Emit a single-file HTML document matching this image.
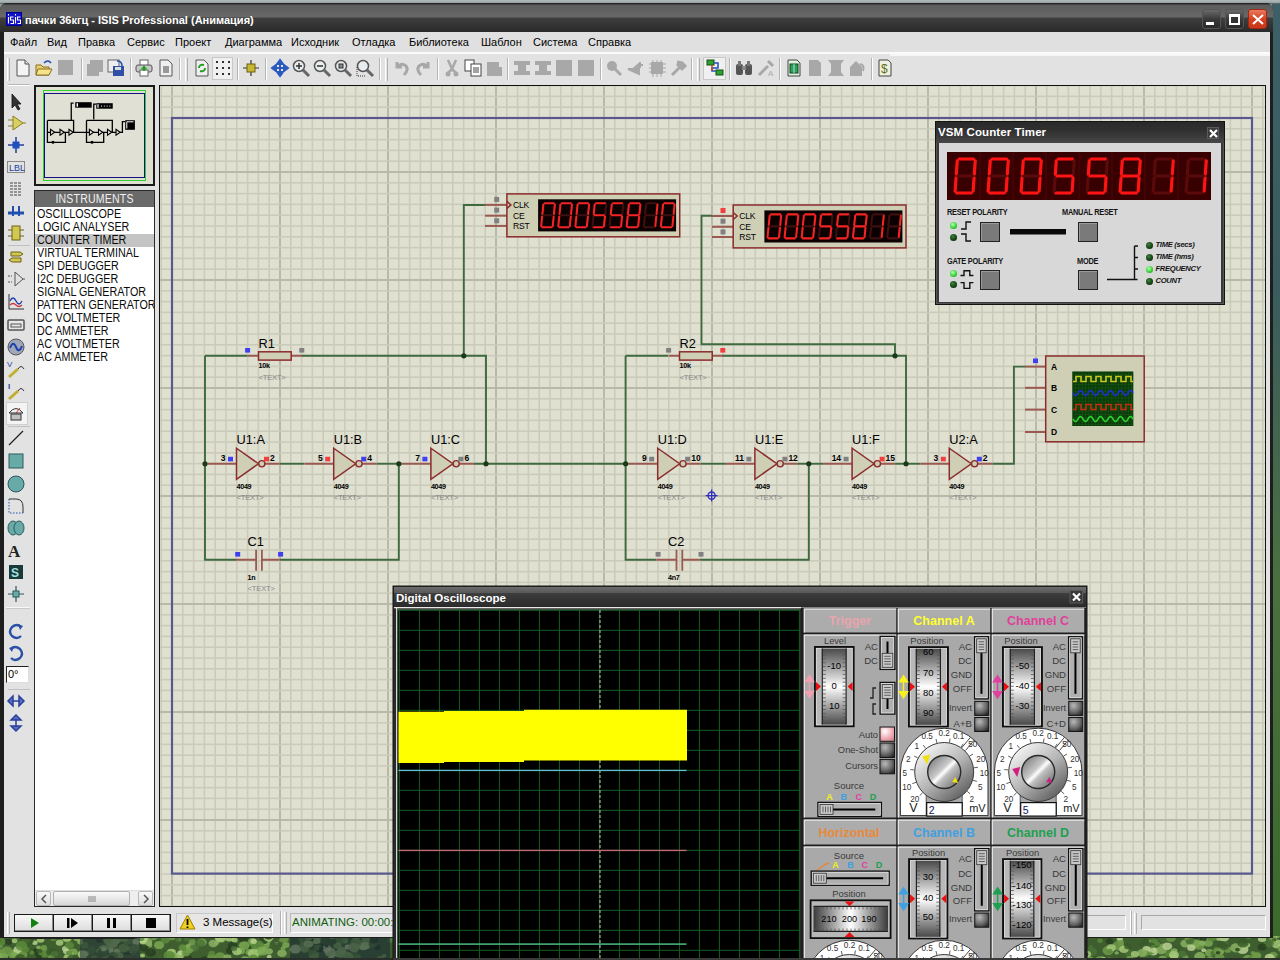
<!DOCTYPE html>
<html><head><meta charset="utf-8">
<style>
*{margin:0;padding:0;box-sizing:border-box}
html,body{width:1280px;height:960px;overflow:hidden;background:#8a9898;font-family:"Liberation Sans",sans-serif}
.a{position:absolute}
svg{position:absolute;overflow:visible}
#desk-top{left:0;top:0;width:1280px;height:4px;background:linear-gradient(180deg,#b0b8b8,#a0aaaa 60%,#3a4a48)}
#desk-right{left:1272px;top:4px;width:8px;height:956px;background:linear-gradient(180deg,#3d6068 0%,#3a5c5e 30%,#4a7040 60%,#3a6a2a 100%)}
#desk-bot{left:0;top:936px;width:1280px;height:24px;background:linear-gradient(90deg,#4a6a30,#2a4020 15%,#5a7a3a 30%,#3a5a28 50%,#4a6a30 70%,#2a3a28 85%,#4a6a30)}
#win{left:0;top:3px;width:1273px;height:935px;background:#1e1e1e;border-radius:7px 7px 0 0}
#title{left:0;top:3px;width:1273px;height:29px;border-radius:7px 7px 0 0;background:linear-gradient(180deg,#222 0px,#2a2a2a 1px,#5c5c5c 2px,#686868 14px,#3e3e3e 15px,#2a2a2a 29px)}
#title .t{left:25px;top:11px;font-size:11px;font-weight:bold;color:#fff;white-space:nowrap}
#menu{left:4px;top:32px;width:1265px;height:20px;background:#e0e0e0}
#menu span{position:absolute;top:4px;font-size:11px;color:#000;white-space:nowrap}
#tb{left:4px;top:52px;width:1265px;height:33px;background:#e2e2e2;border-top:2px solid #fafafa}
#lstrip{left:4px;top:85px;width:28px;height:822px;background:#e2e2e2}
#ovw{left:34px;top:85px;width:121px;height:101px;background:#e0e0d0;border:2px solid #1a1a1a}
#lhead{left:34px;top:190px;width:121px;height:17px;background:#6a6a6a;color:#f4f4f4;font-size:12px;text-align:center;line-height:17px;border:1px solid #222;border-bottom:none}
#list{left:34px;top:207px;width:121px;height:700px;background:#fff;border:1px solid #222;border-top:none}
#list div{position:absolute;left:3px;font-size:11.5px;color:#000;white-space:nowrap;letter-spacing:-0.1px;line-height:13px}
#canvas{left:159px;top:85px;width:1107px;height:822px;background:#e0e0d0;border:1px solid #111;overflow:hidden}
#status{left:4px;top:907px;width:1265px;height:30px;background:#e2e2e2}
</style></head><body>

<div class="a" id="desk-top"></div>
<div class="a" id="desk-right"></div>
<div class="a" id="desk-bot"></div>
<div class="a" style="left:0;top:936px;width:1280px;height:24px;overflow:hidden;background:#3e5e30"><svg style="left:0;top:0" width="1280" height="24"><ellipse cx="412.7" cy="1.9" rx="4.6" ry="3.7" fill="#6e9a48" opacity="0.85"/><ellipse cx="1054.4" cy="0.4" rx="4.3" ry="3.5" fill="#b8d090" opacity="0.85"/><ellipse cx="272.0" cy="0.2" rx="3.7" ry="2.9" fill="#a4c878" opacity="0.85"/><ellipse cx="112.0" cy="9.0" rx="5.3" ry="4.2" fill="#6e9a48" opacity="0.85"/><ellipse cx="1217.2" cy="14.4" rx="4.3" ry="3.5" fill="#5a8a3a" opacity="0.85"/><ellipse cx="739.5" cy="8.3" rx="5.9" ry="4.7" fill="#5a8a3a" opacity="0.85"/><ellipse cx="713.1" cy="1.5" rx="3.7" ry="2.9" fill="#b8d090" opacity="0.85"/><ellipse cx="147.0" cy="6.0" rx="5.3" ry="4.2" fill="#88b060" opacity="0.85"/><ellipse cx="127.9" cy="12.9" rx="2.8" ry="2.2" fill="#6e9a48" opacity="0.85"/><ellipse cx="701.6" cy="-0.4" rx="2.2" ry="1.8" fill="#a4c878" opacity="0.85"/><ellipse cx="635.4" cy="11.8" rx="5.1" ry="4.1" fill="#7aa852" opacity="0.85"/><ellipse cx="750.4" cy="9.8" rx="3.2" ry="2.6" fill="#88b060" opacity="0.85"/><ellipse cx="896.7" cy="4.3" rx="4.3" ry="3.4" fill="#b8d090" opacity="0.85"/><ellipse cx="633.7" cy="6.9" rx="3.8" ry="3.0" fill="#6e9a48" opacity="0.85"/><ellipse cx="147.3" cy="8.9" rx="5.0" ry="4.0" fill="#88b060" opacity="0.85"/><ellipse cx="1198.9" cy="9.0" rx="5.8" ry="4.7" fill="#6e9a48" opacity="0.85"/><ellipse cx="981.3" cy="12.9" rx="5.5" ry="4.4" fill="#283e20" opacity="0.85"/><ellipse cx="433.8" cy="7.1" rx="4.0" ry="3.2" fill="#7aa852" opacity="0.85"/><ellipse cx="83.7" cy="0.4" rx="3.1" ry="2.5" fill="#6e9a48" opacity="0.85"/><ellipse cx="73.3" cy="16.2" rx="4.6" ry="3.7" fill="#7aa852" opacity="0.85"/><ellipse cx="362.1" cy="8.0" rx="4.7" ry="3.7" fill="#5a8a3a" opacity="0.85"/><ellipse cx="1208.4" cy="7.2" rx="4.4" ry="3.6" fill="#7aa852" opacity="0.85"/><ellipse cx="71.1" cy="18.0" rx="2.5" ry="2.0" fill="#a4c878" opacity="0.85"/><ellipse cx="508.3" cy="21.8" rx="4.0" ry="3.2" fill="#88b060" opacity="0.85"/><ellipse cx="574.5" cy="12.3" rx="5.5" ry="4.4" fill="#4a7236" opacity="0.85"/><ellipse cx="1109.5" cy="5.2" rx="3.7" ry="2.9" fill="#283e20" opacity="0.85"/><ellipse cx="875.7" cy="7.9" rx="2.9" ry="2.3" fill="#6e9a48" opacity="0.85"/><ellipse cx="222.3" cy="4.0" rx="2.9" ry="2.3" fill="#7aa852" opacity="0.85"/><ellipse cx="1067.1" cy="2.7" rx="3.1" ry="2.5" fill="#88b060" opacity="0.85"/><ellipse cx="535.4" cy="7.6" rx="4.3" ry="3.4" fill="#88b060" opacity="0.85"/><ellipse cx="885.7" cy="11.4" rx="4.5" ry="3.6" fill="#5a8a3a" opacity="0.85"/><ellipse cx="584.1" cy="20.6" rx="5.8" ry="4.6" fill="#b8d090" opacity="0.85"/><ellipse cx="501.2" cy="8.4" rx="2.4" ry="1.9" fill="#4a7236" opacity="0.85"/><ellipse cx="75.3" cy="-0.2" rx="2.8" ry="2.3" fill="#88b060" opacity="0.85"/><ellipse cx="136.8" cy="13.6" rx="2.4" ry="1.9" fill="#88b060" opacity="0.85"/><ellipse cx="687.2" cy="22.7" rx="4.5" ry="3.6" fill="#6e9a48" opacity="0.85"/><ellipse cx="1122.9" cy="14.0" rx="2.6" ry="2.1" fill="#3a5a28" opacity="0.85"/><ellipse cx="1227.6" cy="13.7" rx="3.9" ry="3.1" fill="#6e9a48" opacity="0.85"/><ellipse cx="1090.1" cy="23.8" rx="3.9" ry="3.1" fill="#7aa852" opacity="0.85"/><ellipse cx="397.3" cy="1.7" rx="5.0" ry="4.0" fill="#3a5a28" opacity="0.85"/><ellipse cx="612.4" cy="16.0" rx="4.1" ry="3.3" fill="#a4c878" opacity="0.85"/><ellipse cx="1221.8" cy="11.7" rx="2.6" ry="2.1" fill="#b8d090" opacity="0.85"/><ellipse cx="1174.2" cy="17.7" rx="3.2" ry="2.6" fill="#6e9a48" opacity="0.85"/><ellipse cx="893.1" cy="4.8" rx="3.5" ry="2.8" fill="#88b060" opacity="0.85"/><ellipse cx="453.8" cy="3.8" rx="4.2" ry="3.3" fill="#b8d090" opacity="0.85"/><ellipse cx="420.3" cy="3.8" rx="5.2" ry="4.2" fill="#a4c878" opacity="0.85"/><ellipse cx="1034.8" cy="19.3" rx="5.0" ry="4.0" fill="#a4c878" opacity="0.85"/><ellipse cx="252.9" cy="10.8" rx="4.9" ry="3.9" fill="#5a8a3a" opacity="0.85"/><ellipse cx="1014.2" cy="10.3" rx="2.8" ry="2.2" fill="#283e20" opacity="0.85"/><ellipse cx="571.9" cy="22.4" rx="6.0" ry="4.8" fill="#283e20" opacity="0.85"/><ellipse cx="98.9" cy="0.7" rx="3.9" ry="3.1" fill="#283e20" opacity="0.85"/><ellipse cx="258.6" cy="14.2" rx="5.6" ry="4.5" fill="#5a8a3a" opacity="0.85"/><ellipse cx="613.5" cy="15.0" rx="5.2" ry="4.2" fill="#6e9a48" opacity="0.85"/><ellipse cx="1071.7" cy="1.1" rx="3.6" ry="2.8" fill="#a4c878" opacity="0.85"/><ellipse cx="611.7" cy="2.6" rx="5.2" ry="4.1" fill="#283e20" opacity="0.85"/><ellipse cx="106.9" cy="22.6" rx="4.9" ry="3.9" fill="#7aa852" opacity="0.85"/><ellipse cx="512.8" cy="22.6" rx="4.9" ry="3.9" fill="#88b060" opacity="0.85"/><ellipse cx="1276.1" cy="-1.3" rx="4.4" ry="3.5" fill="#7aa852" opacity="0.85"/><ellipse cx="1035.4" cy="1.8" rx="5.3" ry="4.2" fill="#7aa852" opacity="0.85"/><ellipse cx="842.9" cy="7.1" rx="4.2" ry="3.4" fill="#88b060" opacity="0.85"/><ellipse cx="22.6" cy="18.8" rx="4.9" ry="3.9" fill="#6e9a48" opacity="0.85"/><ellipse cx="674.3" cy="22.3" rx="3.7" ry="3.0" fill="#a4c878" opacity="0.85"/><ellipse cx="1060.7" cy="3.5" rx="3.0" ry="2.4" fill="#3a5a28" opacity="0.85"/><ellipse cx="641.5" cy="17.9" rx="3.3" ry="2.6" fill="#b8d090" opacity="0.85"/><ellipse cx="535.5" cy="1.4" rx="5.6" ry="4.5" fill="#283e20" opacity="0.85"/><ellipse cx="1153.0" cy="15.2" rx="5.3" ry="4.2" fill="#b8d090" opacity="0.85"/><ellipse cx="537.6" cy="21.9" rx="4.0" ry="3.2" fill="#b8d090" opacity="0.85"/><ellipse cx="190.9" cy="11.3" rx="5.5" ry="4.4" fill="#88b060" opacity="0.85"/><ellipse cx="780.0" cy="18.2" rx="2.6" ry="2.1" fill="#88b060" opacity="0.85"/><ellipse cx="605.8" cy="16.9" rx="4.2" ry="3.4" fill="#283e20" opacity="0.85"/><ellipse cx="875.2" cy="11.8" rx="3.9" ry="3.1" fill="#6e9a48" opacity="0.85"/><ellipse cx="1134.4" cy="-0.5" rx="2.8" ry="2.2" fill="#5a8a3a" opacity="0.85"/><ellipse cx="991.2" cy="11.2" rx="4.2" ry="3.4" fill="#6e9a48" opacity="0.85"/><ellipse cx="566.8" cy="13.9" rx="4.0" ry="3.2" fill="#b8d090" opacity="0.85"/><ellipse cx="252.2" cy="5.2" rx="4.0" ry="3.2" fill="#7aa852" opacity="0.85"/><ellipse cx="650.0" cy="4.4" rx="4.1" ry="3.3" fill="#3a5a28" opacity="0.85"/><ellipse cx="1185.4" cy="21.2" rx="2.8" ry="2.2" fill="#7aa852" opacity="0.85"/><ellipse cx="171.9" cy="1.2" rx="3.8" ry="3.0" fill="#6e9a48" opacity="0.85"/><ellipse cx="860.8" cy="9.1" rx="2.9" ry="2.3" fill="#3a5a28" opacity="0.85"/><ellipse cx="1006.3" cy="21.3" rx="2.6" ry="2.1" fill="#283e20" opacity="0.85"/><ellipse cx="179.4" cy="21.0" rx="5.9" ry="4.7" fill="#a4c878" opacity="0.85"/><ellipse cx="958.2" cy="0.4" rx="5.5" ry="4.4" fill="#88b060" opacity="0.85"/><ellipse cx="1271.9" cy="19.6" rx="2.6" ry="2.1" fill="#4a7236" opacity="0.85"/><ellipse cx="1277.4" cy="8.5" rx="3.7" ry="2.9" fill="#283e20" opacity="0.85"/><ellipse cx="405.9" cy="16.8" rx="2.1" ry="1.7" fill="#b8d090" opacity="0.85"/><ellipse cx="586.7" cy="16.3" rx="3.5" ry="2.8" fill="#b8d090" opacity="0.85"/><ellipse cx="799.9" cy="11.3" rx="2.3" ry="1.8" fill="#a4c878" opacity="0.85"/><ellipse cx="1248.5" cy="0.7" rx="3.1" ry="2.4" fill="#5a8a3a" opacity="0.85"/><ellipse cx="1163.6" cy="2.7" rx="5.0" ry="4.0" fill="#4a7236" opacity="0.85"/><ellipse cx="1091.0" cy="15.6" rx="5.8" ry="4.6" fill="#4a7236" opacity="0.85"/><ellipse cx="187.7" cy="21.9" rx="4.3" ry="3.4" fill="#283e20" opacity="0.85"/><ellipse cx="110.4" cy="-0.5" rx="4.8" ry="3.8" fill="#4a7236" opacity="0.85"/><ellipse cx="1149.9" cy="5.0" rx="2.1" ry="1.7" fill="#6e9a48" opacity="0.85"/><ellipse cx="1029.1" cy="0.2" rx="5.4" ry="4.3" fill="#6e9a48" opacity="0.85"/><ellipse cx="336.1" cy="1.2" rx="2.0" ry="1.6" fill="#b8d090" opacity="0.85"/><ellipse cx="533.9" cy="21.8" rx="4.5" ry="3.6" fill="#5a8a3a" opacity="0.85"/><ellipse cx="674.7" cy="4.2" rx="2.4" ry="2.0" fill="#88b060" opacity="0.85"/><ellipse cx="332.8" cy="2.7" rx="5.7" ry="4.6" fill="#3a5a28" opacity="0.85"/><ellipse cx="680.1" cy="3.4" rx="3.8" ry="3.0" fill="#88b060" opacity="0.85"/><ellipse cx="344.0" cy="18.9" rx="6.0" ry="4.8" fill="#5a8a3a" opacity="0.85"/><ellipse cx="14.8" cy="17.1" rx="4.2" ry="3.4" fill="#a4c878" opacity="0.85"/><ellipse cx="658.4" cy="4.4" rx="3.8" ry="3.0" fill="#4a7236" opacity="0.85"/><ellipse cx="841.9" cy="12.2" rx="5.6" ry="4.4" fill="#b8d090" opacity="0.85"/><ellipse cx="392.0" cy="3.6" rx="2.9" ry="2.3" fill="#a4c878" opacity="0.85"/><ellipse cx="1068.6" cy="16.4" rx="4.5" ry="3.6" fill="#4a7236" opacity="0.85"/><ellipse cx="1271.4" cy="23.5" rx="5.3" ry="4.3" fill="#5a8a3a" opacity="0.85"/><ellipse cx="86.2" cy="17.3" rx="3.0" ry="2.4" fill="#88b060" opacity="0.85"/><ellipse cx="66.5" cy="15.3" rx="3.5" ry="2.8" fill="#b8d090" opacity="0.85"/><ellipse cx="860.0" cy="5.3" rx="3.0" ry="2.4" fill="#3a5a28" opacity="0.85"/><ellipse cx="53.4" cy="2.8" rx="3.1" ry="2.5" fill="#5a8a3a" opacity="0.85"/><ellipse cx="334.6" cy="23.0" rx="5.9" ry="4.7" fill="#b8d090" opacity="0.85"/><ellipse cx="412.4" cy="-1.1" rx="5.5" ry="4.4" fill="#a4c878" opacity="0.85"/><ellipse cx="455.0" cy="-2.0" rx="3.5" ry="2.8" fill="#7aa852" opacity="0.85"/><ellipse cx="354.8" cy="15.1" rx="3.0" ry="2.4" fill="#5a8a3a" opacity="0.85"/><ellipse cx="112.2" cy="19.2" rx="2.6" ry="2.1" fill="#5a8a3a" opacity="0.85"/><ellipse cx="503.2" cy="5.8" rx="4.5" ry="3.6" fill="#6e9a48" opacity="0.85"/><ellipse cx="750.4" cy="11.8" rx="5.0" ry="4.0" fill="#4a7236" opacity="0.85"/><ellipse cx="981.0" cy="16.7" rx="4.0" ry="3.2" fill="#3a5a28" opacity="0.85"/><ellipse cx="929.2" cy="14.7" rx="2.2" ry="1.7" fill="#b8d090" opacity="0.85"/><ellipse cx="804.3" cy="17.1" rx="5.2" ry="4.2" fill="#88b060" opacity="0.85"/><ellipse cx="1168.8" cy="17.6" rx="4.3" ry="3.4" fill="#5a8a3a" opacity="0.85"/><ellipse cx="1061.1" cy="13.2" rx="5.6" ry="4.5" fill="#a4c878" opacity="0.85"/><ellipse cx="104.8" cy="-0.9" rx="4.5" ry="3.6" fill="#6e9a48" opacity="0.85"/><ellipse cx="480.8" cy="9.7" rx="2.2" ry="1.8" fill="#5a8a3a" opacity="0.85"/><ellipse cx="802.8" cy="15.7" rx="4.0" ry="3.2" fill="#5a8a3a" opacity="0.85"/><ellipse cx="584.5" cy="-0.2" rx="5.7" ry="4.6" fill="#b8d090" opacity="0.85"/><ellipse cx="113.6" cy="11.7" rx="5.0" ry="4.0" fill="#7aa852" opacity="0.85"/><ellipse cx="320.3" cy="-0.1" rx="3.1" ry="2.4" fill="#a4c878" opacity="0.85"/><ellipse cx="292.6" cy="14.9" rx="3.8" ry="3.1" fill="#4a7236" opacity="0.85"/><ellipse cx="94.0" cy="21.7" rx="3.1" ry="2.5" fill="#5a8a3a" opacity="0.85"/><ellipse cx="790.9" cy="14.7" rx="2.3" ry="1.8" fill="#88b060" opacity="0.85"/><ellipse cx="423.0" cy="14.9" rx="4.8" ry="3.8" fill="#88b060" opacity="0.85"/><ellipse cx="11.1" cy="-0.4" rx="3.1" ry="2.5" fill="#6e9a48" opacity="0.85"/><ellipse cx="887.9" cy="15.6" rx="3.2" ry="2.5" fill="#b8d090" opacity="0.85"/><ellipse cx="363.4" cy="10.1" rx="5.1" ry="4.1" fill="#b8d090" opacity="0.85"/><ellipse cx="252.0" cy="23.4" rx="5.7" ry="4.6" fill="#5a8a3a" opacity="0.85"/><ellipse cx="368.6" cy="-0.0" rx="4.0" ry="3.2" fill="#7aa852" opacity="0.85"/><ellipse cx="1277.2" cy="8.1" rx="5.7" ry="4.5" fill="#a4c878" opacity="0.85"/><ellipse cx="91.3" cy="0.3" rx="5.0" ry="4.0" fill="#3a5a28" opacity="0.85"/><ellipse cx="1224.0" cy="1.4" rx="5.3" ry="4.2" fill="#b8d090" opacity="0.85"/><ellipse cx="355.6" cy="0.9" rx="3.5" ry="2.8" fill="#7aa852" opacity="0.85"/><ellipse cx="1153.0" cy="10.6" rx="2.1" ry="1.7" fill="#5a8a3a" opacity="0.85"/><ellipse cx="1220.4" cy="15.7" rx="3.6" ry="2.9" fill="#88b060" opacity="0.85"/><ellipse cx="531.9" cy="7.8" rx="2.5" ry="2.0" fill="#283e20" opacity="0.85"/><ellipse cx="-2.8" cy="17.5" rx="5.4" ry="4.3" fill="#6e9a48" opacity="0.85"/><ellipse cx="1207.4" cy="3.1" rx="2.0" ry="1.6" fill="#3a5a28" opacity="0.85"/><ellipse cx="321.6" cy="-0.3" rx="3.6" ry="2.8" fill="#6e9a48" opacity="0.85"/><ellipse cx="460.3" cy="9.1" rx="3.1" ry="2.5" fill="#5a8a3a" opacity="0.85"/><ellipse cx="357.0" cy="-0.7" rx="4.6" ry="3.7" fill="#88b060" opacity="0.85"/><ellipse cx="316.6" cy="4.9" rx="4.0" ry="3.2" fill="#a4c878" opacity="0.85"/><ellipse cx="992.4" cy="18.4" rx="3.7" ry="3.0" fill="#5a8a3a" opacity="0.85"/><ellipse cx="1042.4" cy="14.4" rx="5.7" ry="4.5" fill="#b8d090" opacity="0.85"/><ellipse cx="703.5" cy="16.7" rx="2.2" ry="1.8" fill="#4a7236" opacity="0.85"/><ellipse cx="576.6" cy="17.6" rx="4.6" ry="3.7" fill="#3a5a28" opacity="0.85"/><ellipse cx="621.4" cy="21.7" rx="4.2" ry="3.4" fill="#88b060" opacity="0.85"/><ellipse cx="604.1" cy="6.9" rx="3.2" ry="2.6" fill="#3a5a28" opacity="0.85"/><ellipse cx="519.0" cy="4.2" rx="3.9" ry="3.1" fill="#4a7236" opacity="0.85"/><ellipse cx="149.5" cy="14.7" rx="2.3" ry="1.8" fill="#b8d090" opacity="0.85"/><ellipse cx="1163.7" cy="10.9" rx="2.9" ry="2.3" fill="#283e20" opacity="0.85"/><ellipse cx="1280.5" cy="9.7" rx="2.6" ry="2.0" fill="#a4c878" opacity="0.85"/><ellipse cx="309.9" cy="2.5" rx="4.2" ry="3.4" fill="#283e20" opacity="0.85"/><ellipse cx="303.5" cy="4.7" rx="4.3" ry="3.4" fill="#5a8a3a" opacity="0.85"/><ellipse cx="962.1" cy="8.7" rx="3.7" ry="2.9" fill="#b8d090" opacity="0.85"/><ellipse cx="265.9" cy="5.0" rx="5.0" ry="4.0" fill="#7aa852" opacity="0.85"/><ellipse cx="353.0" cy="23.2" rx="2.5" ry="2.0" fill="#b8d090" opacity="0.85"/><ellipse cx="677.7" cy="18.5" rx="5.4" ry="4.3" fill="#6e9a48" opacity="0.85"/><ellipse cx="344.6" cy="4.5" rx="3.6" ry="2.9" fill="#7aa852" opacity="0.85"/><ellipse cx="552.1" cy="6.1" rx="5.3" ry="4.2" fill="#5a8a3a" opacity="0.85"/><ellipse cx="159.1" cy="9.1" rx="5.1" ry="4.0" fill="#7aa852" opacity="0.85"/><ellipse cx="1244.1" cy="10.7" rx="2.3" ry="1.8" fill="#b8d090" opacity="0.85"/><ellipse cx="1098.5" cy="23.3" rx="3.0" ry="2.4" fill="#6e9a48" opacity="0.85"/><ellipse cx="283.7" cy="2.0" rx="5.9" ry="4.7" fill="#6e9a48" opacity="0.85"/><ellipse cx="1209.5" cy="16.8" rx="4.6" ry="3.7" fill="#7aa852" opacity="0.85"/><ellipse cx="104.7" cy="18.2" rx="2.0" ry="1.6" fill="#88b060" opacity="0.85"/><ellipse cx="295.0" cy="21.9" rx="4.6" ry="3.7" fill="#3a5a28" opacity="0.85"/><ellipse cx="1236.5" cy="14.3" rx="4.1" ry="3.3" fill="#4a7236" opacity="0.85"/><ellipse cx="896.2" cy="0.9" rx="2.3" ry="1.8" fill="#b8d090" opacity="0.85"/><ellipse cx="1212.2" cy="3.0" rx="3.0" ry="2.4" fill="#5a8a3a" opacity="0.85"/><ellipse cx="8.5" cy="5.8" rx="3.8" ry="3.1" fill="#283e20" opacity="0.85"/><ellipse cx="826.5" cy="21.0" rx="3.9" ry="3.1" fill="#a4c878" opacity="0.85"/><ellipse cx="700.6" cy="-1.2" rx="3.6" ry="2.9" fill="#3a5a28" opacity="0.85"/><ellipse cx="66.3" cy="3.0" rx="5.5" ry="4.4" fill="#4a7236" opacity="0.85"/><ellipse cx="99.6" cy="3.9" rx="3.7" ry="3.0" fill="#283e20" opacity="0.85"/><ellipse cx="287.6" cy="-1.1" rx="3.4" ry="2.7" fill="#4a7236" opacity="0.85"/><ellipse cx="462.4" cy="8.3" rx="2.0" ry="1.6" fill="#3a5a28" opacity="0.85"/><ellipse cx="948.5" cy="11.1" rx="2.8" ry="2.3" fill="#a4c878" opacity="0.85"/><ellipse cx="397.1" cy="19.3" rx="2.9" ry="2.3" fill="#a4c878" opacity="0.85"/><ellipse cx="336.9" cy="21.1" rx="2.4" ry="1.9" fill="#7aa852" opacity="0.85"/><ellipse cx="782.0" cy="21.3" rx="3.9" ry="3.2" fill="#5a8a3a" opacity="0.85"/><ellipse cx="1218.9" cy="1.8" rx="3.6" ry="2.9" fill="#a4c878" opacity="0.85"/><ellipse cx="25.5" cy="13.5" rx="3.7" ry="2.9" fill="#5a8a3a" opacity="0.85"/><ellipse cx="232.5" cy="9.7" rx="4.8" ry="3.9" fill="#283e20" opacity="0.85"/><ellipse cx="940.2" cy="23.9" rx="5.7" ry="4.6" fill="#283e20" opacity="0.85"/><ellipse cx="241.0" cy="15.0" rx="4.1" ry="3.3" fill="#7aa852" opacity="0.85"/><ellipse cx="36.1" cy="15.3" rx="3.5" ry="2.8" fill="#283e20" opacity="0.85"/><ellipse cx="1265.6" cy="9.5" rx="2.4" ry="1.9" fill="#6e9a48" opacity="0.85"/><ellipse cx="356.0" cy="7.1" rx="5.8" ry="4.7" fill="#6e9a48" opacity="0.85"/><ellipse cx="718.9" cy="17.7" rx="3.5" ry="2.8" fill="#3a5a28" opacity="0.85"/><ellipse cx="1055.4" cy="9.2" rx="2.2" ry="1.8" fill="#7aa852" opacity="0.85"/><ellipse cx="247.5" cy="12.1" rx="3.8" ry="3.0" fill="#283e20" opacity="0.85"/><ellipse cx="464.9" cy="21.3" rx="2.1" ry="1.7" fill="#4a7236" opacity="0.85"/><ellipse cx="314.9" cy="14.3" rx="3.6" ry="2.9" fill="#4a7236" opacity="0.85"/><ellipse cx="40.0" cy="-0.4" rx="5.7" ry="4.5" fill="#3a5a28" opacity="0.85"/><ellipse cx="246.5" cy="-0.4" rx="4.4" ry="3.5" fill="#283e20" opacity="0.85"/><ellipse cx="346.3" cy="22.9" rx="4.5" ry="3.6" fill="#3a5a28" opacity="0.85"/><ellipse cx="957.9" cy="15.9" rx="5.7" ry="4.6" fill="#3a5a28" opacity="0.85"/><ellipse cx="-0.1" cy="17.6" rx="5.7" ry="4.5" fill="#6e9a48" opacity="0.85"/><ellipse cx="26.3" cy="4.1" rx="3.9" ry="3.1" fill="#7aa852" opacity="0.85"/><ellipse cx="1225.5" cy="8.0" rx="3.0" ry="2.4" fill="#4a7236" opacity="0.85"/><ellipse cx="1046.1" cy="1.5" rx="4.0" ry="3.2" fill="#5a8a3a" opacity="0.85"/><ellipse cx="1030.3" cy="17.2" rx="5.3" ry="4.2" fill="#88b060" opacity="0.85"/><ellipse cx="778.4" cy="6.5" rx="3.3" ry="2.6" fill="#283e20" opacity="0.85"/><ellipse cx="1006.1" cy="13.5" rx="4.0" ry="3.2" fill="#4a7236" opacity="0.85"/><ellipse cx="966.2" cy="4.4" rx="2.3" ry="1.8" fill="#5a8a3a" opacity="0.85"/><ellipse cx="616.4" cy="12.2" rx="2.6" ry="2.1" fill="#4a7236" opacity="0.85"/><ellipse cx="1134.7" cy="23.7" rx="3.1" ry="2.4" fill="#6e9a48" opacity="0.85"/><ellipse cx="263.8" cy="8.9" rx="6.0" ry="4.8" fill="#7aa852" opacity="0.85"/><ellipse cx="218.4" cy="1.5" rx="3.8" ry="3.1" fill="#a4c878" opacity="0.85"/><ellipse cx="959.9" cy="20.0" rx="4.7" ry="3.7" fill="#6e9a48" opacity="0.85"/><ellipse cx="1000.9" cy="5.6" rx="3.1" ry="2.5" fill="#3a5a28" opacity="0.85"/><ellipse cx="476.1" cy="17.2" rx="2.8" ry="2.2" fill="#a4c878" opacity="0.85"/><ellipse cx="234.6" cy="4.1" rx="3.1" ry="2.5" fill="#a4c878" opacity="0.85"/><ellipse cx="416.0" cy="8.3" rx="6.0" ry="4.8" fill="#b8d090" opacity="0.85"/><ellipse cx="673.9" cy="14.9" rx="2.4" ry="1.9" fill="#7aa852" opacity="0.85"/><ellipse cx="1273.3" cy="0.7" rx="3.9" ry="3.1" fill="#a4c878" opacity="0.85"/><ellipse cx="1079.3" cy="21.8" rx="2.2" ry="1.7" fill="#3a5a28" opacity="0.85"/><ellipse cx="295.4" cy="-0.7" rx="4.4" ry="3.5" fill="#a4c878" opacity="0.85"/><ellipse cx="1194.9" cy="7.7" rx="5.5" ry="4.4" fill="#7aa852" opacity="0.85"/><ellipse cx="772.9" cy="18.1" rx="4.7" ry="3.7" fill="#5a8a3a" opacity="0.85"/><ellipse cx="131.5" cy="13.5" rx="4.5" ry="3.6" fill="#a4c878" opacity="0.85"/><ellipse cx="43.3" cy="6.8" rx="2.2" ry="1.7" fill="#3a5a28" opacity="0.85"/><ellipse cx="44.3" cy="17.0" rx="5.7" ry="4.5" fill="#5a8a3a" opacity="0.85"/><ellipse cx="1051.3" cy="8.6" rx="3.5" ry="2.8" fill="#3a5a28" opacity="0.85"/><ellipse cx="95.5" cy="-1.2" rx="4.0" ry="3.2" fill="#7aa852" opacity="0.85"/><ellipse cx="76.6" cy="0.6" rx="3.6" ry="2.9" fill="#b8d090" opacity="0.85"/><ellipse cx="194.4" cy="11.9" rx="4.6" ry="3.7" fill="#4a7236" opacity="0.85"/><ellipse cx="892.1" cy="8.7" rx="3.1" ry="2.5" fill="#3a5a28" opacity="0.85"/><ellipse cx="534.0" cy="-0.7" rx="5.0" ry="4.0" fill="#283e20" opacity="0.85"/><ellipse cx="529.2" cy="-1.5" rx="5.1" ry="4.1" fill="#283e20" opacity="0.85"/><ellipse cx="826.4" cy="8.2" rx="3.6" ry="2.9" fill="#5a8a3a" opacity="0.85"/><ellipse cx="555.1" cy="2.1" rx="2.5" ry="2.0" fill="#6e9a48" opacity="0.85"/><ellipse cx="519.0" cy="21.0" rx="3.8" ry="3.1" fill="#88b060" opacity="0.85"/><ellipse cx="162.7" cy="-0.7" rx="2.6" ry="2.1" fill="#4a7236" opacity="0.85"/><ellipse cx="109.9" cy="14.2" rx="3.5" ry="2.8" fill="#b8d090" opacity="0.85"/><ellipse cx="216.5" cy="7.0" rx="2.6" ry="2.1" fill="#88b060" opacity="0.85"/><ellipse cx="1188.9" cy="0.8" rx="4.0" ry="3.2" fill="#a4c878" opacity="0.85"/><ellipse cx="384.1" cy="19.8" rx="2.2" ry="1.7" fill="#7aa852" opacity="0.85"/><ellipse cx="400.7" cy="13.8" rx="4.5" ry="3.6" fill="#6e9a48" opacity="0.85"/><ellipse cx="1161.4" cy="14.1" rx="5.3" ry="4.2" fill="#88b060" opacity="0.85"/><ellipse cx="821.0" cy="20.3" rx="4.5" ry="3.6" fill="#a4c878" opacity="0.85"/><ellipse cx="1064.7" cy="2.8" rx="2.9" ry="2.3" fill="#4a7236" opacity="0.85"/><ellipse cx="1205.7" cy="2.1" rx="3.4" ry="2.7" fill="#88b060" opacity="0.85"/><ellipse cx="313.7" cy="16.8" rx="5.6" ry="4.5" fill="#5a8a3a" opacity="0.85"/><ellipse cx="1135.2" cy="19.9" rx="4.7" ry="3.8" fill="#283e20" opacity="0.85"/><ellipse cx="146.9" cy="13.6" rx="4.2" ry="3.4" fill="#3a5a28" opacity="0.85"/><ellipse cx="832.2" cy="6.0" rx="3.0" ry="2.4" fill="#4a7236" opacity="0.85"/><ellipse cx="844.9" cy="9.6" rx="3.8" ry="3.0" fill="#5a8a3a" opacity="0.85"/><ellipse cx="-0.5" cy="23.6" rx="3.9" ry="3.1" fill="#7aa852" opacity="0.85"/><ellipse cx="980.0" cy="18.3" rx="3.8" ry="3.1" fill="#88b060" opacity="0.85"/><ellipse cx="1040.6" cy="8.4" rx="2.3" ry="1.8" fill="#283e20" opacity="0.85"/><ellipse cx="550.5" cy="0.4" rx="3.8" ry="3.0" fill="#b8d090" opacity="0.85"/><ellipse cx="842.7" cy="-0.9" rx="2.5" ry="2.0" fill="#283e20" opacity="0.85"/><ellipse cx="998.2" cy="11.3" rx="2.2" ry="1.8" fill="#b8d090" opacity="0.85"/><ellipse cx="1149.4" cy="15.0" rx="5.1" ry="4.1" fill="#5a8a3a" opacity="0.85"/><ellipse cx="1100.6" cy="23.9" rx="4.9" ry="3.9" fill="#6e9a48" opacity="0.85"/><ellipse cx="244.9" cy="23.5" rx="4.0" ry="3.2" fill="#88b060" opacity="0.85"/><ellipse cx="880.1" cy="16.7" rx="2.9" ry="2.3" fill="#283e20" opacity="0.85"/><ellipse cx="782.5" cy="4.6" rx="3.3" ry="2.6" fill="#3a5a28" opacity="0.85"/><ellipse cx="1162.5" cy="9.9" rx="3.0" ry="2.4" fill="#7aa852" opacity="0.85"/><ellipse cx="263.7" cy="4.8" rx="4.0" ry="3.2" fill="#283e20" opacity="0.85"/><ellipse cx="475.2" cy="3.2" rx="3.6" ry="2.9" fill="#3a5a28" opacity="0.85"/><ellipse cx="871.8" cy="21.3" rx="2.7" ry="2.1" fill="#3a5a28" opacity="0.85"/><ellipse cx="143.5" cy="11.8" rx="4.5" ry="3.6" fill="#283e20" opacity="0.85"/><ellipse cx="1241.3" cy="9.8" rx="4.1" ry="3.3" fill="#6e9a48" opacity="0.85"/><ellipse cx="320.1" cy="11.9" rx="5.4" ry="4.3" fill="#283e20" opacity="0.85"/><ellipse cx="336.5" cy="23.8" rx="4.3" ry="3.4" fill="#283e20" opacity="0.85"/><ellipse cx="421.8" cy="0.1" rx="2.9" ry="2.3" fill="#5a8a3a" opacity="0.85"/><ellipse cx="377.3" cy="11.4" rx="3.2" ry="2.6" fill="#283e20" opacity="0.85"/><ellipse cx="940.6" cy="17.4" rx="2.9" ry="2.3" fill="#3a5a28" opacity="0.85"/><ellipse cx="789.7" cy="9.2" rx="4.1" ry="3.2" fill="#5a8a3a" opacity="0.85"/><ellipse cx="165.3" cy="3.9" rx="4.6" ry="3.7" fill="#5a8a3a" opacity="0.85"/><ellipse cx="65.2" cy="12.7" rx="3.2" ry="2.6" fill="#b8d090" opacity="0.85"/><ellipse cx="455.7" cy="3.8" rx="4.3" ry="3.5" fill="#88b060" opacity="0.85"/><ellipse cx="258.4" cy="14.2" rx="3.9" ry="3.1" fill="#88b060" opacity="0.85"/><ellipse cx="13.2" cy="18.8" rx="4.8" ry="3.9" fill="#7aa852" opacity="0.85"/><ellipse cx="118.6" cy="14.6" rx="5.5" ry="4.4" fill="#3a5a28" opacity="0.85"/><ellipse cx="513.5" cy="4.9" rx="2.0" ry="1.6" fill="#b8d090" opacity="0.85"/><ellipse cx="1146.6" cy="13.5" rx="4.3" ry="3.5" fill="#b8d090" opacity="0.85"/><ellipse cx="941.2" cy="4.5" rx="5.6" ry="4.5" fill="#5a8a3a" opacity="0.85"/><ellipse cx="74.4" cy="-1.3" rx="2.7" ry="2.2" fill="#88b060" opacity="0.85"/><ellipse cx="70.3" cy="18.3" rx="2.0" ry="1.6" fill="#b8d090" opacity="0.85"/><ellipse cx="842.3" cy="3.1" rx="3.7" ry="2.9" fill="#b8d090" opacity="0.85"/><ellipse cx="779.4" cy="11.2" rx="4.6" ry="3.7" fill="#88b060" opacity="0.85"/><ellipse cx="651.1" cy="-0.3" rx="4.5" ry="3.6" fill="#7aa852" opacity="0.85"/><ellipse cx="917.9" cy="-1.8" rx="5.4" ry="4.3" fill="#7aa852" opacity="0.85"/><ellipse cx="98.8" cy="15.0" rx="2.7" ry="2.2" fill="#6e9a48" opacity="0.85"/><ellipse cx="332.2" cy="14.7" rx="2.5" ry="2.0" fill="#3a5a28" opacity="0.85"/><ellipse cx="913.1" cy="4.9" rx="4.2" ry="3.4" fill="#4a7236" opacity="0.85"/><ellipse cx="879.6" cy="21.8" rx="5.9" ry="4.7" fill="#3a5a28" opacity="0.85"/><ellipse cx="823.2" cy="23.1" rx="2.9" ry="2.3" fill="#b8d090" opacity="0.85"/><ellipse cx="14.6" cy="4.8" rx="2.9" ry="2.4" fill="#a4c878" opacity="0.85"/><ellipse cx="1213.7" cy="17.4" rx="3.3" ry="2.6" fill="#4a7236" opacity="0.85"/><ellipse cx="418.8" cy="4.2" rx="5.6" ry="4.5" fill="#b8d090" opacity="0.85"/><ellipse cx="600.6" cy="19.8" rx="4.8" ry="3.8" fill="#5a8a3a" opacity="0.85"/><ellipse cx="559.0" cy="16.8" rx="4.3" ry="3.4" fill="#3a5a28" opacity="0.85"/><ellipse cx="1013.1" cy="8.2" rx="4.3" ry="3.5" fill="#88b060" opacity="0.85"/><ellipse cx="181.5" cy="-1.3" rx="2.4" ry="1.9" fill="#88b060" opacity="0.85"/><ellipse cx="439.9" cy="1.7" rx="2.1" ry="1.7" fill="#5a8a3a" opacity="0.85"/><ellipse cx="173.5" cy="14.7" rx="2.2" ry="1.7" fill="#6e9a48" opacity="0.85"/><ellipse cx="945.5" cy="-0.3" rx="4.4" ry="3.5" fill="#283e20" opacity="0.85"/><ellipse cx="252.1" cy="22.8" rx="4.1" ry="3.3" fill="#6e9a48" opacity="0.85"/><ellipse cx="1129.8" cy="17.7" rx="4.8" ry="3.9" fill="#4a7236" opacity="0.85"/><ellipse cx="133.2" cy="3.3" rx="2.4" ry="2.0" fill="#5a8a3a" opacity="0.85"/><ellipse cx="1219.5" cy="21.7" rx="5.0" ry="4.0" fill="#6e9a48" opacity="0.85"/><ellipse cx="1059.3" cy="14.4" rx="3.1" ry="2.5" fill="#6e9a48" opacity="0.85"/><ellipse cx="166.1" cy="18.6" rx="4.6" ry="3.7" fill="#3a5a28" opacity="0.85"/><ellipse cx="406.7" cy="9.0" rx="2.1" ry="1.7" fill="#3a5a28" opacity="0.85"/><ellipse cx="1194.8" cy="-0.7" rx="5.0" ry="4.0" fill="#283e20" opacity="0.85"/><ellipse cx="987.3" cy="13.7" rx="3.9" ry="3.1" fill="#3a5a28" opacity="0.85"/><ellipse cx="792.6" cy="-1.2" rx="3.7" ry="2.9" fill="#4a7236" opacity="0.85"/><ellipse cx="664.0" cy="0.6" rx="3.9" ry="3.1" fill="#5a8a3a" opacity="0.85"/><ellipse cx="688.9" cy="3.6" rx="5.4" ry="4.4" fill="#6e9a48" opacity="0.85"/><ellipse cx="736.2" cy="5.5" rx="3.7" ry="3.0" fill="#b8d090" opacity="0.85"/><ellipse cx="255.6" cy="17.8" rx="5.9" ry="4.7" fill="#5a8a3a" opacity="0.85"/><ellipse cx="443.7" cy="0.5" rx="4.8" ry="3.8" fill="#88b060" opacity="0.85"/><ellipse cx="1242.6" cy="13.4" rx="5.8" ry="4.7" fill="#b8d090" opacity="0.85"/><ellipse cx="331.1" cy="22.5" rx="3.1" ry="2.5" fill="#a4c878" opacity="0.85"/><ellipse cx="1205.4" cy="4.0" rx="2.7" ry="2.1" fill="#6e9a48" opacity="0.85"/><ellipse cx="627.5" cy="23.8" rx="4.2" ry="3.4" fill="#6e9a48" opacity="0.85"/><ellipse cx="805.0" cy="7.2" rx="3.6" ry="2.9" fill="#4a7236" opacity="0.85"/><ellipse cx="1145.5" cy="17.4" rx="3.7" ry="3.0" fill="#5a8a3a" opacity="0.85"/><ellipse cx="474.8" cy="5.9" rx="3.7" ry="3.0" fill="#b8d090" opacity="0.85"/><ellipse cx="641.5" cy="7.9" rx="5.5" ry="4.4" fill="#a4c878" opacity="0.85"/><ellipse cx="1212.7" cy="1.3" rx="4.4" ry="3.5" fill="#5a8a3a" opacity="0.85"/><ellipse cx="444.5" cy="6.5" rx="2.6" ry="2.1" fill="#7aa852" opacity="0.85"/><ellipse cx="849.1" cy="17.3" rx="2.7" ry="2.1" fill="#7aa852" opacity="0.85"/><ellipse cx="883.9" cy="4.7" rx="2.9" ry="2.3" fill="#283e20" opacity="0.85"/><ellipse cx="591.0" cy="21.0" rx="3.0" ry="2.4" fill="#a4c878" opacity="0.85"/><ellipse cx="340.1" cy="17.6" rx="5.3" ry="4.2" fill="#88b060" opacity="0.85"/><ellipse cx="928.1" cy="23.3" rx="4.9" ry="3.9" fill="#b8d090" opacity="0.85"/><ellipse cx="444.7" cy="4.1" rx="5.8" ry="4.7" fill="#3a5a28" opacity="0.85"/><ellipse cx="1252.9" cy="16.9" rx="2.4" ry="1.9" fill="#6e9a48" opacity="0.85"/><ellipse cx="247.1" cy="1.9" rx="2.6" ry="2.1" fill="#3a5a28" opacity="0.85"/><ellipse cx="940.9" cy="9.3" rx="2.8" ry="2.2" fill="#6e9a48" opacity="0.85"/><ellipse cx="357.2" cy="21.0" rx="3.9" ry="3.1" fill="#5a8a3a" opacity="0.85"/><ellipse cx="509.7" cy="18.6" rx="4.8" ry="3.8" fill="#b8d090" opacity="0.85"/><ellipse cx="1260.3" cy="5.7" rx="2.1" ry="1.7" fill="#3a5a28" opacity="0.85"/><ellipse cx="773.8" cy="8.5" rx="5.0" ry="4.0" fill="#4a7236" opacity="0.85"/><ellipse cx="899.5" cy="13.3" rx="4.6" ry="3.7" fill="#a4c878" opacity="0.85"/><ellipse cx="856.6" cy="15.0" rx="5.5" ry="4.4" fill="#a4c878" opacity="0.85"/><ellipse cx="871.7" cy="14.7" rx="3.8" ry="3.1" fill="#283e20" opacity="0.85"/><ellipse cx="330.2" cy="16.2" rx="5.6" ry="4.5" fill="#a4c878" opacity="0.85"/><ellipse cx="1004.3" cy="16.5" rx="4.5" ry="3.6" fill="#3a5a28" opacity="0.85"/><ellipse cx="1090.8" cy="10.6" rx="2.1" ry="1.7" fill="#4a7236" opacity="0.85"/><ellipse cx="663.5" cy="15.2" rx="5.5" ry="4.4" fill="#283e20" opacity="0.85"/><ellipse cx="998.9" cy="8.1" rx="4.0" ry="3.2" fill="#6e9a48" opacity="0.85"/><ellipse cx="44.2" cy="12.1" rx="2.6" ry="2.1" fill="#a4c878" opacity="0.85"/><ellipse cx="664.8" cy="0.6" rx="4.3" ry="3.4" fill="#b8d090" opacity="0.85"/><ellipse cx="259.4" cy="10.4" rx="2.1" ry="1.7" fill="#283e20" opacity="0.85"/><ellipse cx="668.0" cy="8.7" rx="5.8" ry="4.6" fill="#a4c878" opacity="0.85"/><ellipse cx="1272.5" cy="2.8" rx="4.1" ry="3.2" fill="#6e9a48" opacity="0.85"/><ellipse cx="935.5" cy="14.0" rx="4.6" ry="3.6" fill="#3a5a28" opacity="0.85"/><ellipse cx="348.9" cy="8.4" rx="2.1" ry="1.6" fill="#4a7236" opacity="0.85"/><ellipse cx="1175.9" cy="14.3" rx="4.7" ry="3.8" fill="#3a5a28" opacity="0.85"/><ellipse cx="135.9" cy="5.9" rx="3.6" ry="2.9" fill="#b8d090" opacity="0.85"/><ellipse cx="1248.2" cy="23.8" rx="5.8" ry="4.7" fill="#7aa852" opacity="0.85"/><ellipse cx="268.5" cy="1.4" rx="5.1" ry="4.1" fill="#a4c878" opacity="0.85"/><ellipse cx="600.2" cy="12.6" rx="2.9" ry="2.3" fill="#88b060" opacity="0.85"/><ellipse cx="450.5" cy="14.6" rx="5.3" ry="4.2" fill="#4a7236" opacity="0.85"/><ellipse cx="598.9" cy="5.7" rx="4.2" ry="3.4" fill="#88b060" opacity="0.85"/><ellipse cx="1001.0" cy="10.2" rx="5.1" ry="4.1" fill="#a4c878" opacity="0.85"/><ellipse cx="340.0" cy="7.8" rx="3.0" ry="2.4" fill="#4a7236" opacity="0.85"/><ellipse cx="870.7" cy="10.5" rx="5.2" ry="4.2" fill="#3a5a28" opacity="0.85"/><ellipse cx="456.8" cy="15.0" rx="3.3" ry="2.6" fill="#7aa852" opacity="0.85"/><ellipse cx="547.8" cy="14.6" rx="4.6" ry="3.7" fill="#283e20" opacity="0.85"/><ellipse cx="192.1" cy="5.9" rx="3.5" ry="2.8" fill="#6e9a48" opacity="0.85"/><ellipse cx="1063.0" cy="21.6" rx="5.1" ry="4.1" fill="#88b060" opacity="0.85"/><ellipse cx="679.5" cy="7.0" rx="4.3" ry="3.5" fill="#5a8a3a" opacity="0.85"/><ellipse cx="265.6" cy="-0.1" rx="3.2" ry="2.5" fill="#6e9a48" opacity="0.85"/><ellipse cx="741.2" cy="20.2" rx="2.7" ry="2.2" fill="#7aa852" opacity="0.85"/><ellipse cx="441.9" cy="2.0" rx="5.6" ry="4.5" fill="#b8d090" opacity="0.85"/><ellipse cx="211.6" cy="21.2" rx="4.4" ry="3.5" fill="#6e9a48" opacity="0.85"/><ellipse cx="857.3" cy="21.2" rx="5.2" ry="4.1" fill="#3a5a28" opacity="0.85"/><ellipse cx="249.6" cy="16.0" rx="4.1" ry="3.3" fill="#7aa852" opacity="0.85"/><ellipse cx="860.9" cy="1.0" rx="2.5" ry="2.0" fill="#4a7236" opacity="0.85"/><ellipse cx="297.1" cy="1.6" rx="4.0" ry="3.2" fill="#5a8a3a" opacity="0.85"/><ellipse cx="619.8" cy="21.5" rx="4.8" ry="3.8" fill="#a4c878" opacity="0.85"/><ellipse cx="637.6" cy="12.0" rx="5.5" ry="4.4" fill="#5a8a3a" opacity="0.85"/><ellipse cx="201.9" cy="6.3" rx="4.8" ry="3.8" fill="#7aa852" opacity="0.85"/><ellipse cx="853.2" cy="19.9" rx="3.5" ry="2.8" fill="#4a7236" opacity="0.85"/><ellipse cx="1284.9" cy="15.6" rx="2.7" ry="2.2" fill="#283e20" opacity="0.85"/><ellipse cx="815.6" cy="-1.3" rx="4.4" ry="3.6" fill="#283e20" opacity="0.85"/><ellipse cx="1038.1" cy="0.4" rx="3.9" ry="3.1" fill="#88b060" opacity="0.85"/><ellipse cx="38.7" cy="16.7" rx="4.5" ry="3.6" fill="#283e20" opacity="0.85"/><ellipse cx="116.9" cy="15.1" rx="3.4" ry="2.7" fill="#b8d090" opacity="0.85"/><ellipse cx="709.8" cy="21.7" rx="3.1" ry="2.5" fill="#283e20" opacity="0.85"/><ellipse cx="539.9" cy="12.4" rx="5.3" ry="4.2" fill="#3a5a28" opacity="0.85"/><ellipse cx="453.2" cy="10.8" rx="3.3" ry="2.7" fill="#3a5a28" opacity="0.85"/><ellipse cx="1121.1" cy="7.0" rx="2.8" ry="2.3" fill="#7aa852" opacity="0.85"/><ellipse cx="1016.6" cy="6.6" rx="3.3" ry="2.6" fill="#3a5a28" opacity="0.85"/><ellipse cx="159.6" cy="23.3" rx="2.4" ry="1.9" fill="#5a8a3a" opacity="0.85"/><ellipse cx="509.6" cy="12.4" rx="3.6" ry="2.9" fill="#5a8a3a" opacity="0.85"/><ellipse cx="509.0" cy="0.8" rx="2.2" ry="1.7" fill="#7aa852" opacity="0.85"/><ellipse cx="780.2" cy="15.1" rx="5.2" ry="4.1" fill="#b8d090" opacity="0.85"/><ellipse cx="784.1" cy="14.0" rx="4.5" ry="3.6" fill="#6e9a48" opacity="0.85"/><ellipse cx="269.1" cy="15.3" rx="3.8" ry="3.1" fill="#88b060" opacity="0.85"/><ellipse cx="125.8" cy="2.7" rx="2.1" ry="1.7" fill="#6e9a48" opacity="0.85"/><ellipse cx="1174.2" cy="15.0" rx="3.5" ry="2.8" fill="#88b060" opacity="0.85"/><ellipse cx="1009.6" cy="12.6" rx="3.0" ry="2.4" fill="#3a5a28" opacity="0.85"/><ellipse cx="233.4" cy="-1.1" rx="2.1" ry="1.7" fill="#5a8a3a" opacity="0.85"/><ellipse cx="637.1" cy="11.6" rx="5.3" ry="4.2" fill="#4a7236" opacity="0.85"/><ellipse cx="737.2" cy="21.9" rx="3.8" ry="3.0" fill="#5a8a3a" opacity="0.85"/><ellipse cx="872.2" cy="13.4" rx="6.0" ry="4.8" fill="#88b060" opacity="0.85"/><ellipse cx="608.3" cy="8.7" rx="2.4" ry="1.9" fill="#7aa852" opacity="0.85"/><ellipse cx="268.8" cy="1.9" rx="2.1" ry="1.6" fill="#5a8a3a" opacity="0.85"/><ellipse cx="7.0" cy="15.4" rx="5.9" ry="4.8" fill="#6e9a48" opacity="0.85"/><ellipse cx="276.5" cy="1.2" rx="3.9" ry="3.1" fill="#3a5a28" opacity="0.85"/><ellipse cx="923.0" cy="4.3" rx="4.9" ry="3.9" fill="#88b060" opacity="0.85"/><ellipse cx="1185.4" cy="7.5" rx="5.0" ry="4.0" fill="#88b060" opacity="0.85"/><ellipse cx="936.3" cy="0.2" rx="4.5" ry="3.6" fill="#7aa852" opacity="0.85"/><ellipse cx="589.1" cy="22.2" rx="3.0" ry="2.4" fill="#5a8a3a" opacity="0.85"/><ellipse cx="920.2" cy="-1.7" rx="2.1" ry="1.6" fill="#6e9a48" opacity="0.85"/><ellipse cx="496.7" cy="6.1" rx="4.4" ry="3.5" fill="#7aa852" opacity="0.85"/><ellipse cx="780.5" cy="6.2" rx="5.8" ry="4.6" fill="#7aa852" opacity="0.85"/><ellipse cx="601.0" cy="2.3" rx="5.9" ry="4.7" fill="#6e9a48" opacity="0.85"/><ellipse cx="463.6" cy="14.8" rx="4.5" ry="3.6" fill="#4a7236" opacity="0.85"/><ellipse cx="610.3" cy="18.2" rx="3.8" ry="3.0" fill="#3a5a28" opacity="0.85"/><ellipse cx="1007.2" cy="12.7" rx="3.2" ry="2.5" fill="#5a8a3a" opacity="0.85"/><ellipse cx="797.2" cy="14.9" rx="5.2" ry="4.2" fill="#283e20" opacity="0.85"/><ellipse cx="1116.7" cy="16.9" rx="2.1" ry="1.6" fill="#88b060" opacity="0.85"/><ellipse cx="770.5" cy="6.0" rx="3.7" ry="3.0" fill="#a4c878" opacity="0.85"/><ellipse cx="480.9" cy="15.8" rx="4.4" ry="3.5" fill="#a4c878" opacity="0.85"/><ellipse cx="1036.7" cy="5.4" rx="2.0" ry="1.6" fill="#3a5a28" opacity="0.85"/><ellipse cx="340.7" cy="2.1" rx="5.7" ry="4.5" fill="#5a8a3a" opacity="0.85"/><ellipse cx="367.2" cy="1.7" rx="5.6" ry="4.4" fill="#88b060" opacity="0.85"/><ellipse cx="348.3" cy="20.1" rx="5.2" ry="4.2" fill="#7aa852" opacity="0.85"/><ellipse cx="442.4" cy="0.2" rx="4.2" ry="3.4" fill="#4a7236" opacity="0.85"/><ellipse cx="253.6" cy="17.5" rx="5.7" ry="4.6" fill="#a4c878" opacity="0.85"/><ellipse cx="394.2" cy="-0.5" rx="3.6" ry="2.9" fill="#a4c878" opacity="0.85"/><ellipse cx="1189.5" cy="13.2" rx="2.0" ry="1.6" fill="#4a7236" opacity="0.85"/><ellipse cx="588.0" cy="0.3" rx="5.2" ry="4.2" fill="#6e9a48" opacity="0.85"/><ellipse cx="295.4" cy="13.1" rx="5.6" ry="4.5" fill="#b8d090" opacity="0.85"/><ellipse cx="409.1" cy="11.2" rx="2.8" ry="2.2" fill="#a4c878" opacity="0.85"/><ellipse cx="243.1" cy="2.7" rx="4.8" ry="3.8" fill="#283e20" opacity="0.85"/><ellipse cx="740.4" cy="7.3" rx="5.1" ry="4.1" fill="#88b060" opacity="0.85"/><ellipse cx="312.7" cy="22.0" rx="4.0" ry="3.2" fill="#6e9a48" opacity="0.85"/><ellipse cx="474.5" cy="10.0" rx="2.3" ry="1.9" fill="#283e20" opacity="0.85"/><ellipse cx="765.4" cy="7.0" rx="4.1" ry="3.3" fill="#5a8a3a" opacity="0.85"/><ellipse cx="116.4" cy="3.3" rx="5.5" ry="4.4" fill="#7aa852" opacity="0.85"/><ellipse cx="751.9" cy="3.6" rx="5.7" ry="4.6" fill="#3a5a28" opacity="0.85"/><ellipse cx="544.5" cy="22.6" rx="5.1" ry="4.1" fill="#88b060" opacity="0.85"/><ellipse cx="322.7" cy="-1.0" rx="2.8" ry="2.2" fill="#88b060" opacity="0.85"/><ellipse cx="482.9" cy="-1.3" rx="2.1" ry="1.7" fill="#283e20" opacity="0.85"/><ellipse cx="1118.2" cy="9.9" rx="5.8" ry="4.6" fill="#6e9a48" opacity="0.85"/><ellipse cx="1108.2" cy="14.6" rx="5.7" ry="4.6" fill="#6e9a48" opacity="0.85"/><ellipse cx="326.8" cy="12.7" rx="4.6" ry="3.7" fill="#b8d090" opacity="0.85"/><ellipse cx="502.1" cy="9.7" rx="2.6" ry="2.1" fill="#a4c878" opacity="0.85"/><ellipse cx="1274.3" cy="3.8" rx="2.2" ry="1.7" fill="#3a5a28" opacity="0.85"/><ellipse cx="1209.1" cy="-0.5" rx="4.2" ry="3.4" fill="#5a8a3a" opacity="0.85"/><ellipse cx="1075.0" cy="-0.8" rx="5.1" ry="4.1" fill="#7aa852" opacity="0.85"/><ellipse cx="66.9" cy="1.8" rx="5.0" ry="4.0" fill="#a4c878" opacity="0.85"/><ellipse cx="868.2" cy="5.8" rx="4.4" ry="3.5" fill="#6e9a48" opacity="0.85"/><ellipse cx="602.2" cy="7.7" rx="3.6" ry="2.8" fill="#283e20" opacity="0.85"/><ellipse cx="615.9" cy="2.4" rx="3.0" ry="2.4" fill="#88b060" opacity="0.85"/><ellipse cx="1174.4" cy="21.2" rx="3.9" ry="3.1" fill="#a4c878" opacity="0.85"/><ellipse cx="1025.5" cy="2.1" rx="5.3" ry="4.3" fill="#6e9a48" opacity="0.85"/><ellipse cx="1199.8" cy="20.5" rx="5.6" ry="4.4" fill="#88b060" opacity="0.85"/><ellipse cx="999.0" cy="22.9" rx="5.7" ry="4.6" fill="#4a7236" opacity="0.85"/><ellipse cx="1081.5" cy="14.3" rx="3.8" ry="3.0" fill="#283e20" opacity="0.85"/><ellipse cx="411.1" cy="4.1" rx="2.5" ry="2.0" fill="#283e20" opacity="0.85"/><ellipse cx="179.2" cy="3.8" rx="2.2" ry="1.8" fill="#7aa852" opacity="0.85"/><ellipse cx="708.9" cy="1.8" rx="5.5" ry="4.4" fill="#3a5a28" opacity="0.85"/><ellipse cx="534.6" cy="4.4" rx="2.1" ry="1.7" fill="#3a5a28" opacity="0.85"/><ellipse cx="426.5" cy="2.4" rx="4.0" ry="3.2" fill="#283e20" opacity="0.85"/><ellipse cx="583.5" cy="10.5" rx="2.6" ry="2.1" fill="#b8d090" opacity="0.85"/><ellipse cx="68.3" cy="21.3" rx="4.7" ry="3.7" fill="#a4c878" opacity="0.85"/><ellipse cx="717.3" cy="19.7" rx="2.5" ry="2.0" fill="#a4c878" opacity="0.85"/><ellipse cx="1247.2" cy="9.2" rx="3.0" ry="2.4" fill="#a4c878" opacity="0.85"/><ellipse cx="1188.4" cy="0.5" rx="3.2" ry="2.5" fill="#88b060" opacity="0.85"/><ellipse cx="69.2" cy="16.9" rx="3.2" ry="2.5" fill="#5a8a3a" opacity="0.85"/><ellipse cx="565.3" cy="11.2" rx="4.0" ry="3.2" fill="#7aa852" opacity="0.85"/><ellipse cx="-2.5" cy="19.6" rx="4.1" ry="3.3" fill="#88b060" opacity="0.85"/><ellipse cx="459.5" cy="-0.9" rx="3.6" ry="2.9" fill="#3a5a28" opacity="0.85"/><ellipse cx="732.0" cy="1.6" rx="2.7" ry="2.2" fill="#a4c878" opacity="0.85"/><ellipse cx="913.0" cy="3.1" rx="2.3" ry="1.9" fill="#6e9a48" opacity="0.85"/><ellipse cx="1142.2" cy="17.0" rx="5.0" ry="4.0" fill="#88b060" opacity="0.85"/><ellipse cx="260.8" cy="13.9" rx="4.8" ry="3.9" fill="#a4c878" opacity="0.85"/><ellipse cx="747.0" cy="3.3" rx="2.3" ry="1.8" fill="#b8d090" opacity="0.85"/><ellipse cx="521.5" cy="16.8" rx="2.2" ry="1.8" fill="#283e20" opacity="0.85"/><ellipse cx="427.4" cy="19.9" rx="5.5" ry="4.4" fill="#7aa852" opacity="0.85"/><ellipse cx="111.5" cy="8.6" rx="5.1" ry="4.0" fill="#88b060" opacity="0.85"/><ellipse cx="1119.9" cy="4.9" rx="2.7" ry="2.2" fill="#283e20" opacity="0.85"/><ellipse cx="42.3" cy="16.3" rx="4.3" ry="3.4" fill="#5a8a3a" opacity="0.85"/><ellipse cx="454.4" cy="22.2" rx="5.9" ry="4.7" fill="#6e9a48" opacity="0.85"/><ellipse cx="150.8" cy="16.6" rx="5.3" ry="4.2" fill="#283e20" opacity="0.85"/><ellipse cx="1000.1" cy="20.6" rx="4.3" ry="3.4" fill="#5a8a3a" opacity="0.85"/><ellipse cx="371.1" cy="0.8" rx="4.9" ry="3.9" fill="#7aa852" opacity="0.85"/><ellipse cx="657.2" cy="11.8" rx="4.1" ry="3.3" fill="#5a8a3a" opacity="0.85"/><ellipse cx="309.2" cy="0.3" rx="4.5" ry="3.6" fill="#88b060" opacity="0.85"/><ellipse cx="127.5" cy="4.5" rx="5.3" ry="4.2" fill="#5a8a3a" opacity="0.85"/><ellipse cx="20.1" cy="22.1" rx="5.0" ry="4.0" fill="#3a5a28" opacity="0.85"/><ellipse cx="17.8" cy="13.6" rx="4.3" ry="3.4" fill="#b8d090" opacity="0.85"/><ellipse cx="302.5" cy="9.5" rx="3.4" ry="2.7" fill="#6e9a48" opacity="0.85"/><ellipse cx="920.1" cy="-0.8" rx="2.5" ry="2.0" fill="#7aa852" opacity="0.85"/><ellipse cx="750.8" cy="17.8" rx="2.4" ry="2.0" fill="#6e9a48" opacity="0.85"/><ellipse cx="518.3" cy="1.6" rx="4.4" ry="3.5" fill="#a4c878" opacity="0.85"/><ellipse cx="184.9" cy="12.9" rx="5.0" ry="4.0" fill="#88b060" opacity="0.85"/><ellipse cx="1218.2" cy="-1.5" rx="4.5" ry="3.6" fill="#4a7236" opacity="0.85"/><ellipse cx="765.2" cy="13.7" rx="2.1" ry="1.7" fill="#5a8a3a" opacity="0.85"/><ellipse cx="997.2" cy="6.8" rx="3.0" ry="2.4" fill="#283e20" opacity="0.85"/><ellipse cx="918.0" cy="19.9" rx="4.3" ry="3.4" fill="#283e20" opacity="0.85"/><ellipse cx="1046.4" cy="20.0" rx="2.2" ry="1.8" fill="#b8d090" opacity="0.85"/><ellipse cx="184.2" cy="15.7" rx="3.4" ry="2.7" fill="#4a7236" opacity="0.85"/><ellipse cx="850.4" cy="-1.7" rx="2.4" ry="1.9" fill="#88b060" opacity="0.85"/><ellipse cx="84.4" cy="9.3" rx="4.0" ry="3.2" fill="#5a8a3a" opacity="0.85"/><ellipse cx="285.9" cy="8.9" rx="3.6" ry="2.9" fill="#7aa852" opacity="0.85"/><ellipse cx="811.8" cy="19.0" rx="5.5" ry="4.4" fill="#5a8a3a" opacity="0.85"/><ellipse cx="39.3" cy="14.7" rx="3.1" ry="2.5" fill="#3a5a28" opacity="0.85"/><ellipse cx="805.4" cy="19.0" rx="2.1" ry="1.7" fill="#6e9a48" opacity="0.85"/><ellipse cx="318.2" cy="11.5" rx="3.7" ry="3.0" fill="#5a8a3a" opacity="0.85"/><ellipse cx="365.9" cy="5.9" rx="4.6" ry="3.7" fill="#6e9a48" opacity="0.85"/><ellipse cx="72.8" cy="22.9" rx="5.7" ry="4.5" fill="#3a5a28" opacity="0.85"/><ellipse cx="104.0" cy="13.3" rx="5.7" ry="4.6" fill="#7aa852" opacity="0.85"/><ellipse cx="154.9" cy="1.4" rx="3.2" ry="2.5" fill="#4a7236" opacity="0.85"/><ellipse cx="739.8" cy="5.1" rx="4.9" ry="4.0" fill="#b8d090" opacity="0.85"/><ellipse cx="365.4" cy="9.8" rx="4.8" ry="3.8" fill="#a4c878" opacity="0.85"/><ellipse cx="834.0" cy="3.2" rx="4.8" ry="3.9" fill="#7aa852" opacity="0.85"/><ellipse cx="1145.4" cy="5.9" rx="3.9" ry="3.1" fill="#3a5a28" opacity="0.85"/><ellipse cx="34.9" cy="6.7" rx="2.8" ry="2.2" fill="#b8d090" opacity="0.85"/><ellipse cx="489.3" cy="13.2" rx="2.0" ry="1.6" fill="#283e20" opacity="0.85"/><ellipse cx="204.4" cy="22.8" rx="3.3" ry="2.6" fill="#283e20" opacity="0.85"/><ellipse cx="628.9" cy="5.4" rx="6.0" ry="4.8" fill="#3a5a28" opacity="0.85"/><ellipse cx="68.4" cy="-1.4" rx="4.2" ry="3.4" fill="#283e20" opacity="0.85"/><ellipse cx="562.6" cy="-0.4" rx="3.6" ry="2.8" fill="#7aa852" opacity="0.85"/><ellipse cx="451.8" cy="17.8" rx="4.1" ry="3.3" fill="#88b060" opacity="0.85"/><ellipse cx="532.6" cy="15.4" rx="2.6" ry="2.0" fill="#a4c878" opacity="0.85"/><ellipse cx="790.0" cy="20.1" rx="5.3" ry="4.2" fill="#b8d090" opacity="0.85"/><ellipse cx="117.6" cy="20.3" rx="5.7" ry="4.6" fill="#7aa852" opacity="0.85"/><ellipse cx="341.6" cy="14.4" rx="4.5" ry="3.6" fill="#88b060" opacity="0.85"/><ellipse cx="527.8" cy="0.7" rx="3.6" ry="2.9" fill="#b8d090" opacity="0.85"/><ellipse cx="750.7" cy="10.9" rx="5.9" ry="4.7" fill="#88b060" opacity="0.85"/><ellipse cx="534.1" cy="18.4" rx="5.5" ry="4.4" fill="#6e9a48" opacity="0.85"/><ellipse cx="484.6" cy="9.8" rx="3.8" ry="3.1" fill="#283e20" opacity="0.85"/><ellipse cx="372.9" cy="8.2" rx="4.2" ry="3.4" fill="#4a7236" opacity="0.85"/><ellipse cx="831.2" cy="-1.8" rx="5.0" ry="4.0" fill="#7aa852" opacity="0.85"/><ellipse cx="486.1" cy="5.8" rx="4.1" ry="3.3" fill="#88b060" opacity="0.85"/><ellipse cx="557.0" cy="7.8" rx="2.9" ry="2.3" fill="#283e20" opacity="0.85"/><ellipse cx="412.8" cy="19.9" rx="5.4" ry="4.3" fill="#283e20" opacity="0.85"/><ellipse cx="258.6" cy="9.1" rx="5.6" ry="4.5" fill="#5a8a3a" opacity="0.85"/><ellipse cx="28.0" cy="4.7" rx="5.6" ry="4.5" fill="#3a5a28" opacity="0.85"/><ellipse cx="1182.2" cy="18.1" rx="4.2" ry="3.3" fill="#4a7236" opacity="0.85"/><ellipse cx="662.5" cy="11.4" rx="4.7" ry="3.8" fill="#4a7236" opacity="0.85"/><ellipse cx="593.9" cy="-0.9" rx="4.7" ry="3.8" fill="#7aa852" opacity="0.85"/><ellipse cx="1217.8" cy="15.6" rx="4.1" ry="3.3" fill="#6e9a48" opacity="0.85"/><ellipse cx="523.3" cy="11.0" rx="4.6" ry="3.7" fill="#88b060" opacity="0.85"/><ellipse cx="1130.0" cy="23.1" rx="3.9" ry="3.2" fill="#7aa852" opacity="0.85"/><ellipse cx="984.9" cy="21.4" rx="4.3" ry="3.5" fill="#b8d090" opacity="0.85"/><ellipse cx="957.9" cy="0.4" rx="3.5" ry="2.8" fill="#283e20" opacity="0.85"/><ellipse cx="1257.2" cy="19.5" rx="4.1" ry="3.2" fill="#6e9a48" opacity="0.85"/><ellipse cx="841.1" cy="5.7" rx="3.4" ry="2.7" fill="#b8d090" opacity="0.85"/><ellipse cx="1140.7" cy="8.9" rx="2.6" ry="2.1" fill="#3a5a28" opacity="0.85"/><ellipse cx="1047.8" cy="3.4" rx="5.6" ry="4.5" fill="#4a7236" opacity="0.85"/><ellipse cx="230.3" cy="14.4" rx="4.4" ry="3.5" fill="#283e20" opacity="0.85"/><ellipse cx="730.1" cy="14.4" rx="4.9" ry="3.9" fill="#4a7236" opacity="0.85"/><ellipse cx="8.8" cy="-1.9" rx="4.8" ry="3.9" fill="#b8d090" opacity="0.85"/><ellipse cx="0.0" cy="5.9" rx="5.4" ry="4.3" fill="#5a8a3a" opacity="0.85"/><ellipse cx="856.9" cy="3.1" rx="4.0" ry="3.2" fill="#b8d090" opacity="0.85"/><ellipse cx="726.5" cy="20.6" rx="5.6" ry="4.5" fill="#b8d090" opacity="0.85"/><ellipse cx="1281.3" cy="12.9" rx="3.6" ry="2.9" fill="#6e9a48" opacity="0.85"/><ellipse cx="182.5" cy="11.5" rx="4.0" ry="3.2" fill="#5a8a3a" opacity="0.85"/><ellipse cx="124.1" cy="2.4" rx="4.1" ry="3.3" fill="#7aa852" opacity="0.85"/><ellipse cx="785.8" cy="19.0" rx="2.2" ry="1.8" fill="#5a8a3a" opacity="0.85"/><ellipse cx="878.1" cy="13.0" rx="2.6" ry="2.1" fill="#a4c878" opacity="0.85"/><ellipse cx="451.5" cy="2.4" rx="3.1" ry="2.5" fill="#6e9a48" opacity="0.85"/><ellipse cx="1103.5" cy="22.6" rx="2.3" ry="1.8" fill="#a4c878" opacity="0.85"/><ellipse cx="575.3" cy="8.0" rx="2.2" ry="1.8" fill="#4a7236" opacity="0.85"/><ellipse cx="746.6" cy="22.9" rx="3.8" ry="3.0" fill="#a4c878" opacity="0.85"/><ellipse cx="316.6" cy="-0.9" rx="5.7" ry="4.6" fill="#88b060" opacity="0.85"/><ellipse cx="401.1" cy="21.4" rx="5.3" ry="4.2" fill="#3a5a28" opacity="0.85"/><ellipse cx="534.7" cy="4.6" rx="5.5" ry="4.4" fill="#6e9a48" opacity="0.85"/><ellipse cx="308.4" cy="8.1" rx="4.9" ry="3.9" fill="#a4c878" opacity="0.85"/><ellipse cx="528.4" cy="8.4" rx="4.8" ry="3.9" fill="#5a8a3a" opacity="0.85"/><ellipse cx="1017.7" cy="4.3" rx="2.7" ry="2.2" fill="#283e20" opacity="0.85"/><ellipse cx="483.9" cy="-1.8" rx="5.5" ry="4.4" fill="#4a7236" opacity="0.85"/><ellipse cx="719.4" cy="1.0" rx="4.1" ry="3.3" fill="#4a7236" opacity="0.85"/><ellipse cx="428.3" cy="14.9" rx="5.8" ry="4.7" fill="#4a7236" opacity="0.85"/><ellipse cx="1060.3" cy="7.1" rx="3.0" ry="2.4" fill="#a4c878" opacity="0.85"/><ellipse cx="597.4" cy="7.0" rx="3.7" ry="3.0" fill="#3a5a28" opacity="0.85"/><ellipse cx="851.9" cy="6.9" rx="2.6" ry="2.1" fill="#88b060" opacity="0.85"/><ellipse cx="114.5" cy="5.0" rx="5.3" ry="4.3" fill="#88b060" opacity="0.85"/><ellipse cx="710.9" cy="10.1" rx="5.2" ry="4.1" fill="#a4c878" opacity="0.85"/><ellipse cx="200.4" cy="7.2" rx="4.9" ry="3.9" fill="#4a7236" opacity="0.85"/><ellipse cx="806.9" cy="13.1" rx="3.2" ry="2.6" fill="#7aa852" opacity="0.85"/><ellipse cx="646.2" cy="3.9" rx="3.8" ry="3.0" fill="#88b060" opacity="0.85"/><ellipse cx="1210.3" cy="23.9" rx="4.4" ry="3.5" fill="#7aa852" opacity="0.85"/><ellipse cx="753.0" cy="7.6" rx="3.0" ry="2.4" fill="#b8d090" opacity="0.85"/><ellipse cx="269.2" cy="20.7" rx="2.5" ry="2.0" fill="#b8d090" opacity="0.85"/><ellipse cx="113.0" cy="20.1" rx="4.9" ry="4.0" fill="#4a7236" opacity="0.85"/><ellipse cx="32.0" cy="16.7" rx="2.6" ry="2.1" fill="#5a8a3a" opacity="0.85"/><ellipse cx="498.0" cy="0.2" rx="2.7" ry="2.2" fill="#a4c878" opacity="0.85"/><ellipse cx="409.1" cy="15.2" rx="2.4" ry="1.9" fill="#b8d090" opacity="0.85"/><ellipse cx="1173.9" cy="18.9" rx="5.0" ry="4.0" fill="#a4c878" opacity="0.85"/><ellipse cx="80.0" cy="6.1" rx="2.9" ry="2.3" fill="#88b060" opacity="0.85"/><ellipse cx="1048.7" cy="8.4" rx="3.4" ry="2.7" fill="#7aa852" opacity="0.85"/><ellipse cx="994.7" cy="21.0" rx="5.4" ry="4.4" fill="#88b060" opacity="0.85"/><ellipse cx="1203.4" cy="2.6" rx="3.5" ry="2.8" fill="#283e20" opacity="0.85"/><ellipse cx="1152.1" cy="-1.3" rx="4.8" ry="3.9" fill="#7aa852" opacity="0.85"/><ellipse cx="315.5" cy="20.0" rx="3.4" ry="2.7" fill="#6e9a48" opacity="0.85"/><ellipse cx="229.3" cy="1.0" rx="5.7" ry="4.5" fill="#a4c878" opacity="0.85"/><ellipse cx="914.2" cy="-0.9" rx="2.2" ry="1.7" fill="#88b060" opacity="0.85"/><ellipse cx="550.6" cy="17.7" rx="2.6" ry="2.1" fill="#5a8a3a" opacity="0.85"/><ellipse cx="707.5" cy="14.4" rx="5.8" ry="4.6" fill="#a4c878" opacity="0.85"/><ellipse cx="730.5" cy="16.6" rx="3.0" ry="2.4" fill="#4a7236" opacity="0.85"/><ellipse cx="859.5" cy="13.0" rx="5.7" ry="4.6" fill="#6e9a48" opacity="0.85"/><ellipse cx="1071.2" cy="18.2" rx="3.1" ry="2.5" fill="#5a8a3a" opacity="0.85"/><ellipse cx="1123.9" cy="13.2" rx="4.8" ry="3.8" fill="#a4c878" opacity="0.85"/><ellipse cx="873.6" cy="-1.0" rx="3.3" ry="2.6" fill="#283e20" opacity="0.85"/><ellipse cx="961.9" cy="0.2" rx="4.8" ry="3.8" fill="#4a7236" opacity="0.85"/><ellipse cx="1282.6" cy="14.0" rx="2.9" ry="2.3" fill="#b8d090" opacity="0.85"/><ellipse cx="111.0" cy="22.6" rx="3.7" ry="3.0" fill="#283e20" opacity="0.85"/><ellipse cx="887.2" cy="17.2" rx="5.3" ry="4.3" fill="#7aa852" opacity="0.85"/><ellipse cx="651.2" cy="15.6" rx="2.8" ry="2.3" fill="#b8d090" opacity="0.85"/><ellipse cx="1087.1" cy="18.2" rx="4.0" ry="3.2" fill="#a4c878" opacity="0.85"/><ellipse cx="51.4" cy="16.3" rx="5.2" ry="4.2" fill="#3a5a28" opacity="0.85"/><ellipse cx="220.1" cy="2.3" rx="5.1" ry="4.1" fill="#a4c878" opacity="0.85"/><ellipse cx="696.7" cy="4.5" rx="2.2" ry="1.8" fill="#283e20" opacity="0.85"/><ellipse cx="442.9" cy="0.4" rx="4.5" ry="3.6" fill="#88b060" opacity="0.85"/><ellipse cx="171.2" cy="16.4" rx="4.7" ry="3.7" fill="#a4c878" opacity="0.85"/><ellipse cx="905.3" cy="-1.8" rx="4.8" ry="3.8" fill="#88b060" opacity="0.85"/><ellipse cx="1202.2" cy="7.1" rx="3.2" ry="2.6" fill="#88b060" opacity="0.85"/><ellipse cx="752.9" cy="4.3" rx="4.5" ry="3.6" fill="#6e9a48" opacity="0.85"/><ellipse cx="702.3" cy="17.8" rx="2.7" ry="2.1" fill="#88b060" opacity="0.85"/><ellipse cx="767.3" cy="10.0" rx="5.1" ry="4.1" fill="#a4c878" opacity="0.85"/><ellipse cx="142.7" cy="5.5" rx="3.4" ry="2.8" fill="#a4c878" opacity="0.85"/><ellipse cx="51.0" cy="21.3" rx="3.2" ry="2.6" fill="#6e9a48" opacity="0.85"/><ellipse cx="900.1" cy="9.6" rx="2.5" ry="2.0" fill="#283e20" opacity="0.85"/><ellipse cx="569.1" cy="12.8" rx="3.2" ry="2.5" fill="#b8d090" opacity="0.85"/><ellipse cx="87.6" cy="-1.7" rx="6.0" ry="4.8" fill="#7aa852" opacity="0.85"/><ellipse cx="103.3" cy="16.6" rx="5.9" ry="4.7" fill="#3a5a28" opacity="0.85"/><ellipse cx="135.4" cy="10.7" rx="3.7" ry="3.0" fill="#a4c878" opacity="0.85"/><ellipse cx="1006.2" cy="6.4" rx="3.4" ry="2.7" fill="#6e9a48" opacity="0.85"/><ellipse cx="826.4" cy="14.3" rx="5.7" ry="4.6" fill="#3a5a28" opacity="0.85"/><ellipse cx="837.5" cy="0.0" rx="5.0" ry="4.0" fill="#5a8a3a" opacity="0.85"/><ellipse cx="994.0" cy="19.8" rx="3.2" ry="2.5" fill="#88b060" opacity="0.85"/><ellipse cx="1236.0" cy="11.7" rx="5.6" ry="4.5" fill="#88b060" opacity="0.85"/><ellipse cx="126.8" cy="16.7" rx="3.2" ry="2.6" fill="#283e20" opacity="0.85"/><ellipse cx="484.4" cy="14.8" rx="3.4" ry="2.7" fill="#a4c878" opacity="0.85"/><ellipse cx="470.4" cy="12.3" rx="3.5" ry="2.8" fill="#3a5a28" opacity="0.85"/><ellipse cx="303.8" cy="-0.9" rx="4.3" ry="3.4" fill="#4a7236" opacity="0.85"/><ellipse cx="1162.7" cy="22.6" rx="4.0" ry="3.2" fill="#7aa852" opacity="0.85"/><ellipse cx="937.7" cy="23.9" rx="4.4" ry="3.5" fill="#6e9a48" opacity="0.85"/><ellipse cx="178.0" cy="3.9" rx="2.6" ry="2.0" fill="#4a7236" opacity="0.85"/><ellipse cx="110.7" cy="-1.0" rx="3.8" ry="3.0" fill="#a4c878" opacity="0.85"/><ellipse cx="276.6" cy="7.7" rx="2.1" ry="1.7" fill="#b8d090" opacity="0.85"/><ellipse cx="543.8" cy="5.4" rx="4.6" ry="3.7" fill="#b8d090" opacity="0.85"/><ellipse cx="911.9" cy="21.2" rx="2.3" ry="1.8" fill="#5a8a3a" opacity="0.85"/><ellipse cx="854.3" cy="19.5" rx="5.6" ry="4.5" fill="#88b060" opacity="0.85"/><ellipse cx="483.7" cy="-1.9" rx="5.2" ry="4.2" fill="#283e20" opacity="0.85"/><ellipse cx="727.1" cy="10.2" rx="4.2" ry="3.3" fill="#b8d090" opacity="0.85"/><ellipse cx="589.0" cy="23.3" rx="5.6" ry="4.5" fill="#88b060" opacity="0.85"/><ellipse cx="1251.9" cy="23.0" rx="4.5" ry="3.6" fill="#5a8a3a" opacity="0.85"/><ellipse cx="927.4" cy="6.6" rx="4.6" ry="3.7" fill="#4a7236" opacity="0.85"/><ellipse cx="1224.1" cy="10.5" rx="4.6" ry="3.7" fill="#3a5a28" opacity="0.85"/><ellipse cx="1111.2" cy="11.8" rx="4.5" ry="3.6" fill="#a4c878" opacity="0.85"/><ellipse cx="282.0" cy="17.2" rx="4.8" ry="3.8" fill="#88b060" opacity="0.85"/><ellipse cx="847.0" cy="7.7" rx="4.3" ry="3.5" fill="#4a7236" opacity="0.85"/><ellipse cx="459.4" cy="4.2" rx="3.8" ry="3.0" fill="#3a5a28" opacity="0.85"/><ellipse cx="142.4" cy="2.7" rx="5.6" ry="4.4" fill="#b8d090" opacity="0.85"/><ellipse cx="962.3" cy="3.8" rx="5.3" ry="4.3" fill="#6e9a48" opacity="0.85"/><ellipse cx="236.9" cy="15.4" rx="4.8" ry="3.9" fill="#a4c878" opacity="0.85"/><ellipse cx="709.7" cy="3.9" rx="4.3" ry="3.4" fill="#6e9a48" opacity="0.85"/><ellipse cx="943.9" cy="21.6" rx="4.3" ry="3.4" fill="#4a7236" opacity="0.85"/><ellipse cx="871.5" cy="18.8" rx="2.5" ry="2.0" fill="#b8d090" opacity="0.85"/><ellipse cx="705.2" cy="16.6" rx="5.0" ry="4.0" fill="#6e9a48" opacity="0.85"/><ellipse cx="803.3" cy="23.0" rx="4.1" ry="3.2" fill="#7aa852" opacity="0.85"/><ellipse cx="1066.0" cy="8.2" rx="2.7" ry="2.1" fill="#a4c878" opacity="0.85"/><ellipse cx="721.3" cy="18.1" rx="2.5" ry="2.0" fill="#5a8a3a" opacity="0.85"/><ellipse cx="516.6" cy="-0.8" rx="2.2" ry="1.7" fill="#a4c878" opacity="0.85"/><ellipse cx="588.0" cy="1.1" rx="2.5" ry="2.0" fill="#6e9a48" opacity="0.85"/><ellipse cx="796.3" cy="20.7" rx="4.3" ry="3.4" fill="#283e20" opacity="0.85"/><ellipse cx="211.7" cy="17.4" rx="3.4" ry="2.7" fill="#5a8a3a" opacity="0.85"/><ellipse cx="1060.1" cy="1.2" rx="3.5" ry="2.8" fill="#b8d090" opacity="0.85"/><ellipse cx="1218.0" cy="16.8" rx="2.2" ry="1.7" fill="#283e20" opacity="0.85"/><ellipse cx="123.5" cy="12.3" rx="5.2" ry="4.2" fill="#6e9a48" opacity="0.85"/><ellipse cx="39.0" cy="21.7" rx="3.0" ry="2.4" fill="#283e20" opacity="0.85"/><ellipse cx="244.2" cy="9.6" rx="5.4" ry="4.3" fill="#7aa852" opacity="0.85"/><ellipse cx="141.5" cy="-1.5" rx="2.4" ry="2.0" fill="#3a5a28" opacity="0.85"/><ellipse cx="234.0" cy="12.4" rx="3.2" ry="2.5" fill="#4a7236" opacity="0.85"/><ellipse cx="1073.7" cy="13.3" rx="3.0" ry="2.4" fill="#3a5a28" opacity="0.85"/><ellipse cx="1218.9" cy="-1.6" rx="3.4" ry="2.7" fill="#88b060" opacity="0.85"/><ellipse cx="623.4" cy="10.6" rx="2.1" ry="1.7" fill="#5a8a3a" opacity="0.85"/><ellipse cx="91.2" cy="14.1" rx="4.6" ry="3.7" fill="#4a7236" opacity="0.85"/><ellipse cx="1082.4" cy="23.2" rx="4.8" ry="3.8" fill="#7aa852" opacity="0.85"/><ellipse cx="502.5" cy="20.7" rx="4.4" ry="3.6" fill="#6e9a48" opacity="0.85"/><ellipse cx="460.6" cy="11.7" rx="3.2" ry="2.6" fill="#88b060" opacity="0.85"/><ellipse cx="755.1" cy="-0.9" rx="2.7" ry="2.1" fill="#283e20" opacity="0.85"/><ellipse cx="933.1" cy="6.6" rx="3.9" ry="3.1" fill="#283e20" opacity="0.85"/><ellipse cx="400.5" cy="6.7" rx="3.9" ry="3.1" fill="#a4c878" opacity="0.85"/><ellipse cx="21.5" cy="9.9" rx="5.9" ry="4.8" fill="#5a8a3a" opacity="0.85"/><ellipse cx="808.8" cy="16.9" rx="2.6" ry="2.1" fill="#4a7236" opacity="0.85"/><ellipse cx="347.6" cy="11.0" rx="3.0" ry="2.4" fill="#b8d090" opacity="0.85"/><ellipse cx="748.9" cy="1.6" rx="4.8" ry="3.8" fill="#b8d090" opacity="0.85"/><ellipse cx="1159.4" cy="0.5" rx="2.8" ry="2.2" fill="#4a7236" opacity="0.85"/><ellipse cx="811.7" cy="14.5" rx="3.5" ry="2.8" fill="#3a5a28" opacity="0.85"/><ellipse cx="1018.0" cy="4.2" rx="5.2" ry="4.1" fill="#88b060" opacity="0.85"/><ellipse cx="873.9" cy="5.9" rx="5.1" ry="4.0" fill="#283e20" opacity="0.85"/><ellipse cx="651.5" cy="14.5" rx="3.4" ry="2.7" fill="#b8d090" opacity="0.85"/><ellipse cx="918.2" cy="6.7" rx="4.8" ry="3.9" fill="#283e20" opacity="0.85"/><ellipse cx="1134.9" cy="18.3" rx="4.0" ry="3.2" fill="#a4c878" opacity="0.85"/><ellipse cx="1038.9" cy="23.9" rx="2.6" ry="2.1" fill="#a4c878" opacity="0.85"/><ellipse cx="4.3" cy="20.6" rx="3.8" ry="3.1" fill="#7aa852" opacity="0.85"/><ellipse cx="505.9" cy="18.1" rx="5.7" ry="4.6" fill="#6e9a48" opacity="0.85"/><ellipse cx="180.5" cy="16.7" rx="3.0" ry="2.4" fill="#b8d090" opacity="0.85"/><ellipse cx="844.9" cy="23.1" rx="2.3" ry="1.8" fill="#a4c878" opacity="0.85"/><ellipse cx="747.5" cy="0.1" rx="2.7" ry="2.2" fill="#283e20" opacity="0.85"/><ellipse cx="1268.8" cy="7.3" rx="5.1" ry="4.1" fill="#4a7236" opacity="0.85"/><ellipse cx="925.4" cy="22.0" rx="5.4" ry="4.3" fill="#283e20" opacity="0.85"/><ellipse cx="1154.8" cy="5.2" rx="3.0" ry="2.4" fill="#5a8a3a" opacity="0.85"/><ellipse cx="973.5" cy="14.3" rx="2.9" ry="2.4" fill="#5a8a3a" opacity="0.85"/><ellipse cx="276.6" cy="8.4" rx="2.8" ry="2.2" fill="#3a5a28" opacity="0.85"/><ellipse cx="1109.7" cy="14.9" rx="2.8" ry="2.2" fill="#5a8a3a" opacity="0.85"/><ellipse cx="1237.5" cy="13.6" rx="2.3" ry="1.9" fill="#283e20" opacity="0.85"/><ellipse cx="922.5" cy="-1.9" rx="3.1" ry="2.5" fill="#5a8a3a" opacity="0.85"/><ellipse cx="820.5" cy="22.0" rx="2.8" ry="2.3" fill="#283e20" opacity="0.85"/><ellipse cx="1114.4" cy="-1.3" rx="3.9" ry="3.2" fill="#283e20" opacity="0.85"/><ellipse cx="220.1" cy="20.4" rx="5.2" ry="4.1" fill="#6e9a48" opacity="0.85"/><ellipse cx="802.9" cy="6.7" rx="4.0" ry="3.2" fill="#4a7236" opacity="0.85"/><ellipse cx="326.6" cy="10.0" rx="2.1" ry="1.6" fill="#283e20" opacity="0.85"/><ellipse cx="722.7" cy="23.7" rx="2.2" ry="1.8" fill="#283e20" opacity="0.85"/><ellipse cx="197.1" cy="-1.5" rx="2.8" ry="2.3" fill="#b8d090" opacity="0.85"/><ellipse cx="984.7" cy="0.3" rx="5.3" ry="4.2" fill="#4a7236" opacity="0.85"/><ellipse cx="438.9" cy="15.7" rx="5.5" ry="4.4" fill="#88b060" opacity="0.85"/><ellipse cx="843.0" cy="13.6" rx="3.3" ry="2.7" fill="#3a5a28" opacity="0.85"/><ellipse cx="1044.4" cy="10.4" rx="2.1" ry="1.7" fill="#3a5a28" opacity="0.85"/><ellipse cx="835.6" cy="12.3" rx="4.8" ry="3.9" fill="#b8d090" opacity="0.85"/><ellipse cx="354.0" cy="11.6" rx="5.8" ry="4.6" fill="#88b060" opacity="0.85"/><ellipse cx="321.3" cy="12.5" rx="2.4" ry="1.9" fill="#283e20" opacity="0.85"/><ellipse cx="189.3" cy="14.4" rx="3.6" ry="2.9" fill="#6e9a48" opacity="0.85"/><ellipse cx="1203.7" cy="14.2" rx="2.5" ry="2.0" fill="#b8d090" opacity="0.85"/><ellipse cx="642.4" cy="12.4" rx="2.7" ry="2.2" fill="#283e20" opacity="0.85"/><ellipse cx="946.5" cy="21.5" rx="5.5" ry="4.4" fill="#88b060" opacity="0.85"/><ellipse cx="676.8" cy="7.1" rx="4.8" ry="3.9" fill="#7aa852" opacity="0.85"/><ellipse cx="1262.2" cy="11.0" rx="4.5" ry="3.6" fill="#283e20" opacity="0.85"/><ellipse cx="1157.3" cy="8.1" rx="2.8" ry="2.3" fill="#5a8a3a" opacity="0.85"/><ellipse cx="134.1" cy="17.1" rx="2.3" ry="1.8" fill="#4a7236" opacity="0.85"/><ellipse cx="864.7" cy="7.1" rx="2.9" ry="2.3" fill="#4a7236" opacity="0.85"/><ellipse cx="523.8" cy="21.9" rx="5.8" ry="4.6" fill="#a4c878" opacity="0.85"/><ellipse cx="34.6" cy="-1.5" rx="4.8" ry="3.9" fill="#a4c878" opacity="0.85"/><ellipse cx="293.5" cy="3.3" rx="5.0" ry="4.0" fill="#3a5a28" opacity="0.85"/><ellipse cx="380.0" cy="23.9" rx="2.9" ry="2.3" fill="#88b060" opacity="0.85"/><ellipse cx="610.8" cy="22.3" rx="5.1" ry="4.1" fill="#88b060" opacity="0.85"/><ellipse cx="1056.5" cy="5.3" rx="3.3" ry="2.7" fill="#7aa852" opacity="0.85"/><ellipse cx="1120.0" cy="4.5" rx="3.3" ry="2.6" fill="#7aa852" opacity="0.85"/><ellipse cx="268.6" cy="-0.6" rx="5.1" ry="4.1" fill="#283e20" opacity="0.85"/><ellipse cx="54.6" cy="18.1" rx="3.8" ry="3.0" fill="#4a7236" opacity="0.85"/><ellipse cx="1109.5" cy="23.9" rx="3.2" ry="2.6" fill="#5a8a3a" opacity="0.85"/><ellipse cx="1033.5" cy="2.0" rx="5.7" ry="4.5" fill="#88b060" opacity="0.85"/><ellipse cx="1171.0" cy="1.9" rx="4.9" ry="4.0" fill="#6e9a48" opacity="0.85"/><ellipse cx="964.2" cy="10.1" rx="3.6" ry="2.9" fill="#4a7236" opacity="0.85"/><ellipse cx="433.0" cy="21.9" rx="4.9" ry="3.9" fill="#283e20" opacity="0.85"/><ellipse cx="1258.7" cy="-1.1" rx="2.9" ry="2.4" fill="#5a8a3a" opacity="0.85"/><ellipse cx="43.9" cy="11.1" rx="2.9" ry="2.3" fill="#4a7236" opacity="0.85"/><ellipse cx="896.0" cy="16.9" rx="2.2" ry="1.8" fill="#283e20" opacity="0.85"/><ellipse cx="78.3" cy="0.9" rx="5.8" ry="4.7" fill="#88b060" opacity="0.85"/><ellipse cx="672.8" cy="-1.9" rx="2.9" ry="2.3" fill="#b8d090" opacity="0.85"/><ellipse cx="185.8" cy="17.2" rx="4.0" ry="3.2" fill="#6e9a48" opacity="0.85"/><ellipse cx="678.6" cy="19.8" rx="5.8" ry="4.7" fill="#6e9a48" opacity="0.85"/><ellipse cx="445.8" cy="3.6" rx="5.9" ry="4.7" fill="#a4c878" opacity="0.85"/><ellipse cx="938.5" cy="5.1" rx="2.7" ry="2.2" fill="#3a5a28" opacity="0.85"/><ellipse cx="342.0" cy="23.1" rx="2.8" ry="2.2" fill="#5a8a3a" opacity="0.85"/><ellipse cx="521.5" cy="12.5" rx="3.5" ry="2.8" fill="#5a8a3a" opacity="0.85"/><ellipse cx="415.2" cy="-0.9" rx="3.8" ry="3.1" fill="#3a5a28" opacity="0.85"/><ellipse cx="703.0" cy="15.9" rx="5.9" ry="4.7" fill="#3a5a28" opacity="0.85"/><ellipse cx="510.1" cy="6.3" rx="3.7" ry="2.9" fill="#88b060" opacity="0.85"/><ellipse cx="494.3" cy="8.0" rx="3.6" ry="2.9" fill="#88b060" opacity="0.85"/><ellipse cx="1153.5" cy="14.5" rx="3.0" ry="2.4" fill="#b8d090" opacity="0.85"/><ellipse cx="1189.9" cy="4.6" rx="4.4" ry="3.6" fill="#4a7236" opacity="0.85"/><ellipse cx="1273.4" cy="19.5" rx="4.7" ry="3.7" fill="#6e9a48" opacity="0.85"/><ellipse cx="1082.5" cy="18.4" rx="5.6" ry="4.5" fill="#5a8a3a" opacity="0.85"/><ellipse cx="518.5" cy="12.5" rx="4.7" ry="3.8" fill="#7aa852" opacity="0.85"/><ellipse cx="703.1" cy="6.2" rx="5.9" ry="4.7" fill="#5a8a3a" opacity="0.85"/><ellipse cx="605.8" cy="14.8" rx="3.9" ry="3.1" fill="#283e20" opacity="0.85"/><ellipse cx="759.1" cy="23.9" rx="2.9" ry="2.4" fill="#4a7236" opacity="0.85"/><ellipse cx="453.2" cy="-0.3" rx="5.9" ry="4.7" fill="#3a5a28" opacity="0.85"/><ellipse cx="785.5" cy="15.6" rx="3.3" ry="2.6" fill="#b8d090" opacity="0.85"/><ellipse cx="851.9" cy="22.0" rx="5.1" ry="4.0" fill="#3a5a28" opacity="0.85"/><ellipse cx="1167.3" cy="10.3" rx="4.9" ry="3.9" fill="#b8d090" opacity="0.85"/><ellipse cx="755.4" cy="12.8" rx="6.0" ry="4.8" fill="#6e9a48" opacity="0.85"/><ellipse cx="1191.3" cy="11.7" rx="4.1" ry="3.3" fill="#b8d090" opacity="0.85"/><ellipse cx="213.2" cy="7.5" rx="4.7" ry="3.8" fill="#88b060" opacity="0.85"/><ellipse cx="1055.2" cy="10.0" rx="4.6" ry="3.6" fill="#5a8a3a" opacity="0.85"/><ellipse cx="410.3" cy="7.4" rx="5.5" ry="4.4" fill="#4a7236" opacity="0.85"/><ellipse cx="153.7" cy="2.0" rx="3.0" ry="2.4" fill="#6e9a48" opacity="0.85"/><ellipse cx="465.6" cy="15.2" rx="4.1" ry="3.3" fill="#3a5a28" opacity="0.85"/><ellipse cx="579.1" cy="0.3" rx="3.6" ry="2.9" fill="#7aa852" opacity="0.85"/><ellipse cx="891.6" cy="9.7" rx="3.9" ry="3.1" fill="#88b060" opacity="0.85"/><ellipse cx="973.9" cy="1.9" rx="4.7" ry="3.8" fill="#283e20" opacity="0.85"/><ellipse cx="625.5" cy="15.2" rx="4.5" ry="3.6" fill="#b8d090" opacity="0.85"/><ellipse cx="433.7" cy="7.9" rx="2.1" ry="1.7" fill="#a4c878" opacity="0.85"/><ellipse cx="-4.0" cy="4.8" rx="4.4" ry="3.5" fill="#3a5a28" opacity="0.85"/><ellipse cx="921.5" cy="5.1" rx="3.3" ry="2.6" fill="#a4c878" opacity="0.85"/><ellipse cx="337.4" cy="9.4" rx="4.1" ry="3.3" fill="#7aa852" opacity="0.85"/><ellipse cx="1103.0" cy="3.2" rx="3.7" ry="3.0" fill="#3a5a28" opacity="0.85"/><ellipse cx="792.0" cy="7.7" rx="2.2" ry="1.7" fill="#7aa852" opacity="0.85"/><ellipse cx="479.7" cy="-0.9" rx="5.0" ry="4.0" fill="#4a7236" opacity="0.85"/><ellipse cx="550.9" cy="13.8" rx="3.0" ry="2.4" fill="#a4c878" opacity="0.85"/><ellipse cx="492.1" cy="13.0" rx="5.7" ry="4.6" fill="#a4c878" opacity="0.85"/><ellipse cx="1256.2" cy="20.1" rx="4.3" ry="3.5" fill="#6e9a48" opacity="0.85"/><ellipse cx="853.6" cy="6.6" rx="2.3" ry="1.8" fill="#7aa852" opacity="0.85"/><ellipse cx="484.4" cy="11.7" rx="4.0" ry="3.2" fill="#5a8a3a" opacity="0.85"/><ellipse cx="134.1" cy="12.7" rx="5.7" ry="4.6" fill="#4a7236" opacity="0.85"/><ellipse cx="530.2" cy="10.3" rx="5.6" ry="4.4" fill="#7aa852" opacity="0.85"/><ellipse cx="507.9" cy="1.5" rx="5.0" ry="4.0" fill="#5a8a3a" opacity="0.85"/><ellipse cx="859.8" cy="17.3" rx="3.6" ry="2.9" fill="#5a8a3a" opacity="0.85"/><ellipse cx="1189.3" cy="5.6" rx="3.3" ry="2.7" fill="#4a7236" opacity="0.85"/><ellipse cx="988.1" cy="1.1" rx="2.9" ry="2.3" fill="#6e9a48" opacity="0.85"/><ellipse cx="731.6" cy="-1.6" rx="4.0" ry="3.2" fill="#a4c878" opacity="0.85"/><ellipse cx="723.1" cy="-0.6" rx="4.7" ry="3.8" fill="#283e20" opacity="0.85"/><ellipse cx="617.8" cy="-0.6" rx="4.8" ry="3.8" fill="#4a7236" opacity="0.85"/><ellipse cx="1083.3" cy="1.6" rx="3.6" ry="2.9" fill="#5a8a3a" opacity="0.85"/><ellipse cx="1119.8" cy="1.8" rx="3.3" ry="2.7" fill="#b8d090" opacity="0.85"/><ellipse cx="1262.1" cy="2.8" rx="4.2" ry="3.3" fill="#b8d090" opacity="0.85"/><ellipse cx="333.4" cy="6.1" rx="3.0" ry="2.4" fill="#3a5a28" opacity="0.85"/><ellipse cx="711.8" cy="11.3" rx="3.7" ry="2.9" fill="#5a8a3a" opacity="0.85"/><ellipse cx="390.8" cy="4.5" rx="3.5" ry="2.8" fill="#4a7236" opacity="0.85"/><ellipse cx="1100.1" cy="4.7" rx="2.8" ry="2.2" fill="#5a8a3a" opacity="0.85"/><ellipse cx="262.7" cy="15.0" rx="5.7" ry="4.6" fill="#7aa852" opacity="0.85"/><ellipse cx="910.7" cy="1.7" rx="5.7" ry="4.6" fill="#283e20" opacity="0.85"/><ellipse cx="253.3" cy="21.9" rx="4.2" ry="3.4" fill="#5a8a3a" opacity="0.85"/><ellipse cx="935.7" cy="-1.8" rx="2.3" ry="1.8" fill="#283e20" opacity="0.85"/><ellipse cx="40.6" cy="3.7" rx="3.8" ry="3.0" fill="#a4c878" opacity="0.85"/><ellipse cx="911.6" cy="18.9" rx="4.4" ry="3.5" fill="#7aa852" opacity="0.85"/><ellipse cx="518.7" cy="16.9" rx="2.8" ry="2.3" fill="#a4c878" opacity="0.85"/><ellipse cx="69.5" cy="9.3" rx="4.6" ry="3.6" fill="#5a8a3a" opacity="0.85"/><ellipse cx="171.7" cy="20.9" rx="5.3" ry="4.2" fill="#7aa852" opacity="0.85"/><ellipse cx="227.4" cy="22.0" rx="4.2" ry="3.4" fill="#88b060" opacity="0.85"/><ellipse cx="637.7" cy="15.5" rx="4.7" ry="3.8" fill="#3a5a28" opacity="0.85"/><ellipse cx="1029.5" cy="11.9" rx="2.6" ry="2.1" fill="#a4c878" opacity="0.85"/><ellipse cx="660.9" cy="10.1" rx="2.8" ry="2.2" fill="#6e9a48" opacity="0.85"/><ellipse cx="1221.6" cy="8.8" rx="4.6" ry="3.7" fill="#3a5a28" opacity="0.85"/><ellipse cx="906.0" cy="9.5" rx="3.7" ry="3.0" fill="#5a8a3a" opacity="0.85"/><ellipse cx="1186.8" cy="1.5" rx="2.6" ry="2.1" fill="#7aa852" opacity="0.85"/><ellipse cx="373.8" cy="4.0" rx="4.3" ry="3.5" fill="#283e20" opacity="0.85"/><ellipse cx="907.0" cy="16.7" rx="3.2" ry="2.6" fill="#3a5a28" opacity="0.85"/><ellipse cx="413.5" cy="19.9" rx="2.6" ry="2.1" fill="#a4c878" opacity="0.85"/><ellipse cx="500.0" cy="-1.1" rx="3.5" ry="2.8" fill="#3a5a28" opacity="0.85"/><ellipse cx="283.1" cy="12.2" rx="2.4" ry="1.9" fill="#7aa852" opacity="0.85"/><ellipse cx="187.1" cy="2.8" rx="3.3" ry="2.7" fill="#4a7236" opacity="0.85"/><ellipse cx="142.5" cy="19.5" rx="2.5" ry="2.0" fill="#a4c878" opacity="0.85"/><ellipse cx="1280.0" cy="22.4" rx="4.1" ry="3.3" fill="#3a5a28" opacity="0.85"/><ellipse cx="627.0" cy="-1.5" rx="5.1" ry="4.1" fill="#6e9a48" opacity="0.85"/><ellipse cx="253.7" cy="5.3" rx="3.2" ry="2.6" fill="#b8d090" opacity="0.85"/><ellipse cx="970.6" cy="3.2" rx="3.9" ry="3.1" fill="#a4c878" opacity="0.85"/><ellipse cx="741.6" cy="5.8" rx="4.3" ry="3.5" fill="#6e9a48" opacity="0.85"/><ellipse cx="1242.9" cy="7.0" rx="5.8" ry="4.6" fill="#3a5a28" opacity="0.85"/><ellipse cx="59.6" cy="6.7" rx="3.8" ry="3.0" fill="#a4c878" opacity="0.85"/><ellipse cx="420.1" cy="7.5" rx="2.4" ry="2.0" fill="#3a5a28" opacity="0.85"/><ellipse cx="1038.6" cy="16.8" rx="3.8" ry="3.1" fill="#b8d090" opacity="0.85"/><ellipse cx="140.7" cy="2.2" rx="3.6" ry="2.9" fill="#5a8a3a" opacity="0.85"/><ellipse cx="38.5" cy="11.3" rx="2.4" ry="1.9" fill="#88b060" opacity="0.85"/><ellipse cx="530.8" cy="19.8" rx="2.3" ry="1.8" fill="#88b060" opacity="0.85"/><ellipse cx="458.7" cy="15.2" rx="2.4" ry="1.9" fill="#5a8a3a" opacity="0.85"/><ellipse cx="1081.6" cy="20.7" rx="3.9" ry="3.1" fill="#88b060" opacity="0.85"/><ellipse cx="332.1" cy="0.8" rx="3.0" ry="2.4" fill="#88b060" opacity="0.85"/><ellipse cx="635.0" cy="11.9" rx="2.5" ry="2.0" fill="#7aa852" opacity="0.85"/><ellipse cx="312.3" cy="12.8" rx="2.2" ry="1.7" fill="#3a5a28" opacity="0.85"/><ellipse cx="468.3" cy="3.1" rx="3.6" ry="2.9" fill="#a4c878" opacity="0.85"/><ellipse cx="1269.6" cy="21.6" rx="4.9" ry="3.9" fill="#b8d090" opacity="0.85"/><ellipse cx="642.3" cy="21.2" rx="2.1" ry="1.6" fill="#5a8a3a" opacity="0.85"/><ellipse cx="625.0" cy="18.6" rx="4.3" ry="3.4" fill="#a4c878" opacity="0.85"/><ellipse cx="107.3" cy="2.5" rx="5.4" ry="4.3" fill="#5a8a3a" opacity="0.85"/><ellipse cx="542.0" cy="14.2" rx="2.4" ry="2.0" fill="#6e9a48" opacity="0.85"/><ellipse cx="103.8" cy="13.0" rx="2.9" ry="2.3" fill="#b8d090" opacity="0.85"/><ellipse cx="911.9" cy="-0.4" rx="3.0" ry="2.4" fill="#283e20" opacity="0.85"/><ellipse cx="1263.0" cy="-0.9" rx="4.5" ry="3.6" fill="#88b060" opacity="0.85"/><ellipse cx="1045.9" cy="6.9" rx="5.2" ry="4.2" fill="#7aa852" opacity="0.85"/><ellipse cx="758.5" cy="2.8" rx="3.3" ry="2.6" fill="#4a7236" opacity="0.85"/><ellipse cx="1009.7" cy="-1.2" rx="5.2" ry="4.1" fill="#88b060" opacity="0.85"/><ellipse cx="941.5" cy="15.6" rx="2.6" ry="2.1" fill="#283e20" opacity="0.85"/><ellipse cx="988.5" cy="3.3" rx="5.7" ry="4.6" fill="#283e20" opacity="0.85"/><ellipse cx="909.1" cy="-0.3" rx="2.0" ry="1.6" fill="#7aa852" opacity="0.85"/><ellipse cx="43.7" cy="11.7" rx="3.3" ry="2.7" fill="#6e9a48" opacity="0.85"/><ellipse cx="964.4" cy="14.5" rx="2.8" ry="2.2" fill="#5a8a3a" opacity="0.85"/><ellipse cx="1086.0" cy="18.5" rx="2.4" ry="1.9" fill="#283e20" opacity="0.85"/><ellipse cx="746.8" cy="18.9" rx="4.0" ry="3.2" fill="#7aa852" opacity="0.85"/><ellipse cx="169.1" cy="19.5" rx="5.7" ry="4.6" fill="#5a8a3a" opacity="0.85"/><ellipse cx="956.0" cy="19.6" rx="5.2" ry="4.2" fill="#88b060" opacity="0.85"/><ellipse cx="556.6" cy="19.5" rx="5.1" ry="4.1" fill="#b8d090" opacity="0.85"/><ellipse cx="380.7" cy="23.0" rx="4.1" ry="3.3" fill="#6e9a48" opacity="0.85"/><ellipse cx="82.8" cy="18.4" rx="5.2" ry="4.2" fill="#a4c878" opacity="0.85"/><ellipse cx="304.7" cy="13.3" rx="4.2" ry="3.4" fill="#7aa852" opacity="0.85"/><ellipse cx="736.8" cy="22.3" rx="5.6" ry="4.4" fill="#5a8a3a" opacity="0.85"/><ellipse cx="500.7" cy="18.4" rx="5.2" ry="4.1" fill="#283e20" opacity="0.85"/><ellipse cx="1060.2" cy="8.6" rx="2.3" ry="1.9" fill="#283e20" opacity="0.85"/><ellipse cx="850.6" cy="21.5" rx="3.7" ry="3.0" fill="#3a5a28" opacity="0.85"/><ellipse cx="0.8" cy="10.7" rx="2.1" ry="1.7" fill="#6e9a48" opacity="0.85"/><ellipse cx="1127.9" cy="10.4" rx="3.6" ry="2.9" fill="#3a5a28" opacity="0.85"/><ellipse cx="585.2" cy="6.7" rx="2.9" ry="2.3" fill="#283e20" opacity="0.85"/><ellipse cx="503.1" cy="10.1" rx="2.1" ry="1.7" fill="#283e20" opacity="0.85"/><ellipse cx="108.5" cy="5.0" rx="4.8" ry="3.8" fill="#7aa852" opacity="0.85"/><rect x="290" y="0" width="100" height="22" fill="#1a2636" opacity="0.55"/><rect x="980" y="0" width="100" height="22" fill="#18202e" opacity="0.55"/><rect x="80" y="0" width="60" height="22" fill="#22303a" opacity="0.55"/><rect x="20" y="0" width="115" height="3" fill="#202020"/><rect x="0" y="22" width="1280" height="2" fill="#2a2e2a"/></svg>
</div>
<div class="a" id="win"></div>
<div class="a" style="left:4px;top:32px;width:1266px;height:905px;background:#e2e2e2"></div>
<div class="a" id="title">
  <div class="a" style="left:6px;top:9px;width:16px;height:14px;background:#1010c8;border:1px solid #000090"></div>
  <svg style="left:6px;top:9px" width="16" height="14"><path d="M2.5 2v1.5M2.5 5v6.5M7.5 5h-3v3h3v3.5h-3M9.5 2v1.5M9.5 5v6.5M14.5 5h-3v3h3v3.5h-3" stroke="#fff" stroke-width="1.1" fill="none"/></svg>
  <div class="a t">пачки 36кгц - ISIS Professional (Анимация)</div>
  <div class="a" style="left:1202px;top:6px;width:19px;height:20px;border-radius:3px;background:linear-gradient(180deg,#6a6a6a,#3a3a3a 50%,#2a2a2a);border:1px solid #555"></div>
  <div class="a" style="left:1206px;top:19px;width:8px;height:3px;background:#fff"></div>
  <div class="a" style="left:1225px;top:6px;width:19px;height:20px;border-radius:3px;background:linear-gradient(180deg,#6a6a6a,#3a3a3a 50%,#2a2a2a);border:1px solid #555"></div>
  <div class="a" style="left:1229px;top:11px;width:11px;height:11px;border:2px solid #fff;border-top-width:3px;background:#333"></div>
  <div class="a" style="left:1248px;top:6px;width:19px;height:20px;border-radius:3px;background:linear-gradient(180deg,#e87a60,#d84020 50%,#c83818);border:1px solid #a02810"></div>
  <svg style="left:1252px;top:11px" width="12" height="11"><path d="M1 1L11 10M11 1L1 10" stroke="#fff" stroke-width="2"/></svg>
</div>
<div class="a" id="menu">
  <span style="left:6px">Файл</span><span style="left:43px">Вид</span><span style="left:74px">Правка</span><span style="left:123px">Сервис</span><span style="left:171px">Проект</span><span style="left:221px">Диаграмма</span><span style="left:287px">Исходник</span><span style="left:348px">Отладка</span><span style="left:405px">Библиотека</span><span style="left:477px">Шаблон</span><span style="left:529px">Система</span><span style="left:584px">Справка</span>
</div>
<div class="a" style="left:4px;top:52px;width:1266px;height:2px;background:#fbfbfb"></div>

<div class="a" style="left:7px;top:58px;width:3px;height:23px;border-left:1px solid #fff;border-right:1px solid #b0b0b0"></div>
<svg style="left:14px;top:59px" width="18" height="18"><path d="M3 1h8l4 4v12H3z" fill="#f4f4f4" stroke="#555"/><path d="M11 1v4h4" fill="#ddd" stroke="#555"/></svg>
<svg style="left:35px;top:59px" width="18" height="18"><path d="M1 6h5l2 2h6v8H1z" fill="#e8d070" stroke="#8a7020"/><path d="M3 10h14l-3 6H1z" fill="#f6e48a" stroke="#8a7020"/><path d="M9 4q4-4 7 0" stroke="#2050b0" stroke-width="1.5" fill="none"/></svg>
<svg style="left:57px;top:59px" width="18" height="18"><rect x="1" y="1" width="15" height="15" fill="#a8a8a8"/></svg>
<div class="a" style="left:81px;top:58px;width:2px;height:22px;border-left:1px solid #b4b4b4;border-right:1px solid #fff"></div>
<svg style="left:86px;top:59px" width="18" height="18"><rect x="4" y="1" width="13" height="12" fill="#a8a8a8"/><rect x="1" y="5" width="12" height="12" fill="#a8a8a8"/></svg>
<svg style="left:107px;top:59px" width="18" height="18"><rect x="1" y="1" width="11" height="12" fill="#eee" stroke="#666"/><rect x="6" y="7" width="11" height="10" fill="#3050a8"/><rect x="8" y="8" width="6" height="3" fill="#ddd"/><path d="M10 2q5 0 5 5" stroke="#2050b0" stroke-width="1.5" fill="none"/></svg>
<div class="a" style="left:130px;top:58px;width:2px;height:22px;border-left:1px solid #b4b4b4;border-right:1px solid #fff"></div>
<svg style="left:135px;top:59px" width="18" height="18"><rect x="5" y="1" width="8" height="6" fill="#fff" stroke="#666"/><rect x="1" y="6" width="16" height="7" rx="2" fill="#c8c8c8" stroke="#555"/><rect x="5" y="11" width="8" height="6" fill="#fff" stroke="#666"/><path d="M9 7v5M6.5 9.5h5" stroke="#20a020" stroke-width="2"/></svg>
<svg style="left:157px;top:59px" width="18" height="18"><path d="M3 1h8l4 4v12H3z" fill="#f0f0f0" stroke="#555"/><rect x="6" y="7" width="6" height="7" fill="#999"/></svg>
<div class="a" style="left:179px;top:58px;width:2px;height:22px;border-left:1px solid #b4b4b4;border-right:1px solid #fff"></div>
<div class="a" style="left:185px;top:58px;width:3px;height:23px;border-left:1px solid #fff;border-right:1px solid #b0b0b0"></div>
<svg style="left:193px;top:59px" width="18" height="18"><path d="M3 1h8l4 4v12H3z" fill="#f0f0f0" stroke="#555"/><path d="M6 9q0-4 5-3M12 9q0 4-5 3" stroke="#20a020" stroke-width="2" fill="none"/></svg>
<div class="a" style="left:212px;top:57px;width:21px;height:23px;background:#f0f0f0;border:1px solid #c8c8c8"></div>
<svg style="left:214px;top:59px" width="18" height="18"><rect x="2" y="2" width="2" height="2" fill="#333"/><rect x="2" y="8" width="2" height="2" fill="#333"/><rect x="2" y="14" width="2" height="2" fill="#333"/><rect x="8" y="2" width="2" height="2" fill="#333"/><rect x="8" y="8" width="2" height="2" fill="#333"/><rect x="8" y="14" width="2" height="2" fill="#333"/><rect x="14" y="2" width="2" height="2" fill="#333"/><rect x="14" y="8" width="2" height="2" fill="#333"/><rect x="14" y="14" width="2" height="2" fill="#333"/></svg>
<div class="a" style="left:237px;top:58px;width:2px;height:22px;border-left:1px solid #b4b4b4;border-right:1px solid #fff"></div>
<svg style="left:242px;top:59px" width="18" height="18"><path d="M9 1v16M1 9h16" stroke="#333" stroke-width="1.2"/><rect x="5" y="5" width="8" height="8" fill="#c8b830" stroke="#6a6010"/></svg>
<div class="a" style="left:265px;top:58px;width:2px;height:22px;border-left:1px solid #b4b4b4;border-right:1px solid #fff"></div>
<svg style="left:271px;top:59px" width="18" height="18"><path d="M9 1l-3 4h6zM9 17l-3-4h6zM1 9l4-3v6zM17 9l-4-3v6zM9 4v10M4 9h10" fill="#2a5ac0" stroke="#2a5ac0" stroke-width="2"/></svg>
<svg style="left:292px;top:59px" width="18" height="18"><circle cx="7" cy="7" r="5.5" fill="#e8eef0" stroke="#555" stroke-width="1.5"/><path d="M11 11l6 6" stroke="#666" stroke-width="3"/><path d="M7 4v6M4 7h6" stroke="#333" stroke-width="1.5"/></svg>
<svg style="left:313px;top:59px" width="18" height="18"><circle cx="7" cy="7" r="5.5" fill="#e8eef0" stroke="#555" stroke-width="1.5"/><path d="M11 11l6 6" stroke="#666" stroke-width="3"/><path d="M4 7h6" stroke="#333" stroke-width="1.5"/></svg>
<svg style="left:334px;top:59px" width="18" height="18"><circle cx="7" cy="7" r="5.5" fill="#e8eef0" stroke="#555" stroke-width="1.5"/><path d="M11 11l6 6" stroke="#666" stroke-width="3"/><rect x="5" y="5" width="4" height="4" fill="#888" stroke="#333"/></svg>
<svg style="left:356px;top:59px" width="18" height="18"><circle cx="7" cy="7" r="5.5" fill="#e8eef0" stroke="#555" stroke-width="1.5"/><path d="M11 11l6 6" stroke="#666" stroke-width="3"/><path d="M1 8v9h9" stroke="#333" stroke-dasharray="1 1" fill="none"/></svg>
<div class="a" style="left:379px;top:58px;width:2px;height:22px;border-left:1px solid #b4b4b4;border-right:1px solid #fff"></div>
<div class="a" style="left:385px;top:58px;width:3px;height:23px;border-left:1px solid #fff;border-right:1px solid #b0b0b0"></div>
<svg style="left:393px;top:59px" width="18" height="18"><path d="M4 3v5h5M5 8q3-5 8-1q3 4-2 9" stroke="#a8a8a8" stroke-width="3" fill="none"/></svg>
<svg style="left:414px;top:59px" width="18" height="18"><path d="M14 3v5h-5M13 8q-3-5-8-1q-3 4 2 9" stroke="#a8a8a8" stroke-width="3" fill="none"/></svg>
<div class="a" style="left:437px;top:58px;width:2px;height:22px;border-left:1px solid #b4b4b4;border-right:1px solid #fff"></div>
<svg style="left:443px;top:59px" width="18" height="18"><path d="M5 1l4 9l4-9M9 10l-4 4M9 10l4 4" stroke="#a8a8a8" stroke-width="2.5" fill="none"/><circle cx="5" cy="15" r="2.5" fill="#a8a8a8"/><circle cx="13" cy="15" r="2.5" fill="#a8a8a8"/></svg>
<svg style="left:464px;top:59px" width="18" height="18"><rect x="1" y="1" width="9" height="11" fill="#fff" stroke="#444"/><rect x="7" y="5" width="10" height="12" fill="#fff" stroke="#444"/><path d="M9 9h6M9 11h6M9 13h6" stroke="#444"/></svg>
<svg style="left:485px;top:59px" width="18" height="18"><rect x="2" y="3" width="12" height="14" fill="#a8a8a8"/><rect x="7" y="8" width="10" height="9" fill="#a8a8a8"/></svg>
<div class="a" style="left:507px;top:58px;width:2px;height:22px;border-left:1px solid #b4b4b4;border-right:1px solid #fff"></div>
<svg style="left:513px;top:59px" width="18" height="18"><rect x="1" y="2" width="16" height="4" fill="#a8a8a8"/><rect x="1" y="12" width="16" height="4" fill="#a8a8a8"/><rect x="5" y="5" width="8" height="8" fill="#a8a8a8"/></svg>
<svg style="left:534px;top:59px" width="18" height="18"><rect x="1" y="2" width="16" height="4" fill="#a8a8a8"/><rect x="1" y="12" width="16" height="4" fill="#a8a8a8"/><rect x="5" y="5" width="8" height="8" fill="#a8a8a8"/></svg>
<svg style="left:555px;top:59px" width="18" height="18"><rect x="1" y="1" width="16" height="16" fill="#a8a8a8"/></svg>
<svg style="left:577px;top:59px" width="18" height="18"><rect x="1" y="1" width="16" height="16" fill="#a8a8a8"/></svg>
<div class="a" style="left:600px;top:58px;width:2px;height:22px;border-left:1px solid #b4b4b4;border-right:1px solid #fff"></div>
<svg style="left:605px;top:59px" width="18" height="18"><circle cx="7" cy="7" r="5" fill="#a8a8a8"/><path d="M10 10l6 6" stroke="#a8a8a8" stroke-width="3"/></svg>
<svg style="left:627px;top:59px" width="18" height="18"><path d="M1 10h5l6-5v10zM13 3v6M10 6h6" stroke="#a8a8a8" stroke-width="2" fill="#a8a8a8"/></svg>
<svg style="left:648px;top:59px" width="18" height="18"><rect x="3" y="3" width="12" height="12" fill="#a8a8a8"/><path d="M1 5h17M1 9h17M1 13h17M5 1v17M9 1v17M13 1v17" stroke="#a8a8a8"/></svg>
<svg style="left:669px;top:59px" width="18" height="18"><path d="M3 16l8-8M8 3l5 1l3 3l-3 3l-5-5" stroke="#a8a8a8" stroke-width="3" fill="#a8a8a8"/></svg>
<div class="a" style="left:691px;top:58px;width:2px;height:22px;border-left:1px solid #b4b4b4;border-right:1px solid #fff"></div>
<div class="a" style="left:697px;top:58px;width:3px;height:23px;border-left:1px solid #fff;border-right:1px solid #b0b0b0"></div>
<div class="a" style="left:703px;top:57px;width:23px;height:23px;background:#f0f0f0;border:1px solid #c8c8c8"></div>
<svg style="left:706px;top:59px" width="18" height="18"><rect x="1" y="1" width="7" height="5" fill="#30a030" stroke="#105010"/><rect x="10" y="11" width="7" height="5" fill="#30a030" stroke="#105010"/><path d="M8 4h4v5h-6v3h4" stroke="#2050c0" stroke-width="1.5" fill="none"/><path d="M6 6v6" stroke="#d04020" stroke-width="1.5"/></svg>
<div class="a" style="left:729px;top:58px;width:2px;height:22px;border-left:1px solid #b4b4b4;border-right:1px solid #fff"></div>
<svg style="left:735px;top:59px" width="18" height="18"><rect x="1" y="5" width="7" height="11" rx="2" fill="#555"/><rect x="10" y="5" width="7" height="11" rx="2" fill="#555"/><rect x="3" y="2" width="3" height="5" fill="#777"/><rect x="12" y="2" width="3" height="5" fill="#777"/><rect x="7" y="7" width="4" height="4" fill="#888"/></svg>
<svg style="left:757px;top:59px" width="18" height="18"><path d="M2 16l9-9M11 2l5 5" stroke="#a8a8a8" stroke-width="3"/><text x="11" y="17" font-size="8" fill="#a8a8a8">A</text></svg>
<div class="a" style="left:779px;top:58px;width:2px;height:22px;border-left:1px solid #b4b4b4;border-right:1px solid #fff"></div>
<svg style="left:785px;top:59px" width="18" height="18"><path d="M3 1h9l3 3v13H3z" fill="#e0f0e0" stroke="#444"/><rect x="5" y="5" width="8" height="9" fill="#30a050" stroke="#104020"/><path d="M9 5v9" stroke="#a0e0ff"/></svg>
<svg style="left:806px;top:59px" width="18" height="18"><path d="M3 1h9l3 3v13H3z" fill="#a8a8a8"/></svg>
<svg style="left:827px;top:59px" width="18" height="18"><path d="M1 1l3 4v8l-3 4h16l-3-4V5l3-4z" fill="#a8a8a8"/></svg>
<svg style="left:849px;top:59px" width="18" height="18"><path d="M1 8l6-6l6 6v9H1z" fill="#a8a8a8"/><path d="M11 5q5 1 3 7" stroke="#a8a8a8" stroke-width="2" fill="none"/></svg>
<div class="a" style="left:871px;top:58px;width:2px;height:22px;border-left:1px solid #b4b4b4;border-right:1px solid #fff"></div>
<svg style="left:876px;top:59px" width="18" height="18"><path d="M3 1h9l3 3v13H3z" fill="#f0f0e0" stroke="#444"/><text x="5" y="14" font-size="12" fill="#607020" font-family="Liberation Sans">$</text></svg>
<div class="a" style="left:890px;top:54px;width:380px;height:2px;background:#f6f6f6"></div>
<div class="a" style="left:8px;top:84px;width:22px;height:2px;border-top:1px solid #b8b8b8;border-bottom:1px solid #fff"></div>
<svg style="left:6px;top:91px" width="20" height="20"><path d="M6 3 L6 17 L9 14 L12 19 L14 18 L11 13 L15 13 Z" fill="#333" stroke="#111" stroke-width="0.8"/></svg>
<svg style="left:6px;top:113px" width="20" height="20"><path d="M7 3 L17 10 L7 17 Z" fill="#d8d060" stroke="#8a8020"/><path d="M2 7h5M2 13h5M17 10h3" stroke="#8a8020" stroke-width="1.2"/></svg>
<svg style="left:6px;top:135px" width="20" height="20"><path d="M10 2v16M2 10h16" stroke="#2040a0" stroke-width="1.5"/><rect x="6.5" y="6.5" width="7" height="7" fill="#2050c0"/></svg>
<svg style="left:6px;top:157px" width="20" height="20"><rect x="1.5" y="4.5" width="17" height="11" fill="none" stroke="#333" stroke-dasharray="1 1"/><text x="3" y="14" font-size="9" fill="#2040a0" font-family="Liberation Sans">LBL</text></svg>
<svg style="left:6px;top:179px" width="20" height="20"><path d="M4 4h12" stroke="#444" stroke-dasharray="3 1"/><path d="M4 7h12" stroke="#444" stroke-dasharray="3 1"/><path d="M4 10h12" stroke="#444" stroke-dasharray="3 1"/><path d="M4 13h12" stroke="#444" stroke-dasharray="3 1"/><path d="M4 16h12" stroke="#444" stroke-dasharray="3 1"/></svg>
<svg style="left:6px;top:201px" width="20" height="20"><path d="M2 12h16" stroke="#2050b0" stroke-width="3"/><path d="M7 5v10M13 5v10" stroke="#2050b0" stroke-width="2"/></svg>
<svg style="left:6px;top:223px" width="20" height="20"><rect x="6" y="3" width="8" height="14" fill="#d0c850" stroke="#706010"/><path d="M2 7h4M2 13h4M14 7h4M14 13h4" stroke="#706010" stroke-width="1.2"/></svg>
<div class="a" style="left:8px;top:245px;width:22px;height:1px;background:#fff;border-top:1px solid #c0c0c0"></div>
<svg style="left:6px;top:246px" width="20" height="20"><path d="M5 6h9l3 2l-3 2H5z" fill="#d0c850" stroke="#706010"/><path d="M6 12h9v4H6l-3-2z" fill="#d0c850" stroke="#706010"/></svg>
<svg style="left:6px;top:269px" width="20" height="20"><path d="M9 3l8 7l-8 7z" fill="none" stroke="#555"/><path d="M2 7h4M2 13h4M17 10h3" stroke="#555" stroke-dasharray="2 1"/></svg>
<svg style="left:6px;top:292px" width="20" height="20"><path d="M3 2v15h15" stroke="#333" fill="none"/><path d="M4 9q3-6 6 0t6 0" stroke="#2040b0" fill="none" stroke-width="1.4"/><path d="M4 13q3-3 6 0t6 0" stroke="#d03030" fill="none" stroke-width="1.2"/></svg>
<svg style="left:6px;top:315px" width="20" height="20"><rect x="2" y="5" width="16" height="10" rx="1" fill="#e8e8e8" stroke="#555" stroke-width="1.5"/><rect x="5" y="9" width="10" height="3" fill="none" stroke="#555"/></svg>
<svg style="left:6px;top:337px" width="20" height="20"><circle cx="10" cy="10" r="8" fill="#a0a8b8" stroke="#555"/><path d="M4 11q3-8 6-1t6-1" stroke="#2040b0" stroke-width="2" fill="none"/></svg>
<svg style="left:6px;top:359px" width="20" height="20"><text x="1" y="8" font-size="8" fill="#2040a0" font-family="Liberation Sans">V</text><path d="M3 18l9-8" stroke="#c0b030" stroke-width="3"/><path d="M12 10q3-5 6 0" stroke="#333" fill="none"/></svg>
<svg style="left:6px;top:381px" width="20" height="20"><text x="2" y="8" font-size="8" fill="#2040a0" font-family="Liberation Sans" font-weight="bold">I</text><path d="M3 18l9-8" stroke="#c0b030" stroke-width="3"/><path d="M12 10q3-5 6 0" stroke="#333" fill="none"/></svg>
<div class="a" style="left:6px;top:402px;width:22px;height:23px;background:#f4f4f4;border:1px solid #d0d0d0"></div>
<svg style="left:6px;top:404px" width="20" height="20"><path d="M3 9q7-9 14 0z" fill="#f0f0f0" stroke="#333"/><path d="M10 9l4-5" stroke="#d03030"/><rect x="5" y="10" width="10" height="6" fill="#c0c0c0" stroke="#333"/></svg>
<div class="a" style="left:8px;top:426px;width:22px;height:1px;background:#fff;border-top:1px solid #c0c0c0"></div>
<svg style="left:6px;top:428px" width="20" height="20"><path d="M3 17L17 3" stroke="#222" stroke-width="1.3"/></svg>
<svg style="left:6px;top:451px" width="20" height="20"><rect x="3" y="3" width="14" height="14" fill="#68aaa8" stroke="#2a5a58"/></svg>
<svg style="left:6px;top:474px" width="20" height="20"><circle cx="10" cy="10" r="8" fill="#68aaa8" stroke="#2a5a58"/></svg>
<svg style="left:6px;top:496px" width="20" height="20"><path d="M3 3h7q7 0 7 8v6" stroke="#333" fill="none"/><path d="M3 3v14h14" stroke="#2050b0" stroke-dasharray="1.5 1.5" fill="none"/></svg>
<svg style="left:6px;top:518px" width="20" height="20"><ellipse cx="7" cy="10" rx="5" ry="7" fill="#68aaa8" stroke="#2a5a58"/><ellipse cx="13" cy="10" rx="5" ry="7" fill="#68aaa8" stroke="#2a5a58"/></svg>
<svg style="left:6px;top:540px" width="20" height="20"><text x="2" y="17" font-size="17" font-weight="bold" font-family="Liberation Serif" fill="#222">A</text></svg>
<svg style="left:6px;top:562px" width="20" height="20"><rect x="3" y="3" width="14" height="14" fill="#1a3a3a"/><text x="5" y="15" font-size="12" font-weight="bold" fill="#a0e0e0" font-family="Liberation Sans">S</text></svg>
<svg style="left:6px;top:584px" width="20" height="20"><path d="M10 2v16M2 10h16" stroke="#2a5a58" stroke-width="1.2"/><rect x="7" y="7" width="6" height="6" fill="#68aaa8" stroke="#2a5a58"/></svg>
<div class="a" style="left:6px;top:607px;width:24px;height:2px;background:#f8f8f8;border-bottom:1px solid #c8c8c8"></div>
<svg style="left:6px;top:621px" width="20" height="20"><path d="M15 6q-4-4-9 0q-4 5 0 9q5 4 9 0" stroke="#2a50a8" stroke-width="2.4" fill="none"/><path d="M12 3l5 2l-3 4z" fill="#2a50a8"/></svg>
<svg style="left:6px;top:643px" width="20" height="20"><path d="M5 6q4-4 9 0q4 5 0 9q-5 4-9 0" stroke="#2a50a8" stroke-width="2.4" fill="none"/><path d="M8 3l-5 2l3 4z" fill="#2a50a8"/></svg>
<div class="a" style="left:6px;top:666px;width:23px;height:17px;background:#fff;border:1px solid #222;border-right-color:#ddd;border-bottom-color:#ddd;font-size:11px;line-height:14px;padding-left:1px">0°</div>
<div class="a" style="left:8px;top:689px;width:22px;height:1px;background:#fff;border-top:1px solid #c0c0c0"></div>
<svg style="left:6px;top:691px" width="20" height="20"><path d="M2 10l5-5v10zM18 10l-5-5v10zM6 10h8" fill="#5a70b8" stroke="#2a40a0" stroke-width="1.5"/></svg>
<svg style="left:6px;top:713px" width="20" height="20"><path d="M10 2l-5 5h10zM10 18l-5-5h10zM10 6v8" fill="#5a70b8" stroke="#2a40a0" stroke-width="1.5"/></svg>
<div class="a" style="left:34px;top:85px;width:121px;height:101px;background:#e0e0d0;border:2px solid #1a1a1a"></div>
<div class="a" style="left:43px;top:90px;width:103px;height:91px;border:1px solid #30d030"></div>
<div class="a" style="left:44px;top:93px;width:101px;height:85px;border:1.5px solid #101080;background:#e0e0d4"></div>
<svg style="left:0;top:0" width="200" height="200"><path d="M47.4,120.4 H73.6 V132.3 M47.4,120.4 V142.3 H65.4 V132.3 M47.4,132.3 H86.5 M71.25,120.4 V103.2 H73.6" stroke="#000" fill="none" stroke-width="1.3"/><path d="M86.5,120.4 H112.3 V132.3 M86.5,120.4 V142.3 H103.7 V132.3 M86.5,132.3 H121 M93.75,119.2 V104.2 H96 M121,132.3 H122.4 V121.6 H125" stroke="#000" fill="none" stroke-width="1.3"/><rect x="75.2" y="102.2" width="16.5" height="5.5" fill="#000"/><rect x="76.6" y="103.2" width="1.4" height="3.5" fill="#fff"/><rect x="96.25" y="103.2" width="16.5" height="5.5" fill="#000"/><rect x="97.4" y="104.2" width="1.2" height="3.5" fill="#fff"/><rect x="101.0" y="105.6" width="1" height="1" fill="#fff"/><rect x="103.8" y="105.6" width="1" height="1" fill="#fff"/><rect x="106.6" y="105.6" width="1" height="1" fill="#fff"/><rect x="109.4" y="105.6" width="1" height="1" fill="#fff"/><rect x="125.2" y="120.2" width="9.7" height="9.6" fill="#000"/><path d="M126.8,128.5 V121.8 H133.5" stroke="#fff" stroke-width="1" fill="none"/><path d="M50.5,129.3 v6 l4.2,-3 z" fill="#e0e0d4" stroke="#000" stroke-width="1.1"/><path d="M60,129.3 v6 l4.2,-3 z" fill="#e0e0d4" stroke="#000" stroke-width="1.1"/><path d="M69,129.3 v6 l4.2,-3 z" fill="#e0e0d4" stroke="#000" stroke-width="1.1"/><path d="M89.4,129.3 v6 l4.2,-3 z" fill="#e0e0d4" stroke="#000" stroke-width="1.1"/><path d="M98.5,129.3 v6 l4.2,-3 z" fill="#e0e0d4" stroke="#000" stroke-width="1.1"/><path d="M107.5,129.3 v6 l4.2,-3 z" fill="#e0e0d4" stroke="#000" stroke-width="1.1"/><path d="M116,129.3 v6 l4.2,-3 z" fill="#e0e0d4" stroke="#000" stroke-width="1.1"/><circle cx="53" cy="142.3" r="1.5" fill="#000"/><circle cx="92" cy="142.3" r="1.5" fill="#000"/></svg>
<div class="a" style="left:34px;top:190px;width:121px;height:17px;background:#6a6a6a;border:1px solid #2a2a2a;border-bottom:none;color:#f0f0f0;font-size:12px;line-height:16px;text-align:center;letter-spacing:0.2px"><div style="transform:scaleX(0.88)">INSTRUMENTS</div></div>
<div class="a" style="left:34px;top:207px;width:121px;height:700px;background:#fff;border:1px solid #2a2a2a;border-top:none;overflow:hidden">
<div class="a" style="left:0;top:1px;width:121px;height:13px;"></div><div class="a" style="left:2px;top:1px;height:13px;font-size:12px;line-height:13px;white-space:nowrap;letter-spacing:0px;transform:scaleX(0.895);transform-origin:0 0;color:#0a0a0a">OSCILLOSCOPE</div>
<div class="a" style="left:0;top:14px;width:121px;height:13px;"></div><div class="a" style="left:2px;top:14px;height:13px;font-size:12px;line-height:13px;white-space:nowrap;letter-spacing:0px;transform:scaleX(0.895);transform-origin:0 0;color:#0a0a0a">LOGIC ANALYSER</div>
<div class="a" style="left:0;top:27px;width:121px;height:13px;background:#c4c4c4;"></div><div class="a" style="left:2px;top:27px;height:13px;font-size:12px;line-height:13px;white-space:nowrap;letter-spacing:0px;transform:scaleX(0.895);transform-origin:0 0;color:#0a0a0a">COUNTER TIMER</div>
<div class="a" style="left:0;top:40px;width:121px;height:13px;"></div><div class="a" style="left:2px;top:40px;height:13px;font-size:12px;line-height:13px;white-space:nowrap;letter-spacing:0px;transform:scaleX(0.895);transform-origin:0 0;color:#0a0a0a">VIRTUAL TERMINAL</div>
<div class="a" style="left:0;top:53px;width:121px;height:13px;"></div><div class="a" style="left:2px;top:53px;height:13px;font-size:12px;line-height:13px;white-space:nowrap;letter-spacing:0px;transform:scaleX(0.895);transform-origin:0 0;color:#0a0a0a">SPI DEBUGGER</div>
<div class="a" style="left:0;top:66px;width:121px;height:13px;"></div><div class="a" style="left:2px;top:66px;height:13px;font-size:12px;line-height:13px;white-space:nowrap;letter-spacing:0px;transform:scaleX(0.895);transform-origin:0 0;color:#0a0a0a">I2C DEBUGGER</div>
<div class="a" style="left:0;top:79px;width:121px;height:13px;"></div><div class="a" style="left:2px;top:79px;height:13px;font-size:12px;line-height:13px;white-space:nowrap;letter-spacing:0px;transform:scaleX(0.895);transform-origin:0 0;color:#0a0a0a">SIGNAL GENERATOR</div>
<div class="a" style="left:0;top:92px;width:121px;height:13px;"></div><div class="a" style="left:2px;top:92px;height:13px;font-size:12px;line-height:13px;white-space:nowrap;letter-spacing:0px;transform:scaleX(0.895);transform-origin:0 0;color:#0a0a0a">PATTERN GENERATOR</div>
<div class="a" style="left:0;top:105px;width:121px;height:13px;"></div><div class="a" style="left:2px;top:105px;height:13px;font-size:12px;line-height:13px;white-space:nowrap;letter-spacing:0px;transform:scaleX(0.895);transform-origin:0 0;color:#0a0a0a">DC VOLTMETER</div>
<div class="a" style="left:0;top:118px;width:121px;height:13px;"></div><div class="a" style="left:2px;top:118px;height:13px;font-size:12px;line-height:13px;white-space:nowrap;letter-spacing:0px;transform:scaleX(0.895);transform-origin:0 0;color:#0a0a0a">DC AMMETER</div>
<div class="a" style="left:0;top:131px;width:121px;height:13px;"></div><div class="a" style="left:2px;top:131px;height:13px;font-size:12px;line-height:13px;white-space:nowrap;letter-spacing:0px;transform:scaleX(0.895);transform-origin:0 0;color:#0a0a0a">AC VOLTMETER</div>
<div class="a" style="left:0;top:144px;width:121px;height:13px;"></div><div class="a" style="left:2px;top:144px;height:13px;font-size:12px;line-height:13px;white-space:nowrap;letter-spacing:0px;transform:scaleX(0.895);transform-origin:0 0;color:#0a0a0a">AC AMMETER</div>
</div>
<div class="a" style="left:35px;top:890px;width:119px;height:16px;background:#eeeeee;border-top:1px solid #ddd"></div>
<div class="a" style="left:36px;top:891px;width:15px;height:15px;background:linear-gradient(#fafafa,#dcdcdc);border:1px solid #b8b8b8;border-radius:2px"></div>
<svg style="left:40px;top:894px" width="8" height="10"><path d="M6 1L2 5L6 9" stroke="#555" stroke-width="1.5" fill="none"/></svg>
<div class="a" style="left:53px;top:891px;width:77px;height:15px;background:linear-gradient(#fafafa,#d8d8d8);border:1px solid #b0b0b0;border-radius:2px"></div>
<svg style="left:88px;top:895px" width="8" height="8"><path d="M1 1v6M3 1v6M5 1v6M7 1v6" stroke="#888"/></svg>
<div class="a" style="left:138px;top:891px;width:15px;height:15px;background:linear-gradient(#fafafa,#dcdcdc);border:1px solid #b8b8b8;border-radius:2px"></div>
<svg style="left:142px;top:894px" width="8" height="10"><path d="M2 1L6 5L2 9" stroke="#555" stroke-width="1.5" fill="none"/></svg>
<div class="a" style="left:7px;top:912px;width:3px;height:22px;border-left:1px solid #fff;border-right:1px solid #b0b0b0"></div>
<div class="a" style="left:14px;top:914px;width:157px;height:18px;background:#1a1a1a"></div>
<div class="a" style="left:15px;top:915px;width:38px;height:16px;background:linear-gradient(#f8f8f8,#dedede);border-right:1px solid #888;border-bottom:1px solid #888"></div>
<div class="a" style="left:54px;top:915px;width:38px;height:16px;background:linear-gradient(#f8f8f8,#dedede);border-right:1px solid #888;border-bottom:1px solid #888"></div>
<div class="a" style="left:93px;top:915px;width:38px;height:16px;background:linear-gradient(#f8f8f8,#dedede);border-right:1px solid #888;border-bottom:1px solid #888"></div>
<div class="a" style="left:132px;top:915px;width:38px;height:16px;background:linear-gradient(#f8f8f8,#dedede);border-right:1px solid #888;border-bottom:1px solid #888"></div>
<svg style="left:29px;top:917px" width="12" height="12"><path d="M2 1L10 6L2 11Z" fill="#108010"/></svg>
<svg style="left:66px;top:917px" width="14" height="12"><rect x="1" y="1" width="2.5" height="10" fill="#000"/><path d="M5 1L12 6L5 11Z" fill="#000"/></svg>
<svg style="left:106px;top:917px" width="12" height="12"><rect x="1" y="1" width="3" height="10" fill="#000"/><rect x="7" y="1" width="3" height="10" fill="#000"/></svg>
<svg style="left:145px;top:917px" width="12" height="12"><rect x="1" y="1" width="10" height="10" fill="#000"/></svg>
<div class="a" style="left:176px;top:913px;width:97px;height:20px;background:#e6e6e6;border:1px solid #c8c8c8;border-right-color:#fff;border-bottom-color:#fff"></div>
<svg style="left:179px;top:914px" width="17" height="16"><path d="M8.5 1L16 15H1Z" fill="#f0d020" stroke="#a08000"/><path d="M8.5 5v6M8.5 12.5v1.5" stroke="#000" stroke-width="1.8"/></svg>
<div class="a" style="left:203px;top:916px;font-size:11.5px;white-space:nowrap">3 Message(s)</div>
<div class="a" style="left:280px;top:911px;width:2px;height:24px;border-left:1px solid #b0b0b0;border-right:1px solid #fff"></div>
<div class="a" style="left:284px;top:912px;width:3px;height:22px;border-left:1px solid #fff;border-right:1px solid #b0b0b0"></div>
<div class="a" style="left:290px;top:913px;width:110px;height:20px;background:#e4e4e4;border:1px solid #b8b8b8;border-right-color:#fff;border-bottom-color:#fff"></div>
<div class="a" style="left:292px;top:916px;font-size:11.5px;white-space:nowrap;color:#106010">ANIMATING: 00:00:0</div>
<div class="a" style="left:1086px;top:915px;width:40px;height:15px;border:1px solid #a8a8a8;border-right-color:#fff;border-bottom-color:#fff"></div>
<div class="a" style="left:1130px;top:911px;width:2px;height:24px;border-left:1px solid #fff;border-right:1px solid #b0b0b0"></div>
<div class="a" style="left:1134px;top:913px;width:3px;height:21px;border-left:1px solid #fff;border-right:1px solid #b0b0b0"></div>
<div class="a" style="left:1141px;top:915px;width:125px;height:15px;border:1px solid #a8a8a8;border-right-color:#fff;border-bottom-color:#fff"></div>
<div class="a" style="left:159px;top:85px;width:1107px;height:822px;border:1px solid #101010;overflow:hidden;background:#e0e0d1">
<svg style="left:-160px;top:-86px" width="1280" height="960" font-family="Liberation Sans">
<rect x="160.40" y="80" width="1.6" height="830" fill="#cbcbbc"/><rect x="171.00" y="80" width="2" height="830" fill="#b9b9a9"/><rect x="182.00" y="80" width="1.6" height="830" fill="#cbcbbc"/><rect x="192.80" y="80" width="1.6" height="830" fill="#cbcbbc"/><rect x="203.60" y="80" width="1.6" height="830" fill="#cbcbbc"/><rect x="214.40" y="80" width="1.6" height="830" fill="#cbcbbc"/><rect x="225.20" y="80" width="1.6" height="830" fill="#cbcbbc"/><rect x="236.00" y="80" width="1.6" height="830" fill="#cbcbbc"/><rect x="246.80" y="80" width="1.6" height="830" fill="#cbcbbc"/><rect x="257.60" y="80" width="1.6" height="830" fill="#cbcbbc"/><rect x="268.40" y="80" width="1.6" height="830" fill="#cbcbbc"/><rect x="279.00" y="80" width="2" height="830" fill="#b9b9a9"/><rect x="290.00" y="80" width="1.6" height="830" fill="#cbcbbc"/><rect x="300.80" y="80" width="1.6" height="830" fill="#cbcbbc"/><rect x="311.60" y="80" width="1.6" height="830" fill="#cbcbbc"/><rect x="322.40" y="80" width="1.6" height="830" fill="#cbcbbc"/><rect x="333.20" y="80" width="1.6" height="830" fill="#cbcbbc"/><rect x="344.00" y="80" width="1.6" height="830" fill="#cbcbbc"/><rect x="354.80" y="80" width="1.6" height="830" fill="#cbcbbc"/><rect x="365.60" y="80" width="1.6" height="830" fill="#cbcbbc"/><rect x="376.40" y="80" width="1.6" height="830" fill="#cbcbbc"/><rect x="387.00" y="80" width="2" height="830" fill="#b9b9a9"/><rect x="398.00" y="80" width="1.6" height="830" fill="#cbcbbc"/><rect x="408.80" y="80" width="1.6" height="830" fill="#cbcbbc"/><rect x="419.60" y="80" width="1.6" height="830" fill="#cbcbbc"/><rect x="430.40" y="80" width="1.6" height="830" fill="#cbcbbc"/><rect x="441.20" y="80" width="1.6" height="830" fill="#cbcbbc"/><rect x="452.00" y="80" width="1.6" height="830" fill="#cbcbbc"/><rect x="462.80" y="80" width="1.6" height="830" fill="#cbcbbc"/><rect x="473.60" y="80" width="1.6" height="830" fill="#cbcbbc"/><rect x="484.40" y="80" width="1.6" height="830" fill="#cbcbbc"/><rect x="495.00" y="80" width="2" height="830" fill="#b9b9a9"/><rect x="506.00" y="80" width="1.6" height="830" fill="#cbcbbc"/><rect x="516.80" y="80" width="1.6" height="830" fill="#cbcbbc"/><rect x="527.60" y="80" width="1.6" height="830" fill="#cbcbbc"/><rect x="538.40" y="80" width="1.6" height="830" fill="#cbcbbc"/><rect x="549.20" y="80" width="1.6" height="830" fill="#cbcbbc"/><rect x="560.00" y="80" width="1.6" height="830" fill="#cbcbbc"/><rect x="570.80" y="80" width="1.6" height="830" fill="#cbcbbc"/><rect x="581.60" y="80" width="1.6" height="830" fill="#cbcbbc"/><rect x="592.40" y="80" width="1.6" height="830" fill="#cbcbbc"/><rect x="603.00" y="80" width="2" height="830" fill="#b9b9a9"/><rect x="614.00" y="80" width="1.6" height="830" fill="#cbcbbc"/><rect x="624.80" y="80" width="1.6" height="830" fill="#cbcbbc"/><rect x="635.60" y="80" width="1.6" height="830" fill="#cbcbbc"/><rect x="646.40" y="80" width="1.6" height="830" fill="#cbcbbc"/><rect x="657.20" y="80" width="1.6" height="830" fill="#cbcbbc"/><rect x="668.00" y="80" width="1.6" height="830" fill="#cbcbbc"/><rect x="678.80" y="80" width="1.6" height="830" fill="#cbcbbc"/><rect x="689.60" y="80" width="1.6" height="830" fill="#cbcbbc"/><rect x="700.40" y="80" width="1.6" height="830" fill="#cbcbbc"/><rect x="711.00" y="80" width="2" height="830" fill="#b9b9a9"/><rect x="722.00" y="80" width="1.6" height="830" fill="#cbcbbc"/><rect x="732.80" y="80" width="1.6" height="830" fill="#cbcbbc"/><rect x="743.60" y="80" width="1.6" height="830" fill="#cbcbbc"/><rect x="754.40" y="80" width="1.6" height="830" fill="#cbcbbc"/><rect x="765.20" y="80" width="1.6" height="830" fill="#cbcbbc"/><rect x="776.00" y="80" width="1.6" height="830" fill="#cbcbbc"/><rect x="786.80" y="80" width="1.6" height="830" fill="#cbcbbc"/><rect x="797.60" y="80" width="1.6" height="830" fill="#cbcbbc"/><rect x="808.40" y="80" width="1.6" height="830" fill="#cbcbbc"/><rect x="819.00" y="80" width="2" height="830" fill="#b9b9a9"/><rect x="830.00" y="80" width="1.6" height="830" fill="#cbcbbc"/><rect x="840.80" y="80" width="1.6" height="830" fill="#cbcbbc"/><rect x="851.60" y="80" width="1.6" height="830" fill="#cbcbbc"/><rect x="862.40" y="80" width="1.6" height="830" fill="#cbcbbc"/><rect x="873.20" y="80" width="1.6" height="830" fill="#cbcbbc"/><rect x="884.00" y="80" width="1.6" height="830" fill="#cbcbbc"/><rect x="894.80" y="80" width="1.6" height="830" fill="#cbcbbc"/><rect x="905.60" y="80" width="1.6" height="830" fill="#cbcbbc"/><rect x="916.40" y="80" width="1.6" height="830" fill="#cbcbbc"/><rect x="927.00" y="80" width="2" height="830" fill="#b9b9a9"/><rect x="938.00" y="80" width="1.6" height="830" fill="#cbcbbc"/><rect x="948.80" y="80" width="1.6" height="830" fill="#cbcbbc"/><rect x="959.60" y="80" width="1.6" height="830" fill="#cbcbbc"/><rect x="970.40" y="80" width="1.6" height="830" fill="#cbcbbc"/><rect x="981.20" y="80" width="1.6" height="830" fill="#cbcbbc"/><rect x="992.00" y="80" width="1.6" height="830" fill="#cbcbbc"/><rect x="1002.80" y="80" width="1.6" height="830" fill="#cbcbbc"/><rect x="1013.60" y="80" width="1.6" height="830" fill="#cbcbbc"/><rect x="1024.40" y="80" width="1.6" height="830" fill="#cbcbbc"/><rect x="1035.00" y="80" width="2" height="830" fill="#b9b9a9"/><rect x="1046.00" y="80" width="1.6" height="830" fill="#cbcbbc"/><rect x="1056.80" y="80" width="1.6" height="830" fill="#cbcbbc"/><rect x="1067.60" y="80" width="1.6" height="830" fill="#cbcbbc"/><rect x="1078.40" y="80" width="1.6" height="830" fill="#cbcbbc"/><rect x="1089.20" y="80" width="1.6" height="830" fill="#cbcbbc"/><rect x="1100.00" y="80" width="1.6" height="830" fill="#cbcbbc"/><rect x="1110.80" y="80" width="1.6" height="830" fill="#cbcbbc"/><rect x="1121.60" y="80" width="1.6" height="830" fill="#cbcbbc"/><rect x="1132.40" y="80" width="1.6" height="830" fill="#cbcbbc"/><rect x="1143.00" y="80" width="2" height="830" fill="#b9b9a9"/><rect x="1154.00" y="80" width="1.6" height="830" fill="#cbcbbc"/><rect x="1164.80" y="80" width="1.6" height="830" fill="#cbcbbc"/><rect x="1175.60" y="80" width="1.6" height="830" fill="#cbcbbc"/><rect x="1186.40" y="80" width="1.6" height="830" fill="#cbcbbc"/><rect x="1197.20" y="80" width="1.6" height="830" fill="#cbcbbc"/><rect x="1208.00" y="80" width="1.6" height="830" fill="#cbcbbc"/><rect x="1218.80" y="80" width="1.6" height="830" fill="#cbcbbc"/><rect x="1229.60" y="80" width="1.6" height="830" fill="#cbcbbc"/><rect x="1240.40" y="80" width="1.6" height="830" fill="#cbcbbc"/><rect x="1251.00" y="80" width="2" height="830" fill="#b9b9a9"/><rect x="1262.00" y="80" width="1.6" height="830" fill="#cbcbbc"/><rect x="150" y="84.80" width="1120" height="1.6" fill="#cbcbbc"/><rect x="150" y="95.60" width="1120" height="1.6" fill="#cbcbbc"/><rect x="150" y="106.40" width="1120" height="1.6" fill="#cbcbbc"/><rect x="150" y="117.20" width="1120" height="1.6" fill="#cbcbbc"/><rect x="150" y="128.00" width="1120" height="1.6" fill="#cbcbbc"/><rect x="150" y="138.80" width="1120" height="1.6" fill="#cbcbbc"/><rect x="150" y="149.60" width="1120" height="1.6" fill="#cbcbbc"/><rect x="150" y="160.40" width="1120" height="1.6" fill="#cbcbbc"/><rect x="150" y="171.00" width="1120" height="2" fill="#b9b9a9"/><rect x="150" y="182.00" width="1120" height="1.6" fill="#cbcbbc"/><rect x="150" y="192.80" width="1120" height="1.6" fill="#cbcbbc"/><rect x="150" y="203.60" width="1120" height="1.6" fill="#cbcbbc"/><rect x="150" y="214.40" width="1120" height="1.6" fill="#cbcbbc"/><rect x="150" y="225.20" width="1120" height="1.6" fill="#cbcbbc"/><rect x="150" y="236.00" width="1120" height="1.6" fill="#cbcbbc"/><rect x="150" y="246.80" width="1120" height="1.6" fill="#cbcbbc"/><rect x="150" y="257.60" width="1120" height="1.6" fill="#cbcbbc"/><rect x="150" y="268.40" width="1120" height="1.6" fill="#cbcbbc"/><rect x="150" y="279.00" width="1120" height="2" fill="#b9b9a9"/><rect x="150" y="290.00" width="1120" height="1.6" fill="#cbcbbc"/><rect x="150" y="300.80" width="1120" height="1.6" fill="#cbcbbc"/><rect x="150" y="311.60" width="1120" height="1.6" fill="#cbcbbc"/><rect x="150" y="322.40" width="1120" height="1.6" fill="#cbcbbc"/><rect x="150" y="333.20" width="1120" height="1.6" fill="#cbcbbc"/><rect x="150" y="344.00" width="1120" height="1.6" fill="#cbcbbc"/><rect x="150" y="354.80" width="1120" height="1.6" fill="#cbcbbc"/><rect x="150" y="365.60" width="1120" height="1.6" fill="#cbcbbc"/><rect x="150" y="376.40" width="1120" height="1.6" fill="#cbcbbc"/><rect x="150" y="387.00" width="1120" height="2" fill="#b9b9a9"/><rect x="150" y="398.00" width="1120" height="1.6" fill="#cbcbbc"/><rect x="150" y="408.80" width="1120" height="1.6" fill="#cbcbbc"/><rect x="150" y="419.60" width="1120" height="1.6" fill="#cbcbbc"/><rect x="150" y="430.40" width="1120" height="1.6" fill="#cbcbbc"/><rect x="150" y="441.20" width="1120" height="1.6" fill="#cbcbbc"/><rect x="150" y="452.00" width="1120" height="1.6" fill="#cbcbbc"/><rect x="150" y="462.80" width="1120" height="1.6" fill="#cbcbbc"/><rect x="150" y="473.60" width="1120" height="1.6" fill="#cbcbbc"/><rect x="150" y="484.40" width="1120" height="1.6" fill="#cbcbbc"/><rect x="150" y="495.00" width="1120" height="2" fill="#b9b9a9"/><rect x="150" y="506.00" width="1120" height="1.6" fill="#cbcbbc"/><rect x="150" y="516.80" width="1120" height="1.6" fill="#cbcbbc"/><rect x="150" y="527.60" width="1120" height="1.6" fill="#cbcbbc"/><rect x="150" y="538.40" width="1120" height="1.6" fill="#cbcbbc"/><rect x="150" y="549.20" width="1120" height="1.6" fill="#cbcbbc"/><rect x="150" y="560.00" width="1120" height="1.6" fill="#cbcbbc"/><rect x="150" y="570.80" width="1120" height="1.6" fill="#cbcbbc"/><rect x="150" y="581.60" width="1120" height="1.6" fill="#cbcbbc"/><rect x="150" y="592.40" width="1120" height="1.6" fill="#cbcbbc"/><rect x="150" y="603.00" width="1120" height="2" fill="#b9b9a9"/><rect x="150" y="614.00" width="1120" height="1.6" fill="#cbcbbc"/><rect x="150" y="624.80" width="1120" height="1.6" fill="#cbcbbc"/><rect x="150" y="635.60" width="1120" height="1.6" fill="#cbcbbc"/><rect x="150" y="646.40" width="1120" height="1.6" fill="#cbcbbc"/><rect x="150" y="657.20" width="1120" height="1.6" fill="#cbcbbc"/><rect x="150" y="668.00" width="1120" height="1.6" fill="#cbcbbc"/><rect x="150" y="678.80" width="1120" height="1.6" fill="#cbcbbc"/><rect x="150" y="689.60" width="1120" height="1.6" fill="#cbcbbc"/><rect x="150" y="700.40" width="1120" height="1.6" fill="#cbcbbc"/><rect x="150" y="711.00" width="1120" height="2" fill="#b9b9a9"/><rect x="150" y="722.00" width="1120" height="1.6" fill="#cbcbbc"/><rect x="150" y="732.80" width="1120" height="1.6" fill="#cbcbbc"/><rect x="150" y="743.60" width="1120" height="1.6" fill="#cbcbbc"/><rect x="150" y="754.40" width="1120" height="1.6" fill="#cbcbbc"/><rect x="150" y="765.20" width="1120" height="1.6" fill="#cbcbbc"/><rect x="150" y="776.00" width="1120" height="1.6" fill="#cbcbbc"/><rect x="150" y="786.80" width="1120" height="1.6" fill="#cbcbbc"/><rect x="150" y="797.60" width="1120" height="1.6" fill="#cbcbbc"/><rect x="150" y="808.40" width="1120" height="1.6" fill="#cbcbbc"/><rect x="150" y="819.00" width="1120" height="2" fill="#b9b9a9"/><rect x="150" y="830.00" width="1120" height="1.6" fill="#cbcbbc"/><rect x="150" y="840.80" width="1120" height="1.6" fill="#cbcbbc"/><rect x="150" y="851.60" width="1120" height="1.6" fill="#cbcbbc"/><rect x="150" y="862.40" width="1120" height="1.6" fill="#cbcbbc"/><rect x="150" y="873.20" width="1120" height="1.6" fill="#cbcbbc"/><rect x="150" y="884.00" width="1120" height="1.6" fill="#cbcbbc"/><rect x="150" y="894.80" width="1120" height="1.6" fill="#cbcbbc"/><rect x="150" y="905.60" width="1120" height="1.6" fill="#cbcbbc"/>
<rect x="172" y="118" width="1080" height="755.6" fill="none" stroke="#58588c" stroke-width="2.2"/>
<path d="M205,355.8 L247.5,355.8" stroke="#3f6a3f" stroke-width="1.9" fill="none"/>
<path d="M301.5,355.8 L486,355.8 L486,463.75" stroke="#3f6a3f" stroke-width="1.9" fill="none"/>
<path d="M205,355.8 L205,559.8 L236,559.8" stroke="#3f6a3f" stroke-width="1.9" fill="none"/>
<path d="M279.7,559.8 L398.8,559.8 L398.8,463.75" stroke="#3f6a3f" stroke-width="1.9" fill="none"/>
<path d="M205,463.75 L207.5,463.75" stroke="#3f6a3f" stroke-width="1.9" fill="none"/>
<path d="M279.5,463.75 L304.5,463.75" stroke="#3f6a3f" stroke-width="1.9" fill="none"/>
<path d="M376.7,463.75 L401.9,463.75" stroke="#3f6a3f" stroke-width="1.9" fill="none"/>
<path d="M473.9,463.75 L596.7,463.75" stroke="#3f6a3f" stroke-width="1.9" fill="none"/>
<path d="M463.8,355.8 L463.8,205 L485,205" stroke="#3f6a3f" stroke-width="1.9" fill="none"/>
<path d="M625.6,355.8 L668,355.8" stroke="#3f6a3f" stroke-width="1.9" fill="none"/>
<path d="M722,355.8 L906,355.8 L906,463.75" stroke="#3f6a3f" stroke-width="1.9" fill="none"/>
<path d="M625.6,355.8 L625.6,559.8 L656.4,559.8" stroke="#3f6a3f" stroke-width="1.9" fill="none"/>
<path d="M700.1,559.8 L808.8,559.8 L808.8,463.75" stroke="#3f6a3f" stroke-width="1.9" fill="none"/>
<path d="M596.7,463.75 L628.7,463.75" stroke="#3f6a3f" stroke-width="1.9" fill="none"/>
<path d="M700.7,463.75 L725.9,463.75" stroke="#3f6a3f" stroke-width="1.9" fill="none"/>
<path d="M797.9,463.75 L823.1,463.75" stroke="#3f6a3f" stroke-width="1.9" fill="none"/>
<path d="M895.1,463.75 L920.3,463.75" stroke="#3f6a3f" stroke-width="1.9" fill="none"/>
<path d="M992.3,463.75 L1013.9,463.75 L1013.9,366.6 L1025,366.6" stroke="#3f6a3f" stroke-width="1.9" fill="none"/>
<path d="M895,355.8 L895,344.2 L701.5,344.2 L701.5,215.7 L712,215.7" stroke="#3f6a3f" stroke-width="1.9" fill="none"/>
<circle cx="205" cy="463.75" r="2.6" fill="#1a3a1a"/>
<circle cx="463.8" cy="355.8" r="2.6" fill="#1a3a1a"/>
<circle cx="398.8" cy="463.75" r="2.6" fill="#1a3a1a"/>
<circle cx="486" cy="463.75" r="2.6" fill="#1a3a1a"/>
<circle cx="625.6" cy="463.75" r="2.6" fill="#1a3a1a"/>
<circle cx="808.8" cy="463.75" r="2.6" fill="#1a3a1a"/>
<circle cx="906" cy="463.75" r="2.6" fill="#1a3a1a"/>
<circle cx="895" cy="355.8" r="2.6" fill="#1a3a1a"/>
<path d="M247.5,355.8 H302.0" stroke="#9a5a52" stroke-width="2"/><rect x="258.5" y="351.8" width="32.7" height="8.3" fill="#cfcfb6" stroke="#8a2c2c" stroke-width="1.5"/><rect x="245.1" y="348.0" width="5" height="4.6" fill="#4040f0"/><rect x="299.3" y="348.0" width="5" height="4.6" fill="#808080"/><text x="258.5" y="347.8" font-size="12.8" fill="#000" font-weight="normal">R1</text><text x="258.5" y="368.40000000000003" font-size="7.2" font-weight="bold" letter-spacing="-0.3">10k</text><text x="258.5" y="379.6" font-size="7.6" fill="#888" letter-spacing="-0.2">&lt;TEXT&gt;</text>
<path d="M668.5,355.8 H723.0" stroke="#9a5a52" stroke-width="2"/><rect x="679.5" y="351.8" width="32.7" height="8.3" fill="#cfcfb6" stroke="#8a2c2c" stroke-width="1.5"/><rect x="666.1" y="348.0" width="5" height="4.6" fill="#808080"/><rect x="720.3" y="348.0" width="5" height="4.6" fill="#f04040"/><text x="679.5" y="347.8" font-size="12.8" fill="#000" font-weight="normal">R2</text><text x="679.5" y="368.40000000000003" font-size="7.2" font-weight="bold" letter-spacing="-0.3">10k</text><text x="679.5" y="379.6" font-size="7.6" fill="#888" letter-spacing="-0.2">&lt;TEXT&gt;</text>
<path d="M236,559.8 H256 M262,559.8 H279.7" stroke="#9a5a52" stroke-width="2"/><path d="M256.1,549.8 V570.8 M261.9,549.8 V570.8" stroke="#9a5a52" stroke-width="1.8"/><rect x="235.2" y="552.0" width="5" height="4.6" fill="#4040f0"/><rect x="278.1" y="552.0" width="5" height="4.6" fill="#4040f0"/><text x="247.6" y="545.8" font-size="12.8" fill="#000" font-weight="normal">C1</text><text x="247.6" y="580.0999999999999" font-size="7.2" font-weight="bold" letter-spacing="-0.3">1n</text><text x="247.6" y="591.0999999999999" font-size="7.6" fill="#888" letter-spacing="-0.2">&lt;TEXT&gt;</text>
<path d="M656.4,559.8 H676.4 M682.4,559.8 H700.1" stroke="#9a5a52" stroke-width="2"/><path d="M676.5,549.8 V570.8 M682.3,549.8 V570.8" stroke="#9a5a52" stroke-width="1.8"/><rect x="655.6" y="552.0" width="5" height="4.6" fill="#808080"/><rect x="698.5" y="552.0" width="5" height="4.6" fill="#808080"/><text x="668.0" y="545.8" font-size="12.8" fill="#000" font-weight="normal">C2</text><text x="668.0" y="580.0999999999999" font-size="7.2" font-weight="bold" letter-spacing="-0.3">4n7</text><text x="668.0" y="591.0999999999999" font-size="7.6" fill="#888" letter-spacing="-0.2">&lt;TEXT&gt;</text>
<path d="M207.5,463.75 H236.5" stroke="#9a5a52" stroke-width="2"/><path d="M265.0,463.75 H279.5" stroke="#9a5a52" stroke-width="2"/><path d="M236.5,448.25 L258.5,463.75 L236.5,479.25 Z" fill="#cfcfb6" stroke="#8a2c2c" stroke-width="1.5"/><circle cx="261.8" cy="463.75" r="3.1" fill="#cfcfb6" stroke="#8a2c2c" stroke-width="1.4"/><text x="236.5" y="443.75" font-size="12.8" fill="#000" font-weight="normal">U1:A</text><text x="225.5" y="461.35" font-size="8.5" text-anchor="end" font-weight="bold">3</text><rect x="228.0" y="456.75" width="5" height="4.6" fill="#4040f0"/><rect x="264.0" y="456.75" width="5" height="4.6" fill="#f04040"/><text x="270.0" y="461.35" font-size="8.5" font-weight="bold">2</text><text x="236.5" y="488.75" font-size="7.2" font-weight="bold" letter-spacing="-0.3">4049</text><text x="236.5" y="499.75" font-size="7.6" fill="#888" letter-spacing="-0.2">&lt;TEXT&gt;</text>
<path d="M304.7,463.75 H333.7" stroke="#9a5a52" stroke-width="2"/><path d="M362.2,463.75 H376.7" stroke="#9a5a52" stroke-width="2"/><path d="M333.7,448.25 L355.7,463.75 L333.7,479.25 Z" fill="#cfcfb6" stroke="#8a2c2c" stroke-width="1.5"/><circle cx="359.0" cy="463.75" r="3.1" fill="#cfcfb6" stroke="#8a2c2c" stroke-width="1.4"/><text x="333.7" y="443.75" font-size="12.8" fill="#000" font-weight="normal">U1:B</text><text x="322.7" y="461.35" font-size="8.5" text-anchor="end" font-weight="bold">5</text><rect x="325.2" y="456.75" width="5" height="4.6" fill="#f04040"/><rect x="361.2" y="456.75" width="5" height="4.6" fill="#4040f0"/><text x="367.2" y="461.35" font-size="8.5" font-weight="bold">4</text><text x="333.7" y="488.75" font-size="7.2" font-weight="bold" letter-spacing="-0.3">4049</text><text x="333.7" y="499.75" font-size="7.6" fill="#888" letter-spacing="-0.2">&lt;TEXT&gt;</text>
<path d="M401.9,463.75 H430.9" stroke="#9a5a52" stroke-width="2"/><path d="M459.4,463.75 H473.9" stroke="#9a5a52" stroke-width="2"/><path d="M430.9,448.25 L452.9,463.75 L430.9,479.25 Z" fill="#cfcfb6" stroke="#8a2c2c" stroke-width="1.5"/><circle cx="456.2" cy="463.75" r="3.1" fill="#cfcfb6" stroke="#8a2c2c" stroke-width="1.4"/><text x="430.9" y="443.75" font-size="12.8" fill="#000" font-weight="normal">U1:C</text><text x="419.9" y="461.35" font-size="8.5" text-anchor="end" font-weight="bold">7</text><rect x="422.4" y="456.75" width="5" height="4.6" fill="#4040f0"/><rect x="458.4" y="456.75" width="5" height="4.6" fill="#808080"/><text x="464.4" y="461.35" font-size="8.5" font-weight="bold">6</text><text x="430.9" y="488.75" font-size="7.2" font-weight="bold" letter-spacing="-0.3">4049</text><text x="430.9" y="499.75" font-size="7.6" fill="#888" letter-spacing="-0.2">&lt;TEXT&gt;</text>
<path d="M628.7,463.75 H657.7" stroke="#9a5a52" stroke-width="2"/><path d="M686.2,463.75 H700.7" stroke="#9a5a52" stroke-width="2"/><path d="M657.7,448.25 L679.7,463.75 L657.7,479.25 Z" fill="#cfcfb6" stroke="#8a2c2c" stroke-width="1.5"/><circle cx="683.0" cy="463.75" r="3.1" fill="#cfcfb6" stroke="#8a2c2c" stroke-width="1.4"/><text x="657.7" y="443.75" font-size="12.8" fill="#000" font-weight="normal">U1:D</text><text x="646.7" y="461.35" font-size="8.5" text-anchor="end" font-weight="bold">9</text><rect x="649.2" y="456.75" width="5" height="4.6" fill="#808080"/><rect x="685.2" y="456.75" width="5" height="4.6" fill="#808080"/><text x="691.2" y="461.35" font-size="8.5" font-weight="bold">10</text><text x="657.7" y="488.75" font-size="7.2" font-weight="bold" letter-spacing="-0.3">4049</text><text x="657.7" y="499.75" font-size="7.6" fill="#888" letter-spacing="-0.2">&lt;TEXT&gt;</text>
<path d="M725.9,463.75 H754.9" stroke="#9a5a52" stroke-width="2"/><path d="M783.4,463.75 H797.9" stroke="#9a5a52" stroke-width="2"/><path d="M754.9,448.25 L776.9,463.75 L754.9,479.25 Z" fill="#cfcfb6" stroke="#8a2c2c" stroke-width="1.5"/><circle cx="780.1999999999999" cy="463.75" r="3.1" fill="#cfcfb6" stroke="#8a2c2c" stroke-width="1.4"/><text x="754.9" y="443.75" font-size="12.8" fill="#000" font-weight="normal">U1:E</text><text x="743.9" y="461.35" font-size="8.5" text-anchor="end" font-weight="bold">11</text><rect x="746.4" y="456.75" width="5" height="4.6" fill="#808080"/><rect x="782.4" y="456.75" width="5" height="4.6" fill="#808080"/><text x="788.4" y="461.35" font-size="8.5" font-weight="bold">12</text><text x="754.9" y="488.75" font-size="7.2" font-weight="bold" letter-spacing="-0.3">4049</text><text x="754.9" y="499.75" font-size="7.6" fill="#888" letter-spacing="-0.2">&lt;TEXT&gt;</text>
<path d="M823.1,463.75 H852.1" stroke="#9a5a52" stroke-width="2"/><path d="M880.6,463.75 H895.1" stroke="#9a5a52" stroke-width="2"/><path d="M852.1,448.25 L874.1,463.75 L852.1,479.25 Z" fill="#cfcfb6" stroke="#8a2c2c" stroke-width="1.5"/><circle cx="877.4" cy="463.75" r="3.1" fill="#cfcfb6" stroke="#8a2c2c" stroke-width="1.4"/><text x="852.1" y="443.75" font-size="12.8" fill="#000" font-weight="normal">U1:F</text><text x="841.1" y="461.35" font-size="8.5" text-anchor="end" font-weight="bold">14</text><rect x="843.6" y="456.75" width="5" height="4.6" fill="#808080"/><rect x="879.6" y="456.75" width="5" height="4.6" fill="#f04040"/><text x="885.6" y="461.35" font-size="8.5" font-weight="bold">15</text><text x="852.1" y="488.75" font-size="7.2" font-weight="bold" letter-spacing="-0.3">4049</text><text x="852.1" y="499.75" font-size="7.6" fill="#888" letter-spacing="-0.2">&lt;TEXT&gt;</text>
<path d="M920.3,463.75 H949.3" stroke="#9a5a52" stroke-width="2"/><path d="M977.8,463.75 H992.3" stroke="#9a5a52" stroke-width="2"/><path d="M949.3,448.25 L971.3,463.75 L949.3,479.25 Z" fill="#cfcfb6" stroke="#8a2c2c" stroke-width="1.5"/><circle cx="974.5999999999999" cy="463.75" r="3.1" fill="#cfcfb6" stroke="#8a2c2c" stroke-width="1.4"/><text x="949.3" y="443.75" font-size="12.8" fill="#000" font-weight="normal">U2:A</text><text x="938.3" y="461.35" font-size="8.5" text-anchor="end" font-weight="bold">3</text><rect x="940.8" y="456.75" width="5" height="4.6" fill="#f04040"/><rect x="976.8" y="456.75" width="5" height="4.6" fill="#4040f0"/><text x="982.8" y="461.35" font-size="8.5" font-weight="bold">2</text><text x="949.3" y="488.75" font-size="7.2" font-weight="bold" letter-spacing="-0.3">4049</text><text x="949.3" y="499.75" font-size="7.6" fill="#888" letter-spacing="-0.2">&lt;TEXT&gt;</text>
<circle cx="711.6" cy="495.6" r="3.6" fill="none" stroke="#3030c0" stroke-width="1.4"/><path d="M705.6,495.6 H717.6 M711.6,489.6 V501.6" stroke="#3030c0" stroke-width="1.2"/>
<path d="M485,204.9 H506.9" stroke="#9a5a52" stroke-width="2"/><rect x="494.2" y="196.9" width="5" height="5" fill="#808080"/><path d="M485,215.70000000000002 H506.9" stroke="#9a5a52" stroke-width="2"/><rect x="494.2" y="207.6" width="5" height="5" fill="#808080"/><path d="M485,225.9 H506.9" stroke="#9a5a52" stroke-width="2"/><rect x="494.2" y="218.3" width="5" height="5" fill="#808080"/><rect x="506.9" y="193.9" width="172.8" height="42.9" fill="#cfcfb6" stroke="#8a2c2c" stroke-width="1.5"/><path d="M506.9,201.4 L510.9,204.9 L506.9,208.4" fill="none" stroke="#8a2c2c" stroke-width="1.5"/><text x="512.9" y="208.1" font-size="8.6" letter-spacing="-0.2">CLK</text><text x="512.9" y="218.9" font-size="8.6" letter-spacing="-0.2">CE</text><text x="512.9" y="229.1" font-size="8.6" letter-spacing="-0.2">RST</text><rect x="538.1" y="199.3" width="138" height="32.1" fill="#0c0000"/><path d="M544.65,203.30 L553.85,203.30" stroke="#f42424" stroke-width="2.1" stroke-linecap="round"/><path d="M554.88,204.46 L553.92,214.15" stroke="#f42424" stroke-width="2.1" stroke-linecap="round"/><path d="M553.68,216.46 L552.72,226.15" stroke="#f42424" stroke-width="2.1" stroke-linecap="round"/><path d="M542.25,227.30 L551.45,227.30" stroke="#f42424" stroke-width="2.1" stroke-linecap="round"/><path d="M542.18,216.46 L541.22,226.15" stroke="#f42424" stroke-width="2.1" stroke-linecap="round"/><path d="M543.38,204.46 L542.42,214.15" stroke="#f42424" stroke-width="2.1" stroke-linecap="round"/><path d="M543.46,215.30 L552.65,215.30" stroke="#3c1010" stroke-width="2.1" stroke-linecap="round"/><path d="M561.75,203.30 L570.95,203.30" stroke="#f42424" stroke-width="2.1" stroke-linecap="round"/><path d="M571.98,204.46 L571.02,214.15" stroke="#f42424" stroke-width="2.1" stroke-linecap="round"/><path d="M570.78,216.46 L569.82,226.15" stroke="#f42424" stroke-width="2.1" stroke-linecap="round"/><path d="M559.36,227.30 L568.55,227.30" stroke="#f42424" stroke-width="2.1" stroke-linecap="round"/><path d="M559.28,216.46 L558.32,226.15" stroke="#f42424" stroke-width="2.1" stroke-linecap="round"/><path d="M560.48,204.46 L559.52,214.15" stroke="#f42424" stroke-width="2.1" stroke-linecap="round"/><path d="M560.56,215.30 L569.75,215.30" stroke="#3c1010" stroke-width="2.1" stroke-linecap="round"/><path d="M578.86,203.30 L588.05,203.30" stroke="#f42424" stroke-width="2.1" stroke-linecap="round"/><path d="M589.08,204.46 L588.12,214.15" stroke="#f42424" stroke-width="2.1" stroke-linecap="round"/><path d="M587.88,216.46 L586.92,226.15" stroke="#f42424" stroke-width="2.1" stroke-linecap="round"/><path d="M576.46,227.30 L585.65,227.30" stroke="#f42424" stroke-width="2.1" stroke-linecap="round"/><path d="M576.38,216.46 L575.42,226.15" stroke="#f42424" stroke-width="2.1" stroke-linecap="round"/><path d="M577.58,204.46 L576.62,214.15" stroke="#f42424" stroke-width="2.1" stroke-linecap="round"/><path d="M577.66,215.30 L586.85,215.30" stroke="#3c1010" stroke-width="2.1" stroke-linecap="round"/><path d="M595.95,203.30 L605.14,203.30" stroke="#f42424" stroke-width="2.1" stroke-linecap="round"/><path d="M606.18,204.46 L605.22,214.15" stroke="#3c1010" stroke-width="2.1" stroke-linecap="round"/><path d="M604.98,216.46 L604.02,226.15" stroke="#f42424" stroke-width="2.1" stroke-linecap="round"/><path d="M593.55,227.30 L602.75,227.30" stroke="#f42424" stroke-width="2.1" stroke-linecap="round"/><path d="M593.48,216.46 L592.52,226.15" stroke="#3c1010" stroke-width="2.1" stroke-linecap="round"/><path d="M594.68,204.46 L593.72,214.15" stroke="#f42424" stroke-width="2.1" stroke-linecap="round"/><path d="M594.75,215.30 L603.95,215.30" stroke="#f42424" stroke-width="2.1" stroke-linecap="round"/><path d="M613.05,203.30 L622.25,203.30" stroke="#f42424" stroke-width="2.1" stroke-linecap="round"/><path d="M623.28,204.46 L622.32,214.15" stroke="#3c1010" stroke-width="2.1" stroke-linecap="round"/><path d="M622.08,216.46 L621.12,226.15" stroke="#f42424" stroke-width="2.1" stroke-linecap="round"/><path d="M610.65,227.30 L619.85,227.30" stroke="#f42424" stroke-width="2.1" stroke-linecap="round"/><path d="M610.58,216.46 L609.62,226.15" stroke="#3c1010" stroke-width="2.1" stroke-linecap="round"/><path d="M611.78,204.46 L610.82,214.15" stroke="#f42424" stroke-width="2.1" stroke-linecap="round"/><path d="M611.86,215.30 L621.05,215.30" stroke="#f42424" stroke-width="2.1" stroke-linecap="round"/><path d="M630.15,203.30 L639.35,203.30" stroke="#f42424" stroke-width="2.1" stroke-linecap="round"/><path d="M640.38,204.46 L639.42,214.15" stroke="#f42424" stroke-width="2.1" stroke-linecap="round"/><path d="M639.18,216.46 L638.22,226.15" stroke="#f42424" stroke-width="2.1" stroke-linecap="round"/><path d="M627.75,227.30 L636.95,227.30" stroke="#f42424" stroke-width="2.1" stroke-linecap="round"/><path d="M627.68,216.46 L626.72,226.15" stroke="#f42424" stroke-width="2.1" stroke-linecap="round"/><path d="M628.88,204.46 L627.92,214.15" stroke="#f42424" stroke-width="2.1" stroke-linecap="round"/><path d="M628.96,215.30 L638.15,215.30" stroke="#f42424" stroke-width="2.1" stroke-linecap="round"/><path d="M647.25,203.30 L656.45,203.30" stroke="#3c1010" stroke-width="2.1" stroke-linecap="round"/><path d="M657.48,204.46 L656.52,214.15" stroke="#f42424" stroke-width="2.1" stroke-linecap="round"/><path d="M656.28,216.46 L655.32,226.15" stroke="#f42424" stroke-width="2.1" stroke-linecap="round"/><path d="M644.86,227.30 L654.05,227.30" stroke="#3c1010" stroke-width="2.1" stroke-linecap="round"/><path d="M644.78,216.46 L643.82,226.15" stroke="#3c1010" stroke-width="2.1" stroke-linecap="round"/><path d="M645.98,204.46 L645.02,214.15" stroke="#3c1010" stroke-width="2.1" stroke-linecap="round"/><path d="M646.06,215.30 L655.25,215.30" stroke="#3c1010" stroke-width="2.1" stroke-linecap="round"/><path d="M664.36,203.30 L673.55,203.30" stroke="#f42424" stroke-width="2.1" stroke-linecap="round"/><path d="M674.58,204.46 L673.62,214.15" stroke="#f42424" stroke-width="2.1" stroke-linecap="round"/><path d="M673.38,216.46 L672.42,226.15" stroke="#f42424" stroke-width="2.1" stroke-linecap="round"/><path d="M661.96,227.30 L671.15,227.30" stroke="#f42424" stroke-width="2.1" stroke-linecap="round"/><path d="M661.88,216.46 L660.92,226.15" stroke="#f42424" stroke-width="2.1" stroke-linecap="round"/><path d="M663.08,204.46 L662.12,214.15" stroke="#f42424" stroke-width="2.1" stroke-linecap="round"/><path d="M663.16,215.30 L672.35,215.30" stroke="#3c1010" stroke-width="2.1" stroke-linecap="round"/>
<path d="M712,216 H733.2" stroke="#9a5a52" stroke-width="2"/><rect x="720.5" y="208.0" width="5" height="5" fill="#f04040"/><path d="M712,226.8 H733.2" stroke="#9a5a52" stroke-width="2"/><rect x="720.5" y="218.7" width="5" height="5" fill="#808080"/><path d="M712,237 H733.2" stroke="#9a5a52" stroke-width="2"/><rect x="720.5" y="229.4" width="5" height="5" fill="#808080"/><rect x="733.2" y="205" width="172.8" height="42.9" fill="#cfcfb6" stroke="#8a2c2c" stroke-width="1.5"/><path d="M733.2,212.5 L737.2,216 L733.2,219.5" fill="none" stroke="#8a2c2c" stroke-width="1.5"/><text x="739.2" y="219.2" font-size="8.6" letter-spacing="-0.2">CLK</text><text x="739.2" y="230.0" font-size="8.6" letter-spacing="-0.2">CE</text><text x="739.2" y="240.2" font-size="8.6" letter-spacing="-0.2">RST</text><rect x="764.4000000000001" y="210.4" width="138" height="32.1" fill="#0c0000"/><path d="M770.96,214.40 L780.15,214.40" stroke="#f42424" stroke-width="2.1" stroke-linecap="round"/><path d="M781.18,215.56 L780.22,225.25" stroke="#f42424" stroke-width="2.1" stroke-linecap="round"/><path d="M779.98,227.56 L779.02,237.25" stroke="#f42424" stroke-width="2.1" stroke-linecap="round"/><path d="M768.56,238.40 L777.75,238.40" stroke="#f42424" stroke-width="2.1" stroke-linecap="round"/><path d="M768.48,227.56 L767.52,237.25" stroke="#f42424" stroke-width="2.1" stroke-linecap="round"/><path d="M769.68,215.56 L768.72,225.25" stroke="#f42424" stroke-width="2.1" stroke-linecap="round"/><path d="M769.76,226.40 L778.95,226.40" stroke="#3c1010" stroke-width="2.1" stroke-linecap="round"/><path d="M788.06,214.40 L797.25,214.40" stroke="#f42424" stroke-width="2.1" stroke-linecap="round"/><path d="M798.28,215.56 L797.32,225.25" stroke="#f42424" stroke-width="2.1" stroke-linecap="round"/><path d="M797.08,227.56 L796.12,237.25" stroke="#f42424" stroke-width="2.1" stroke-linecap="round"/><path d="M785.66,238.40 L794.85,238.40" stroke="#f42424" stroke-width="2.1" stroke-linecap="round"/><path d="M785.58,227.56 L784.62,237.25" stroke="#f42424" stroke-width="2.1" stroke-linecap="round"/><path d="M786.78,215.56 L785.82,225.25" stroke="#f42424" stroke-width="2.1" stroke-linecap="round"/><path d="M786.86,226.40 L796.05,226.40" stroke="#3c1010" stroke-width="2.1" stroke-linecap="round"/><path d="M805.16,214.40 L814.35,214.40" stroke="#f42424" stroke-width="2.1" stroke-linecap="round"/><path d="M815.38,215.56 L814.42,225.25" stroke="#f42424" stroke-width="2.1" stroke-linecap="round"/><path d="M814.18,227.56 L813.22,237.25" stroke="#f42424" stroke-width="2.1" stroke-linecap="round"/><path d="M802.76,238.40 L811.95,238.40" stroke="#f42424" stroke-width="2.1" stroke-linecap="round"/><path d="M802.68,227.56 L801.72,237.25" stroke="#f42424" stroke-width="2.1" stroke-linecap="round"/><path d="M803.88,215.56 L802.92,225.25" stroke="#f42424" stroke-width="2.1" stroke-linecap="round"/><path d="M803.96,226.40 L813.15,226.40" stroke="#3c1010" stroke-width="2.1" stroke-linecap="round"/><path d="M822.25,214.40 L831.45,214.40" stroke="#f42424" stroke-width="2.1" stroke-linecap="round"/><path d="M832.48,215.56 L831.52,225.25" stroke="#3c1010" stroke-width="2.1" stroke-linecap="round"/><path d="M831.28,227.56 L830.32,237.25" stroke="#f42424" stroke-width="2.1" stroke-linecap="round"/><path d="M819.86,238.40 L829.05,238.40" stroke="#f42424" stroke-width="2.1" stroke-linecap="round"/><path d="M819.78,227.56 L818.82,237.25" stroke="#3c1010" stroke-width="2.1" stroke-linecap="round"/><path d="M820.98,215.56 L820.02,225.25" stroke="#f42424" stroke-width="2.1" stroke-linecap="round"/><path d="M821.06,226.40 L830.25,226.40" stroke="#f42424" stroke-width="2.1" stroke-linecap="round"/><path d="M839.36,214.40 L848.55,214.40" stroke="#f42424" stroke-width="2.1" stroke-linecap="round"/><path d="M849.58,215.56 L848.62,225.25" stroke="#3c1010" stroke-width="2.1" stroke-linecap="round"/><path d="M848.38,227.56 L847.42,237.25" stroke="#f42424" stroke-width="2.1" stroke-linecap="round"/><path d="M836.96,238.40 L846.15,238.40" stroke="#f42424" stroke-width="2.1" stroke-linecap="round"/><path d="M836.88,227.56 L835.92,237.25" stroke="#3c1010" stroke-width="2.1" stroke-linecap="round"/><path d="M838.08,215.56 L837.12,225.25" stroke="#f42424" stroke-width="2.1" stroke-linecap="round"/><path d="M838.16,226.40 L847.35,226.40" stroke="#f42424" stroke-width="2.1" stroke-linecap="round"/><path d="M856.46,214.40 L865.65,214.40" stroke="#f42424" stroke-width="2.1" stroke-linecap="round"/><path d="M866.68,215.56 L865.72,225.25" stroke="#f42424" stroke-width="2.1" stroke-linecap="round"/><path d="M865.48,227.56 L864.52,237.25" stroke="#f42424" stroke-width="2.1" stroke-linecap="round"/><path d="M854.06,238.40 L863.25,238.40" stroke="#f42424" stroke-width="2.1" stroke-linecap="round"/><path d="M853.98,227.56 L853.02,237.25" stroke="#f42424" stroke-width="2.1" stroke-linecap="round"/><path d="M855.18,215.56 L854.22,225.25" stroke="#f42424" stroke-width="2.1" stroke-linecap="round"/><path d="M855.26,226.40 L864.45,226.40" stroke="#f42424" stroke-width="2.1" stroke-linecap="round"/><path d="M873.56,214.40 L882.75,214.40" stroke="#3c1010" stroke-width="2.1" stroke-linecap="round"/><path d="M883.78,215.56 L882.82,225.25" stroke="#f42424" stroke-width="2.1" stroke-linecap="round"/><path d="M882.58,227.56 L881.62,237.25" stroke="#f42424" stroke-width="2.1" stroke-linecap="round"/><path d="M871.16,238.40 L880.35,238.40" stroke="#3c1010" stroke-width="2.1" stroke-linecap="round"/><path d="M871.08,227.56 L870.12,237.25" stroke="#3c1010" stroke-width="2.1" stroke-linecap="round"/><path d="M872.28,215.56 L871.32,225.25" stroke="#3c1010" stroke-width="2.1" stroke-linecap="round"/><path d="M872.36,226.40 L881.55,226.40" stroke="#3c1010" stroke-width="2.1" stroke-linecap="round"/><path d="M890.66,214.40 L899.85,214.40" stroke="#3c1010" stroke-width="2.1" stroke-linecap="round"/><path d="M900.88,215.56 L899.92,225.25" stroke="#f42424" stroke-width="2.1" stroke-linecap="round"/><path d="M899.68,227.56 L898.72,237.25" stroke="#f42424" stroke-width="2.1" stroke-linecap="round"/><path d="M888.26,238.40 L897.45,238.40" stroke="#3c1010" stroke-width="2.1" stroke-linecap="round"/><path d="M888.18,227.56 L887.22,237.25" stroke="#3c1010" stroke-width="2.1" stroke-linecap="round"/><path d="M889.38,215.56 L888.42,225.25" stroke="#3c1010" stroke-width="2.1" stroke-linecap="round"/><path d="M889.46,226.40 L898.65,226.40" stroke="#3c1010" stroke-width="2.1" stroke-linecap="round"/>
<path d="M1025,366.6 H1046" stroke="#9a5a52" stroke-width="2"/><path d="M1025,387.8 H1046" stroke="#9a5a52" stroke-width="2"/><path d="M1025,409.6 H1046" stroke="#9a5a52" stroke-width="2"/><path d="M1025,432 H1046" stroke="#9a5a52" stroke-width="2"/><rect x="1045.7" y="356" width="98.5" height="85.8" fill="#cfcfb6" stroke="#8a2c2c" stroke-width="1.5"/><rect x="1033" y="358.5" width="5" height="4.6" fill="#4040f0"/><text x="1051" y="369.90000000000003" font-size="8.5" font-weight="bold">A</text><text x="1051" y="391.1" font-size="8.5" font-weight="bold">B</text><text x="1051" y="412.90000000000003" font-size="8.5" font-weight="bold">C</text><text x="1051" y="435.3" font-size="8.5" font-weight="bold">D</text><rect x="1072.3" y="371.5" width="61" height="54.5" fill="#0a3a0a"/><path d="M1075.6,371.5 V426" stroke="#1a5a1a" stroke-width="0.6"/><path d="M1078.9,371.5 V426" stroke="#1a5a1a" stroke-width="0.6"/><path d="M1082.2,371.5 V426" stroke="#1a5a1a" stroke-width="0.6"/><path d="M1085.5,371.5 V426" stroke="#1a5a1a" stroke-width="0.6"/><path d="M1088.8,371.5 V426" stroke="#1a5a1a" stroke-width="0.6"/><path d="M1092.1,371.5 V426" stroke="#1a5a1a" stroke-width="0.6"/><path d="M1095.4,371.5 V426" stroke="#1a5a1a" stroke-width="0.6"/><path d="M1098.7,371.5 V426" stroke="#1a5a1a" stroke-width="0.6"/><path d="M1102.0,371.5 V426" stroke="#1a5a1a" stroke-width="0.6"/><path d="M1105.3,371.5 V426" stroke="#1a5a1a" stroke-width="0.6"/><path d="M1108.6,371.5 V426" stroke="#1a5a1a" stroke-width="0.6"/><path d="M1111.9,371.5 V426" stroke="#1a5a1a" stroke-width="0.6"/><path d="M1115.2,371.5 V426" stroke="#1a5a1a" stroke-width="0.6"/><path d="M1118.5,371.5 V426" stroke="#1a5a1a" stroke-width="0.6"/><path d="M1121.8,371.5 V426" stroke="#1a5a1a" stroke-width="0.6"/><path d="M1125.1,371.5 V426" stroke="#1a5a1a" stroke-width="0.6"/><path d="M1128.4,371.5 V426" stroke="#1a5a1a" stroke-width="0.6"/><path d="M1131.7,371.5 V426" stroke="#1a5a1a" stroke-width="0.6"/><path d="M1072.3,374.8 H1133.3" stroke="#1a5a1a" stroke-width="0.6"/><path d="M1072.3,378.1 H1133.3" stroke="#1a5a1a" stroke-width="0.6"/><path d="M1072.3,381.4 H1133.3" stroke="#1a5a1a" stroke-width="0.6"/><path d="M1072.3,384.7 H1133.3" stroke="#1a5a1a" stroke-width="0.6"/><path d="M1072.3,388.0 H1133.3" stroke="#1a5a1a" stroke-width="0.6"/><path d="M1072.3,391.3 H1133.3" stroke="#1a5a1a" stroke-width="0.6"/><path d="M1072.3,394.6 H1133.3" stroke="#1a5a1a" stroke-width="0.6"/><path d="M1072.3,397.9 H1133.3" stroke="#1a5a1a" stroke-width="0.6"/><path d="M1072.3,401.2 H1133.3" stroke="#1a5a1a" stroke-width="0.6"/><path d="M1072.3,404.5 H1133.3" stroke="#1a5a1a" stroke-width="0.6"/><path d="M1072.3,407.8 H1133.3" stroke="#1a5a1a" stroke-width="0.6"/><path d="M1072.3,411.1 H1133.3" stroke="#1a5a1a" stroke-width="0.6"/><path d="M1072.3,414.4 H1133.3" stroke="#1a5a1a" stroke-width="0.6"/><path d="M1072.3,417.7 H1133.3" stroke="#1a5a1a" stroke-width="0.6"/><path d="M1072.3,421.0 H1133.3" stroke="#1a5a1a" stroke-width="0.6"/><path d="M1072.3,424.3 H1133.3" stroke="#1a5a1a" stroke-width="0.6"/><path d="M1073,381.5 H1076 V376.5 H1081 V381.5 H1086 V376.5 H1091 V381.5 H1096 V376.5 H1101 V381.5 H1106 V376.5 H1111 V381.5 H1116 V376.5 H1121 V381.5 H1126 V376.5 H1131 V381.5 H1133" stroke="#c8c820" stroke-width="1.6" fill="none"/><polyline points="1073.0,393.0 1073.5,393.8 1074.0,394.5 1074.5,395.0 1075.0,395.4 1075.5,395.5 1076.0,395.4 1076.5,395.0 1077.0,394.5 1077.5,393.8 1078.0,393.0 1078.5,392.2 1079.0,391.5 1079.5,391.0 1080.0,390.6 1080.5,390.5 1081.0,390.6 1081.5,391.0 1082.0,391.5 1082.5,392.2 1083.0,393.0 1083.5,393.8 1084.0,394.5 1084.5,395.0 1085.0,395.4 1085.5,395.5 1086.0,395.4 1086.5,395.0 1087.0,394.5 1087.5,393.8 1088.0,393.0 1088.5,392.2 1089.0,391.5 1089.5,391.0 1090.0,390.6 1090.5,390.5 1091.0,390.6 1091.5,391.0 1092.0,391.5 1092.5,392.2 1093.0,393.0 1093.5,393.8 1094.0,394.5 1094.5,395.0 1095.0,395.4 1095.5,395.5 1096.0,395.4 1096.5,395.0 1097.0,394.5 1097.5,393.8 1098.0,393.0 1098.5,392.2 1099.0,391.5 1099.5,391.0 1100.0,390.6 1100.5,390.5 1101.0,390.6 1101.5,391.0 1102.0,391.5 1102.5,392.2 1103.0,393.0 1103.5,393.8 1104.0,394.5 1104.5,395.0 1105.0,395.4 1105.5,395.5 1106.0,395.4 1106.5,395.0 1107.0,394.5 1107.5,393.8 1108.0,393.0 1108.5,392.2 1109.0,391.5 1109.5,391.0 1110.0,390.6 1110.5,390.5 1111.0,390.6 1111.5,391.0 1112.0,391.5 1112.5,392.2 1113.0,393.0 1113.5,393.8 1114.0,394.5 1114.5,395.0 1115.0,395.4 1115.5,395.5 1116.0,395.4 1116.5,395.0 1117.0,394.5 1117.5,393.8 1118.0,393.0 1118.5,392.2 1119.0,391.5 1119.5,391.0 1120.0,390.6 1120.5,390.5 1121.0,390.6 1121.5,391.0 1122.0,391.5 1122.5,392.2 1123.0,393.0 1123.5,393.8 1124.0,394.5 1124.5,395.0 1125.0,395.4 1125.5,395.5 1126.0,395.4 1126.5,395.0 1127.0,394.5 1127.5,393.8 1128.0,393.0 1128.5,392.2 1129.0,391.5 1129.5,391.0 1130.0,390.6 1130.5,390.5 1131.0,390.6 1131.5,391.0 1132.0,391.5 1132.5,392.2 1133.0,393.0" stroke="#2030d0" stroke-width="1.6" fill="none"/><path d="M1073,409.5 H1076 V404.5 H1081 V409.5 H1086 V404.5 H1091 V409.5 H1096 V404.5 H1101 V409.5 H1106 V404.5 H1111 V409.5 H1116 V404.5 H1121 V409.5 H1126 V404.5 H1131 V409.5 H1133" stroke="#c03010" stroke-width="1.6" fill="none"/><polyline points="1073.0,419.0 1073.5,419.8 1074.0,420.5 1074.5,421.0 1075.0,421.4 1075.5,421.5 1076.0,421.4 1076.5,421.0 1077.0,420.5 1077.5,419.8 1078.0,419.0 1078.5,418.2 1079.0,417.5 1079.5,417.0 1080.0,416.6 1080.5,416.5 1081.0,416.6 1081.5,417.0 1082.0,417.5 1082.5,418.2 1083.0,419.0 1083.5,419.8 1084.0,420.5 1084.5,421.0 1085.0,421.4 1085.5,421.5 1086.0,421.4 1086.5,421.0 1087.0,420.5 1087.5,419.8 1088.0,419.0 1088.5,418.2 1089.0,417.5 1089.5,417.0 1090.0,416.6 1090.5,416.5 1091.0,416.6 1091.5,417.0 1092.0,417.5 1092.5,418.2 1093.0,419.0 1093.5,419.8 1094.0,420.5 1094.5,421.0 1095.0,421.4 1095.5,421.5 1096.0,421.4 1096.5,421.0 1097.0,420.5 1097.5,419.8 1098.0,419.0 1098.5,418.2 1099.0,417.5 1099.5,417.0 1100.0,416.6 1100.5,416.5 1101.0,416.6 1101.5,417.0 1102.0,417.5 1102.5,418.2 1103.0,419.0 1103.5,419.8 1104.0,420.5 1104.5,421.0 1105.0,421.4 1105.5,421.5 1106.0,421.4 1106.5,421.0 1107.0,420.5 1107.5,419.8 1108.0,419.0 1108.5,418.2 1109.0,417.5 1109.5,417.0 1110.0,416.6 1110.5,416.5 1111.0,416.6 1111.5,417.0 1112.0,417.5 1112.5,418.2 1113.0,419.0 1113.5,419.8 1114.0,420.5 1114.5,421.0 1115.0,421.4 1115.5,421.5 1116.0,421.4 1116.5,421.0 1117.0,420.5 1117.5,419.8 1118.0,419.0 1118.5,418.2 1119.0,417.5 1119.5,417.0 1120.0,416.6 1120.5,416.5 1121.0,416.6 1121.5,417.0 1122.0,417.5 1122.5,418.2 1123.0,419.0 1123.5,419.8 1124.0,420.5 1124.5,421.0 1125.0,421.4 1125.5,421.5 1126.0,421.4 1126.5,421.0 1127.0,420.5 1127.5,419.8 1128.0,419.0 1128.5,418.2 1129.0,417.5 1129.5,417.0 1130.0,416.6 1130.5,416.5 1131.0,416.6 1131.5,417.0 1132.0,417.5 1132.5,418.2 1133.0,419.0" stroke="#30d030" stroke-width="1.6" fill="none"/>
</svg></div>
<div class="a" style="left:935px;top:121px;width:290px;height:184px;background:#3a3a3a;border:1px solid #141414;box-shadow:inset 0 0 0 1px #555"></div>
<div class="a" style="left:936px;top:122px;width:288px;height:21px;background:linear-gradient(180deg,#2a2a2a 0%,#303030 40%,#474747 100%)"></div>
<div class="a" style="left:938px;top:126px;font-size:11.5px;font-weight:bold;color:#fff;white-space:nowrap;letter-spacing:0.1px">VSM Counter Timer</div>
<div class="a" style="left:1207px;top:127px;width:12px;height:12px;background:#3c3c3c;border:1px solid #5a5a5a"></div>
<svg style="left:1209px;top:129px" width="9" height="9"><path d="M1 1L8 8M8 1L1 8" stroke="#fff" stroke-width="2.2"/></svg>
<div class="a" style="left:938.5px;top:143px;width:282.5px;height:158.5px;background:#d8d8d8"></div>
<svg style="left:0;top:0" width="1280" height="960"><rect x="947" y="152" width="264" height="48" fill="#380000"/><path d="M980,152 V200" stroke="#4a0606" stroke-width="1"/><path d="M1013,152 V200" stroke="#4a0606" stroke-width="1"/><path d="M1046,152 V200" stroke="#4a0606" stroke-width="1"/><path d="M1079,152 V200" stroke="#4a0606" stroke-width="1"/><path d="M1112,152 V200" stroke="#4a0606" stroke-width="1"/><path d="M1145,152 V200" stroke="#4a0606" stroke-width="1"/><path d="M1178,152 V200" stroke="#4a0606" stroke-width="1"/><path d="M959.14,159.00 L973.62,159.00" stroke="#ff1414" stroke-width="3.2" stroke-linecap="round"/><path d="M975.26,160.76 L974.31,174.24" stroke="#ff1414" stroke-width="3.2" stroke-linecap="round"/><path d="M974.07,177.76 L973.12,191.24" stroke="#ff1414" stroke-width="3.2" stroke-linecap="round"/><path d="M956.76,193.00 L971.24,193.00" stroke="#ff1414" stroke-width="3.2" stroke-linecap="round"/><path d="M956.07,177.76 L955.12,191.24" stroke="#ff1414" stroke-width="3.2" stroke-linecap="round"/><path d="M957.26,160.76 L956.31,174.24" stroke="#ff1414" stroke-width="3.2" stroke-linecap="round"/><path d="M957.95,176.00 L972.43,176.00" stroke="#5a0a0a" stroke-width="3.2" stroke-linecap="round"/><path d="M992.14,159.00 L1006.62,159.00" stroke="#ff1414" stroke-width="3.2" stroke-linecap="round"/><path d="M1008.26,160.76 L1007.31,174.24" stroke="#ff1414" stroke-width="3.2" stroke-linecap="round"/><path d="M1007.07,177.76 L1006.12,191.24" stroke="#ff1414" stroke-width="3.2" stroke-linecap="round"/><path d="M989.76,193.00 L1004.24,193.00" stroke="#ff1414" stroke-width="3.2" stroke-linecap="round"/><path d="M989.07,177.76 L988.12,191.24" stroke="#ff1414" stroke-width="3.2" stroke-linecap="round"/><path d="M990.26,160.76 L989.31,174.24" stroke="#ff1414" stroke-width="3.2" stroke-linecap="round"/><path d="M990.95,176.00 L1005.43,176.00" stroke="#5a0a0a" stroke-width="3.2" stroke-linecap="round"/><path d="M1025.14,159.00 L1039.62,159.00" stroke="#ff1414" stroke-width="3.2" stroke-linecap="round"/><path d="M1041.26,160.76 L1040.31,174.24" stroke="#ff1414" stroke-width="3.2" stroke-linecap="round"/><path d="M1040.07,177.76 L1039.12,191.24" stroke="#ff1414" stroke-width="3.2" stroke-linecap="round"/><path d="M1022.76,193.00 L1037.24,193.00" stroke="#ff1414" stroke-width="3.2" stroke-linecap="round"/><path d="M1022.07,177.76 L1021.12,191.24" stroke="#ff1414" stroke-width="3.2" stroke-linecap="round"/><path d="M1023.26,160.76 L1022.31,174.24" stroke="#ff1414" stroke-width="3.2" stroke-linecap="round"/><path d="M1023.95,176.00 L1038.43,176.00" stroke="#5a0a0a" stroke-width="3.2" stroke-linecap="round"/><path d="M1058.14,159.00 L1072.62,159.00" stroke="#ff1414" stroke-width="3.2" stroke-linecap="round"/><path d="M1074.26,160.76 L1073.31,174.24" stroke="#5a0a0a" stroke-width="3.2" stroke-linecap="round"/><path d="M1073.07,177.76 L1072.12,191.24" stroke="#ff1414" stroke-width="3.2" stroke-linecap="round"/><path d="M1055.76,193.00 L1070.24,193.00" stroke="#ff1414" stroke-width="3.2" stroke-linecap="round"/><path d="M1055.07,177.76 L1054.12,191.24" stroke="#5a0a0a" stroke-width="3.2" stroke-linecap="round"/><path d="M1056.26,160.76 L1055.31,174.24" stroke="#ff1414" stroke-width="3.2" stroke-linecap="round"/><path d="M1056.95,176.00 L1071.43,176.00" stroke="#ff1414" stroke-width="3.2" stroke-linecap="round"/><path d="M1091.14,159.00 L1105.62,159.00" stroke="#ff1414" stroke-width="3.2" stroke-linecap="round"/><path d="M1107.26,160.76 L1106.31,174.24" stroke="#5a0a0a" stroke-width="3.2" stroke-linecap="round"/><path d="M1106.07,177.76 L1105.12,191.24" stroke="#ff1414" stroke-width="3.2" stroke-linecap="round"/><path d="M1088.76,193.00 L1103.24,193.00" stroke="#ff1414" stroke-width="3.2" stroke-linecap="round"/><path d="M1088.07,177.76 L1087.12,191.24" stroke="#5a0a0a" stroke-width="3.2" stroke-linecap="round"/><path d="M1089.26,160.76 L1088.31,174.24" stroke="#ff1414" stroke-width="3.2" stroke-linecap="round"/><path d="M1089.95,176.00 L1104.43,176.00" stroke="#ff1414" stroke-width="3.2" stroke-linecap="round"/><path d="M1124.14,159.00 L1138.62,159.00" stroke="#ff1414" stroke-width="3.2" stroke-linecap="round"/><path d="M1140.26,160.76 L1139.31,174.24" stroke="#ff1414" stroke-width="3.2" stroke-linecap="round"/><path d="M1139.07,177.76 L1138.12,191.24" stroke="#ff1414" stroke-width="3.2" stroke-linecap="round"/><path d="M1121.76,193.00 L1136.24,193.00" stroke="#ff1414" stroke-width="3.2" stroke-linecap="round"/><path d="M1121.07,177.76 L1120.12,191.24" stroke="#ff1414" stroke-width="3.2" stroke-linecap="round"/><path d="M1122.26,160.76 L1121.31,174.24" stroke="#ff1414" stroke-width="3.2" stroke-linecap="round"/><path d="M1122.95,176.00 L1137.43,176.00" stroke="#ff1414" stroke-width="3.2" stroke-linecap="round"/><path d="M1157.14,159.00 L1171.62,159.00" stroke="#5a0a0a" stroke-width="3.2" stroke-linecap="round"/><path d="M1173.26,160.76 L1172.31,174.24" stroke="#ff1414" stroke-width="3.2" stroke-linecap="round"/><path d="M1172.07,177.76 L1171.12,191.24" stroke="#ff1414" stroke-width="3.2" stroke-linecap="round"/><path d="M1154.76,193.00 L1169.24,193.00" stroke="#5a0a0a" stroke-width="3.2" stroke-linecap="round"/><path d="M1154.07,177.76 L1153.12,191.24" stroke="#5a0a0a" stroke-width="3.2" stroke-linecap="round"/><path d="M1155.26,160.76 L1154.31,174.24" stroke="#5a0a0a" stroke-width="3.2" stroke-linecap="round"/><path d="M1155.95,176.00 L1170.43,176.00" stroke="#5a0a0a" stroke-width="3.2" stroke-linecap="round"/><path d="M1190.14,159.00 L1204.62,159.00" stroke="#5a0a0a" stroke-width="3.2" stroke-linecap="round"/><path d="M1206.26,160.76 L1205.31,174.24" stroke="#ff1414" stroke-width="3.2" stroke-linecap="round"/><path d="M1205.07,177.76 L1204.12,191.24" stroke="#ff1414" stroke-width="3.2" stroke-linecap="round"/><path d="M1187.76,193.00 L1202.24,193.00" stroke="#5a0a0a" stroke-width="3.2" stroke-linecap="round"/><path d="M1187.07,177.76 L1186.12,191.24" stroke="#5a0a0a" stroke-width="3.2" stroke-linecap="round"/><path d="M1188.26,160.76 L1187.31,174.24" stroke="#5a0a0a" stroke-width="3.2" stroke-linecap="round"/><path d="M1188.95,176.00 L1203.43,176.00" stroke="#5a0a0a" stroke-width="3.2" stroke-linecap="round"/></svg>
<div class="a" style="left:946.5px;top:207px;font-size:8.6px;font-weight:bold;color:#141414;white-space:nowrap;letter-spacing:-0.3px;transform:scaleX(0.86);transform-origin:0 0">RESET POLARITY</div>
<div class="a" style="left:1062px;top:207px;font-size:8.6px;font-weight:bold;color:#141414;white-space:nowrap;letter-spacing:-0.3px;transform:scaleX(0.86);transform-origin:0 0">MANUAL RESET</div>
<div class="a" style="left:946.5px;top:256px;font-size:8.6px;font-weight:bold;color:#141414;white-space:nowrap;letter-spacing:-0.3px;transform:scaleX(0.86);transform-origin:0 0">GATE POLARITY</div>
<div class="a" style="left:1076.5px;top:256px;font-size:8.6px;font-weight:bold;color:#141414;white-space:nowrap;letter-spacing:-0.3px;transform:scaleX(0.86);transform-origin:0 0">MODE</div>
<div class="a" style="left:949.9px;top:221.5px;width:7px;height:7px;border-radius:50%;background:radial-gradient(circle at 40% 35%,#b0ffb0,#30d030 60%,#208020)"></div>
<div class="a" style="left:949.9px;top:233.8px;width:7px;height:7px;border-radius:50%;background:radial-gradient(circle at 40% 35%,#408040,#104010 60%,#082008)"></div>
<div class="a" style="left:949.9px;top:269.7px;width:7px;height:7px;border-radius:50%;background:radial-gradient(circle at 40% 35%,#b0ffb0,#30d030 60%,#208020)"></div>
<div class="a" style="left:949.9px;top:281.4px;width:7px;height:7px;border-radius:50%;background:radial-gradient(circle at 40% 35%,#408040,#104010 60%,#082008)"></div>
<svg style="left:0;top:0" width="1280" height="960"><path d="M961,229 H966 V222 H971 M961,234 H966 V241 H971" stroke="#111" stroke-width="1.4" fill="none"/><path d="M960.5,275.5 H964 V270.8 H969.8 V275.5 H973.4 M960.5,282.6 H964 V288.4 H969.8 V282.6 H973.4" stroke="#111" stroke-width="1.4" fill="none"/><rect x="1010" y="229" width="56" height="5.5" fill="#0a0a0a"/><path d="M1107,279.5 H1137.5 M1134.5,246 V279.5 M1134.5,246 H1138 M1134.5,257.5 H1138 M1134.5,269 H1138" stroke="#111" stroke-width="1.4" fill="none"/></svg>
<div class="a" style="left:979.5px;top:222px;width:20px;height:20px;background:#7a7a7a;border:1px solid #222;box-shadow:inset 1px 1px 0 #9a9a9a"></div>
<div class="a" style="left:1078px;top:222px;width:20px;height:20px;background:#7a7a7a;border:1px solid #222;box-shadow:inset 1px 1px 0 #9a9a9a"></div>
<div class="a" style="left:979.5px;top:270px;width:20px;height:20px;background:#7a7a7a;border:1px solid #222;box-shadow:inset 1px 1px 0 #9a9a9a"></div>
<div class="a" style="left:1078px;top:270px;width:20px;height:20px;background:#7a7a7a;border:1px solid #222;box-shadow:inset 1px 1px 0 #9a9a9a"></div>
<div class="a" style="left:1145.6px;top:241.5px;width:7px;height:7px;border-radius:50%;background:radial-gradient(circle at 40% 35%,#408040,#104010 60%,#082008)"></div>
<div class="a" style="left:1155.5px;top:239.5px;font-size:7.6px;font-weight:bold;font-style:italic;color:#141414;white-space:nowrap;letter-spacing:-0.3px">TIME (secs)</div>
<div class="a" style="left:1145.6px;top:253.60000000000002px;width:7px;height:7px;border-radius:50%;background:radial-gradient(circle at 40% 35%,#408040,#104010 60%,#082008)"></div>
<div class="a" style="left:1155.5px;top:251.60000000000002px;font-size:7.6px;font-weight:bold;font-style:italic;color:#141414;white-space:nowrap;letter-spacing:-0.3px">TIME (hms)</div>
<div class="a" style="left:1145.6px;top:265.7px;width:7px;height:7px;border-radius:50%;background:radial-gradient(circle at 40% 35%,#b0ffb0,#30d030 60%,#208020)"></div>
<div class="a" style="left:1155.5px;top:263.7px;font-size:7.6px;font-weight:bold;font-style:italic;color:#141414;white-space:nowrap;letter-spacing:-0.3px">FREQUENCY</div>
<div class="a" style="left:1145.6px;top:277.8px;width:7px;height:7px;border-radius:50%;background:radial-gradient(circle at 40% 35%,#408040,#104010 60%,#082008)"></div>
<div class="a" style="left:1155.5px;top:275.8px;font-size:7.6px;font-weight:bold;font-style:italic;color:#141414;white-space:nowrap;letter-spacing:-0.3px">COUNT</div>
<svg style="left:0;top:0" width="1280" height="960" font-family="Liberation Sans">
<defs>
<linearGradient id="tgrad" x1="0" y1="0" x2="0" y2="1"><stop offset="0" stop-color="#6c6c6c"/><stop offset="0.29" stop-color="#5a5a5a"/><stop offset="0.3" stop-color="#3e3e3e"/><stop offset="1" stop-color="#2c2c2c"/></linearGradient>
<linearGradient id="vtrack" x1="0" y1="0" x2="0" y2="1"><stop offset="0" stop-color="#4a4a4a"/><stop offset="0.5" stop-color="#ffffff"/><stop offset="1" stop-color="#4a4a4a"/></linearGradient>
<linearGradient id="htrack" x1="0" y1="0" x2="1" y2="0"><stop offset="0" stop-color="#3a3a3a"/><stop offset="0.5" stop-color="#ffffff"/><stop offset="1" stop-color="#3a3a3a"/></linearGradient>
<radialGradient id="btn" cx="0.35" cy="0.3" r="0.8"><stop offset="0" stop-color="#b8b8b8"/><stop offset="0.6" stop-color="#6a6a6a"/><stop offset="1" stop-color="#2a2a2a"/></radialGradient>
<radialGradient id="btnp" cx="0.35" cy="0.3" r="0.8"><stop offset="0" stop-color="#ffffff"/><stop offset="0.6" stop-color="#f0b0b8"/><stop offset="1" stop-color="#d08890"/></radialGradient>
<linearGradient id="knob" x1="0.15" y1="0.1" x2="0.85" y2="0.95"><stop offset="0" stop-color="#f4f4f4"/><stop offset="0.5" stop-color="#b4b4b4"/><stop offset="1" stop-color="#5a5a5a"/></linearGradient>
<linearGradient id="knobi" x1="0" y1="0" x2="1" y2="1"><stop offset="0" stop-color="#6a6a6a"/><stop offset="0.42" stop-color="#c8c8c8"/><stop offset="0.5" stop-color="#ffffff"/><stop offset="0.58" stop-color="#c0c0c0"/><stop offset="1" stop-color="#5a5a5a"/></linearGradient>
</defs>
<rect x="393" y="586" width="694" height="374" fill="#2a2a2a" stroke="#141414" stroke-width="1"/>
<rect x="394" y="587" width="692" height="19" fill="url(#tgrad)"/>
<text x="396" y="602" font-size="11.5" font-weight="bold" fill="#fff">Digital Oscilloscope</text>
<rect x="1070" y="590.5" width="12.5" height="12.5" fill="#3a3a3a" stroke="#5a5a5a"/>
<path d="M1073,593.5 L1080,600.5 M1080,593.5 L1073,600.5" stroke="#fff" stroke-width="2.2"/>
<rect x="394" y="607" width="692" height="1.3" fill="#e8e8e8"/><rect x="398" y="609" width="402" height="1" fill="#b8c8b8"/>
<rect x="396" y="607.5" width="1.2" height="353" fill="#d8d8d8"/>
<rect x="398.4" y="609.4" width="401.6" height="351" fill="#000"/>
<rect x="398.9" y="609.4" width="1" height="351" fill="#175e22"/><rect x="418.9" y="609.4" width="1" height="351" fill="#175e22"/><rect x="438.9" y="609.4" width="1" height="351" fill="#175e22"/><rect x="458.9" y="609.4" width="1" height="351" fill="#175e22"/><rect x="478.9" y="609.4" width="1" height="351" fill="#175e22"/><rect x="498.9" y="609.4" width="1" height="351" fill="#175e22"/><rect x="518.9" y="609.4" width="1" height="351" fill="#175e22"/><rect x="538.9" y="609.4" width="1" height="351" fill="#175e22"/><rect x="558.9" y="609.4" width="1" height="351" fill="#175e22"/><rect x="578.9" y="609.4" width="1" height="351" fill="#175e22"/><rect x="598.9" y="609.4" width="1" height="351" fill="#175e22"/><rect x="618.9" y="609.4" width="1" height="351" fill="#175e22"/><rect x="638.9" y="609.4" width="1" height="351" fill="#175e22"/><rect x="658.9" y="609.4" width="1" height="351" fill="#175e22"/><rect x="678.9" y="609.4" width="1" height="351" fill="#175e22"/><rect x="698.9" y="609.4" width="1" height="351" fill="#175e22"/><rect x="718.9" y="609.4" width="1" height="351" fill="#175e22"/><rect x="738.9" y="609.4" width="1" height="351" fill="#175e22"/><rect x="758.9" y="609.4" width="1" height="351" fill="#175e22"/><rect x="778.9" y="609.4" width="1" height="351" fill="#175e22"/><rect x="798.9" y="609.4" width="1" height="351" fill="#175e22"/><rect x="398.4" y="609.8" width="401.6" height="1" fill="#175e22"/><rect x="398.4" y="629.8" width="401.6" height="1" fill="#175e22"/><rect x="398.4" y="649.8" width="401.6" height="1" fill="#175e22"/><rect x="398.4" y="669.8" width="401.6" height="1" fill="#175e22"/><rect x="398.4" y="689.8" width="401.6" height="1" fill="#175e22"/><rect x="398.4" y="709.8" width="401.6" height="1" fill="#175e22"/><rect x="398.4" y="729.8" width="401.6" height="1" fill="#175e22"/><rect x="398.4" y="749.8" width="401.6" height="1" fill="#175e22"/><rect x="398.4" y="769.8" width="401.6" height="1" fill="#175e22"/><rect x="398.4" y="789.8" width="401.6" height="1" fill="#175e22"/><rect x="398.4" y="809.8" width="401.6" height="1" fill="#175e22"/><rect x="398.4" y="829.8" width="401.6" height="1" fill="#175e22"/><rect x="398.4" y="849.8" width="401.6" height="1" fill="#175e22"/><rect x="398.4" y="869.8" width="401.6" height="1" fill="#175e22"/><rect x="398.4" y="889.8" width="401.6" height="1" fill="#175e22"/><rect x="398.4" y="909.8" width="401.6" height="1" fill="#175e22"/><rect x="398.4" y="929.8" width="401.6" height="1" fill="#175e22"/><rect x="398.4" y="949.8" width="401.6" height="1" fill="#175e22"/>
<path d="M600,610 V960" stroke="#c8c8c8" stroke-width="1" stroke-dasharray="3 2"/>
<path d="M398.5,711.8 H444 V711 H524 V709.8 H687 V760.5 H524 V762 H444 V762.9 H398.5 Z" fill="#ffff00"/>
<rect x="398.5" y="769.8" width="288" height="1.3" fill="#60c0d0"/>
<rect x="398.5" y="849.8" width="288" height="1.3" fill="#c86878"/>
<rect x="398.5" y="943.4" width="288" height="1.4" fill="#50c888"/>
<rect x="801" y="607.5" width="285" height="353" fill="#1e1e1e"/>
<rect x="803.75" y="608.5" width="92.5" height="24.0" fill="#acacac"/>
<path d="M804.35,632.5 V609.1 H896.25" stroke="#e6e6e6" stroke-width="1.2" fill="none"/>
<rect x="803.75" y="634.5" width="92.5" height="183.0" fill="#a9a9a9"/>
<path d="M804.35,817.5 V635.1 H896.25" stroke="#e6e6e6" stroke-width="1.2" fill="none"/>
<rect x="803.75" y="819.5" width="92.5" height="25.0" fill="#acacac"/>
<path d="M804.35,844.5 V820.1 H896.25" stroke="#e6e6e6" stroke-width="1.2" fill="none"/>
<rect x="803.75" y="846.5" width="92.5" height="115.5" fill="#a9a9a9"/>
<path d="M804.35,962 V847.1 H896.25" stroke="#e6e6e6" stroke-width="1.2" fill="none"/>
<rect x="897.75" y="608.5" width="92.5" height="24.0" fill="#acacac"/>
<path d="M898.35,632.5 V609.1 H990.25" stroke="#e6e6e6" stroke-width="1.2" fill="none"/>
<rect x="897.75" y="634.5" width="92.5" height="183.0" fill="#a9a9a9"/>
<path d="M898.35,817.5 V635.1 H990.25" stroke="#e6e6e6" stroke-width="1.2" fill="none"/>
<rect x="897.75" y="819.5" width="92.5" height="25.0" fill="#acacac"/>
<path d="M898.35,844.5 V820.1 H990.25" stroke="#e6e6e6" stroke-width="1.2" fill="none"/>
<rect x="897.75" y="846.5" width="92.5" height="115.5" fill="#a9a9a9"/>
<path d="M898.35,962 V847.1 H990.25" stroke="#e6e6e6" stroke-width="1.2" fill="none"/>
<rect x="991.75" y="608.5" width="92.5" height="24.0" fill="#acacac"/>
<path d="M992.35,632.5 V609.1 H1084.25" stroke="#e6e6e6" stroke-width="1.2" fill="none"/>
<rect x="991.75" y="634.5" width="92.5" height="183.0" fill="#a9a9a9"/>
<path d="M992.35,817.5 V635.1 H1084.25" stroke="#e6e6e6" stroke-width="1.2" fill="none"/>
<rect x="991.75" y="819.5" width="92.5" height="25.0" fill="#acacac"/>
<path d="M992.35,844.5 V820.1 H1084.25" stroke="#e6e6e6" stroke-width="1.2" fill="none"/>
<rect x="991.75" y="846.5" width="92.5" height="115.5" fill="#a9a9a9"/>
<path d="M992.35,962 V847.1 H1084.25" stroke="#e6e6e6" stroke-width="1.2" fill="none"/>
<text x="850" y="625.3" font-size="12.5" fill="#eaa4ac" font-weight="bold" text-anchor="middle" >Trigger</text>
<text x="944" y="625.3" font-size="12.5" fill="#ffff30" font-weight="bold" text-anchor="middle" >Channel A</text>
<text x="1038" y="625.3" font-size="12.5" fill="#e0409a" font-weight="bold" text-anchor="middle" >Channel C</text>
<text x="849" y="837" font-size="12.5" fill="#e88a3a" font-weight="bold" text-anchor="middle" >Horizontal</text>
<text x="944" y="837" font-size="12.5" fill="#40a0e0" font-weight="bold" text-anchor="middle" >Channel B</text>
<text x="1038" y="837" font-size="12.5" fill="#20a050" font-weight="bold" text-anchor="middle" >Channel D</text>
<text x="835" y="643.7" font-size="9.2" fill="#3a3a3a" font-weight="normal" text-anchor="middle" >Level</text>
<rect x="815" y="647" width="38.60000000000002" height="79.20000000000005" fill="#b8b8b8" stroke="#101010" stroke-width="2"/><rect x="816.3" y="648.3" width="36.00000000000002" height="76.60000000000005" fill="none" stroke="#e0e0e0" stroke-width="0.8"/><rect x="821.8" y="648.6" width="24.800000000000068" height="76.00000000000004" fill="url(#vtrack)"/><path d="M822.3,648.6 V724.6 M846.1,648.6 V724.6" stroke="#222" stroke-width="1.2"/><path d="M822.8,651.0 h3 M845.6,651.0 h-3 M822.8,654.9 h3 M845.6,654.9 h-3 M822.8,658.8 h3 M845.6,658.8 h-3 M822.8,662.7 h3 M845.6,662.7 h-3 M822.8,666.6 h3 M845.6,666.6 h-3 M822.8,670.5 h3 M845.6,670.5 h-3 M822.8,674.4 h3 M845.6,674.4 h-3 M822.8,678.3 h3 M845.6,678.3 h-3 M822.8,682.2 h3 M845.6,682.2 h-3 M822.8,686.1 h3 M845.6,686.1 h-3 M822.8,690.0 h3 M845.6,690.0 h-3 M822.8,693.9 h3 M845.6,693.9 h-3 M822.8,697.8 h3 M845.6,697.8 h-3 M822.8,701.7 h3 M845.6,701.7 h-3 M822.8,705.6 h3 M845.6,705.6 h-3 M822.8,709.5 h3 M845.6,709.5 h-3 M822.8,713.4 h3 M845.6,713.4 h-3 M822.8,717.3 h3 M845.6,717.3 h-3 M822.8,721.2 h3 M845.6,721.2 h-3" stroke="#555" stroke-width="0.8"/><text x="834.2" y="668.5" font-size="9.5" text-anchor="middle" fill="#000">-10</text><text x="834.2" y="688.5" font-size="9.5" text-anchor="middle" fill="#000">0</text><text x="834.2" y="708.5" font-size="9.5" text-anchor="middle" fill="#000">10</text><path d="M816,682.1 L821,686.6 L816,691.1 Z M852.6,682.1 L847.6,686.6 L852.6,691.1 Z" fill="#e81010"/><path d="M809.5,675.6 L805.5,681.6 H813.5 Z M809.5,697.6 L805.5,691.6 H813.5 Z M809.5,680.6 V692.6" fill="#f0a0b0" stroke="#f0a0b0" stroke-width="1.5"/>
<text x="878" y="649.8" font-size="9.6" fill="#3a3a3a" text-anchor="end">AC</text>
<text x="878" y="663.8" font-size="9.6" fill="#3a3a3a" text-anchor="end">DC</text>
<rect x="880.2" y="636.5" width="14.599999999999909" height="32.799999999999955" fill="#b0b0b0" stroke="#101010" stroke-width="1.5"/><rect x="881.2" y="637.5" width="12.599999999999909" height="30.799999999999955" fill="none" stroke="#e8e8e8" stroke-width="0.8"/><path d="M887.5,641.5 V664.3" stroke="#000" stroke-width="2"/><rect x="882.2" y="653.3" width="10.599999999999909" height="14" fill="#c8c8c8" stroke="#333" stroke-width="0.8"/><path d="M884.2,656.3 H890.8" stroke="#444" stroke-width="0.8"/><path d="M884.2,658.9 H890.8" stroke="#444" stroke-width="0.8"/><path d="M884.2,661.5 H890.8" stroke="#444" stroke-width="0.8"/><path d="M884.2,664.1 H890.8" stroke="#444" stroke-width="0.8"/>
<rect x="880.2" y="682.5" width="14.599999999999909" height="31.5" fill="#b0b0b0" stroke="#101010" stroke-width="1.5"/><rect x="881.2" y="683.5" width="12.599999999999909" height="29.5" fill="none" stroke="#e8e8e8" stroke-width="0.8"/><path d="M887.5,687.5 V709" stroke="#000" stroke-width="2"/><rect x="882.2" y="684.5" width="10.599999999999909" height="14" fill="#c8c8c8" stroke="#333" stroke-width="0.8"/><path d="M884.2,687.5 H890.8" stroke="#444" stroke-width="0.8"/><path d="M884.2,690.1 H890.8" stroke="#444" stroke-width="0.8"/><path d="M884.2,692.7 H890.8" stroke="#444" stroke-width="0.8"/><path d="M884.2,695.3 H890.8" stroke="#444" stroke-width="0.8"/>
<path d="M870,698 h3 v-10 h3 M876,704 h-3 v10 h3" stroke="#222" stroke-width="1.3" fill="none"/>
<rect x="880" y="727" width="14.5" height="14.299999999999955" fill="url(#btnp)" stroke="#141414" stroke-width="1"/>
<rect x="880" y="743" width="14.5" height="14.5" fill="url(#btn)" stroke="#141414" stroke-width="1"/>
<rect x="880" y="759.4" width="14.5" height="14.399999999999977" fill="url(#btn)" stroke="#141414" stroke-width="1"/>
<text x="878" y="738" font-size="9.4" fill="#3a3a3a" text-anchor="end">Auto</text>
<text x="878" y="753" font-size="9.4" fill="#3a3a3a" text-anchor="end">One-Shot</text>
<text x="878" y="769" font-size="9.4" fill="#3a3a3a" text-anchor="end">Cursors</text>
<text x="849" y="789" font-size="9.6" fill="#3a3a3a" font-weight="normal" text-anchor="middle" >Source</text>
<text x="829.4" y="799.5" font-size="9" fill="#f0f020" font-weight="bold" text-anchor="middle" >A</text>
<text x="843.8" y="799.5" font-size="9" fill="#40a0e0" font-weight="bold" text-anchor="middle" >B</text>
<text x="858.8" y="799.5" font-size="9" fill="#e040a0" font-weight="bold" text-anchor="middle" >C</text>
<text x="873" y="799.5" font-size="9" fill="#20a050" font-weight="bold" text-anchor="middle" >D</text>
<rect x="818" y="802.5" width="63.299999999999955" height="13.799999999999955" fill="#b0b0b0" stroke="#101010" stroke-width="1.5"/><rect x="819" y="803.5" width="61.299999999999955" height="11.799999999999955" fill="none" stroke="#e8e8e8" stroke-width="0.8"/><path d="M832,809.4 H875.3" stroke="#000" stroke-width="2"/><rect x="820" y="804.5" width="13" height="9.799999999999955" fill="#c8c8c8" stroke="#333" stroke-width="0.8"/><path d="M823.0,806.5 V812.3" stroke="#444" stroke-width="0.8"/><path d="M825.5,806.5 V812.3" stroke="#444" stroke-width="0.8"/><path d="M828.0,806.5 V812.3" stroke="#444" stroke-width="0.8"/><path d="M830.5,806.5 V812.3" stroke="#444" stroke-width="0.8"/>
<text x="927" y="643.5" font-size="9.4" fill="#3a3a3a" font-weight="normal" text-anchor="middle" >Position</text>
<rect x="909" y="647.2" width="38.89999999999998" height="79.19999999999993" fill="#b8b8b8" stroke="#101010" stroke-width="2"/><rect x="910.3" y="648.5" width="36.299999999999976" height="76.59999999999994" fill="none" stroke="#e0e0e0" stroke-width="0.8"/><rect x="915.8" y="648.8000000000001" width="25.100000000000023" height="75.99999999999993" fill="url(#vtrack)"/><path d="M916.3,648.8000000000001 V724.8 M940.4,648.8000000000001 V724.8" stroke="#222" stroke-width="1.2"/><path d="M916.8,651.2 h3 M939.9,651.2 h-3 M916.8,655.1 h3 M939.9,655.1 h-3 M916.8,659.0 h3 M939.9,659.0 h-3 M916.8,662.9 h3 M939.9,662.9 h-3 M916.8,666.8 h3 M939.9,666.8 h-3 M916.8,670.7 h3 M939.9,670.7 h-3 M916.8,674.6 h3 M939.9,674.6 h-3 M916.8,678.5 h3 M939.9,678.5 h-3 M916.8,682.4 h3 M939.9,682.4 h-3 M916.8,686.3 h3 M939.9,686.3 h-3 M916.8,690.2 h3 M939.9,690.2 h-3 M916.8,694.1 h3 M939.9,694.1 h-3 M916.8,698.0 h3 M939.9,698.0 h-3 M916.8,701.9 h3 M939.9,701.9 h-3 M916.8,705.8 h3 M939.9,705.8 h-3 M916.8,709.7 h3 M939.9,709.7 h-3 M916.8,713.6 h3 M939.9,713.6 h-3 M916.8,717.5 h3 M939.9,717.5 h-3 M916.8,721.4 h3 M939.9,721.4 h-3" stroke="#555" stroke-width="0.8"/><text x="928.3" y="655" font-size="9.5" text-anchor="middle" fill="#000">60</text><text x="928.3" y="675.8" font-size="9.5" text-anchor="middle" fill="#000">70</text><text x="928.3" y="695.5" font-size="9.5" text-anchor="middle" fill="#000">80</text><text x="928.3" y="715.5" font-size="9.5" text-anchor="middle" fill="#000">90</text><path d="M910,682.3 L915,686.8 L910,691.3 Z M946.9,682.3 L941.9,686.8 L946.9,691.3 Z" fill="#e81010"/><path d="M903.5,675.8 L899.5,681.8 H907.5 Z M903.5,697.8 L899.5,691.8 H907.5 Z M903.5,680.8 V692.8" fill="#f8f020" stroke="#f8f020" stroke-width="1.5"/>
<text x="972" y="649.8" font-size="9.6" fill="#3a3a3a" text-anchor="end">AC</text>
<text x="972" y="663.8" font-size="9.6" fill="#3a3a3a" text-anchor="end">DC</text>
<text x="972" y="678.1" font-size="9.6" fill="#3a3a3a" text-anchor="end">GND</text>
<text x="972" y="691.8" font-size="9.6" fill="#3a3a3a" text-anchor="end">OFF</text>
<rect x="974.7" y="636.8" width="13.5" height="62.0" fill="#b0b0b0" stroke="#101010" stroke-width="1.5"/><rect x="975.7" y="637.8" width="11.5" height="60.0" fill="none" stroke="#e8e8e8" stroke-width="0.8"/><path d="M981.45,641.8 V693.8" stroke="#000" stroke-width="2"/><rect x="976.7" y="638.8" width="9.5" height="14" fill="#c8c8c8" stroke="#333" stroke-width="0.8"/><path d="M978.7,641.8 H984.2" stroke="#444" stroke-width="0.8"/><path d="M978.7,644.4 H984.2" stroke="#444" stroke-width="0.8"/><path d="M978.7,647.0 H984.2" stroke="#444" stroke-width="0.8"/><path d="M978.7,649.6 H984.2" stroke="#444" stroke-width="0.8"/>
<rect x="974.7" y="701.4" width="14.0" height="14.0" fill="url(#btn)" stroke="#141414" stroke-width="1"/>
<rect x="974.7" y="717.5" width="14.0" height="14.0" fill="url(#btn)" stroke="#141414" stroke-width="1"/>
<text x="972" y="710.7" font-size="9.2" fill="#3a3a3a" text-anchor="end">Invert</text>
<text x="972" y="727.4" font-size="9.6" fill="#3a3a3a" text-anchor="end">A+B</text>
<path d="M900.4000000000001,772 A43.8,43.8 0 0 1 988.0,772 V815.6 H900.4000000000001 Z" fill="#fff" stroke="#333" stroke-width="1"/><rect x="926.2" y="794" width="36" height="22" fill="#a9a9a9"/><path d="M926.2,815.6 V794 H962.2 V815.6" stroke="#333" stroke-width="0.8" fill="none"/><path d="M970.4,737.4 L961.5,748.0 M974.4,739.9 L965.5,750.5" stroke="#333" stroke-width="0.9"/><text x="927.2" y="738.5" font-size="8.2" text-anchor="middle" fill="#333">0.5</text><text x="944.2" y="736.0" font-size="8.2" text-anchor="middle" fill="#333">0.2</text><text x="958.7" y="739.0" font-size="8.2" text-anchor="middle" fill="#333">0.1</text><text x="916.7" y="749.0" font-size="8.2" text-anchor="middle" fill="#333">1</text><text x="908.2" y="762.0" font-size="8.2" text-anchor="middle" fill="#333">2</text><text x="904.7" y="775.5" font-size="8.2" text-anchor="middle" fill="#333">5</text><text x="906.7" y="790.0" font-size="8.2" text-anchor="middle" fill="#333">10</text><text x="914.7" y="802.0" font-size="8.2" text-anchor="middle" fill="#333">20</text><text x="972.7" y="747.0" font-size="8.2" text-anchor="middle" fill="#333">50</text><text x="980.7" y="762.0" font-size="8.2" text-anchor="middle" fill="#333">20</text><text x="984.2" y="775.5" font-size="8.2" text-anchor="middle" fill="#333">10</text><text x="980.2" y="790.0" font-size="8.2" text-anchor="middle" fill="#333">5</text><text x="971.7" y="802.0" font-size="8.2" text-anchor="middle" fill="#333">2</text><path d="M917.7,757.9 L914.2,756.0" stroke="#333" stroke-width="0.8"/><path d="M925.7,748.4 L923.3,745.2" stroke="#333" stroke-width="0.8"/><path d="M936.9,742.9 L936.0,739.0" stroke="#333" stroke-width="0.8"/><path d="M949.4,742.5 L950.1,738.5" stroke="#333" stroke-width="0.8"/><path d="M961.0,747.1 L963.2,743.8" stroke="#333" stroke-width="0.8"/><path d="M969.6,756.1 L973.0,754.0" stroke="#333" stroke-width="0.8"/><path d="M973.9,767.8 L977.9,767.3" stroke="#333" stroke-width="0.8"/><path d="M973.0,780.3 L976.9,781.4" stroke="#333" stroke-width="0.8"/><path d="M967.2,791.3 L970.2,793.9" stroke="#333" stroke-width="0.8"/><path d="M914.3,769.9 L910.3,769.6" stroke="#333" stroke-width="0.8"/><path d="M916.0,782.3 L912.3,783.6" stroke="#333" stroke-width="0.8"/><path d="M922.6,792.8 L919.7,795.6" stroke="#333" stroke-width="0.8"/><circle cx="944.2" cy="772" r="29.5" fill="url(#knob)" stroke="#3a3a3a" stroke-width="1"/><circle cx="944.2" cy="772" r="16.5" fill="url(#knobi)" stroke="#2a2a2a" stroke-width="1.4"/><path d="M922.2,756.4 L930.2,754.4 L927.2,764.4 Z" fill="#f0e010"/><path d="M955.2,777.0 l3,6 l-6,-1 z" fill="#f0e010"/><text x="909.2" y="811.5" font-size="12.5" fill="#222">V</text><text x="969.2" y="811.5" font-size="11" fill="#222">mV</text><rect x="926.7" y="802.6" width="35.5" height="13.5" fill="#fff" stroke="#101010" stroke-width="1.2"/><text x="928.7" y="813.5" font-size="10.5" fill="#101060">2</text>
<text x="1021" y="643.5" font-size="9.4" fill="#3a3a3a" font-weight="normal" text-anchor="middle" >Position</text>
<rect x="1003" y="647.2" width="38.90000000000009" height="79.19999999999993" fill="#b8b8b8" stroke="#101010" stroke-width="2"/><rect x="1004.3" y="648.5" width="36.30000000000009" height="76.59999999999994" fill="none" stroke="#e0e0e0" stroke-width="0.8"/><rect x="1009.8" y="648.8000000000001" width="25.100000000000136" height="75.99999999999993" fill="url(#vtrack)"/><path d="M1010.3,648.8000000000001 V724.8 M1034.4,648.8000000000001 V724.8" stroke="#222" stroke-width="1.2"/><path d="M1010.8,651.2 h3 M1033.9,651.2 h-3 M1010.8,655.1 h3 M1033.9,655.1 h-3 M1010.8,659.0 h3 M1033.9,659.0 h-3 M1010.8,662.9 h3 M1033.9,662.9 h-3 M1010.8,666.8 h3 M1033.9,666.8 h-3 M1010.8,670.7 h3 M1033.9,670.7 h-3 M1010.8,674.6 h3 M1033.9,674.6 h-3 M1010.8,678.5 h3 M1033.9,678.5 h-3 M1010.8,682.4 h3 M1033.9,682.4 h-3 M1010.8,686.3 h3 M1033.9,686.3 h-3 M1010.8,690.2 h3 M1033.9,690.2 h-3 M1010.8,694.1 h3 M1033.9,694.1 h-3 M1010.8,698.0 h3 M1033.9,698.0 h-3 M1010.8,701.9 h3 M1033.9,701.9 h-3 M1010.8,705.8 h3 M1033.9,705.8 h-3 M1010.8,709.7 h3 M1033.9,709.7 h-3 M1010.8,713.6 h3 M1033.9,713.6 h-3 M1010.8,717.5 h3 M1033.9,717.5 h-3 M1010.8,721.4 h3 M1033.9,721.4 h-3" stroke="#555" stroke-width="0.8"/><text x="1022.4" y="668.5" font-size="9.5" text-anchor="middle" fill="#000">-50</text><text x="1022.4" y="688.5" font-size="9.5" text-anchor="middle" fill="#000">-40</text><text x="1022.4" y="708.5" font-size="9.5" text-anchor="middle" fill="#000">-30</text><path d="M1004,682.3 L1009,686.8 L1004,691.3 Z M1040.9,682.3 L1035.9,686.8 L1040.9,691.3 Z" fill="#e81010"/><path d="M997.5,675.8 L993.5,681.8 H1001.5 Z M997.5,697.8 L993.5,691.8 H1001.5 Z M997.5,680.8 V692.8" fill="#e040a0" stroke="#e040a0" stroke-width="1.5"/>
<text x="1066" y="649.8" font-size="9.6" fill="#3a3a3a" text-anchor="end">AC</text>
<text x="1066" y="663.8" font-size="9.6" fill="#3a3a3a" text-anchor="end">DC</text>
<text x="1066" y="678.1" font-size="9.6" fill="#3a3a3a" text-anchor="end">GND</text>
<text x="1066" y="691.8" font-size="9.6" fill="#3a3a3a" text-anchor="end">OFF</text>
<rect x="1068.7" y="636.8" width="13.5" height="62.0" fill="#b0b0b0" stroke="#101010" stroke-width="1.5"/><rect x="1069.7" y="637.8" width="11.5" height="60.0" fill="none" stroke="#e8e8e8" stroke-width="0.8"/><path d="M1075.45,641.8 V693.8" stroke="#000" stroke-width="2"/><rect x="1070.7" y="638.8" width="9.5" height="14" fill="#c8c8c8" stroke="#333" stroke-width="0.8"/><path d="M1072.7,641.8 H1078.2" stroke="#444" stroke-width="0.8"/><path d="M1072.7,644.4 H1078.2" stroke="#444" stroke-width="0.8"/><path d="M1072.7,647.0 H1078.2" stroke="#444" stroke-width="0.8"/><path d="M1072.7,649.6 H1078.2" stroke="#444" stroke-width="0.8"/>
<rect x="1068.7" y="701.4" width="14.0" height="14.0" fill="url(#btn)" stroke="#141414" stroke-width="1"/>
<rect x="1068.7" y="717.5" width="14.0" height="14.0" fill="url(#btn)" stroke="#141414" stroke-width="1"/>
<text x="1066" y="710.7" font-size="9.2" fill="#3a3a3a" text-anchor="end">Invert</text>
<text x="1066" y="727.4" font-size="9.6" fill="#3a3a3a" text-anchor="end">C+D</text>
<path d="M994.4000000000001,772 A43.8,43.8 0 0 1 1082.0,772 V815.6 H994.4000000000001 Z" fill="#fff" stroke="#333" stroke-width="1"/><rect x="1020.2" y="794" width="36" height="22" fill="#a9a9a9"/><path d="M1020.2,815.6 V794 H1056.2 V815.6" stroke="#333" stroke-width="0.8" fill="none"/><path d="M1064.4,737.4 L1055.5,748.0 M1068.4,739.9 L1059.5,750.5" stroke="#333" stroke-width="0.9"/><text x="1021.2" y="738.5" font-size="8.2" text-anchor="middle" fill="#333">0.5</text><text x="1038.2" y="736.0" font-size="8.2" text-anchor="middle" fill="#333">0.2</text><text x="1052.7" y="739.0" font-size="8.2" text-anchor="middle" fill="#333">0.1</text><text x="1010.7" y="749.0" font-size="8.2" text-anchor="middle" fill="#333">1</text><text x="1002.2" y="762.0" font-size="8.2" text-anchor="middle" fill="#333">2</text><text x="998.7" y="775.5" font-size="8.2" text-anchor="middle" fill="#333">5</text><text x="1000.7" y="790.0" font-size="8.2" text-anchor="middle" fill="#333">10</text><text x="1008.7" y="802.0" font-size="8.2" text-anchor="middle" fill="#333">20</text><text x="1066.7" y="747.0" font-size="8.2" text-anchor="middle" fill="#333">50</text><text x="1074.7" y="762.0" font-size="8.2" text-anchor="middle" fill="#333">20</text><text x="1078.2" y="775.5" font-size="8.2" text-anchor="middle" fill="#333">10</text><text x="1074.2" y="790.0" font-size="8.2" text-anchor="middle" fill="#333">5</text><text x="1065.7" y="802.0" font-size="8.2" text-anchor="middle" fill="#333">2</text><path d="M1011.7,757.9 L1008.2,756.0" stroke="#333" stroke-width="0.8"/><path d="M1019.7,748.4 L1017.3,745.2" stroke="#333" stroke-width="0.8"/><path d="M1030.9,742.9 L1030.0,739.0" stroke="#333" stroke-width="0.8"/><path d="M1043.4,742.5 L1044.1,738.5" stroke="#333" stroke-width="0.8"/><path d="M1055.0,747.1 L1057.2,743.8" stroke="#333" stroke-width="0.8"/><path d="M1063.6,756.1 L1067.0,754.0" stroke="#333" stroke-width="0.8"/><path d="M1067.9,767.8 L1071.9,767.3" stroke="#333" stroke-width="0.8"/><path d="M1067.0,780.3 L1070.9,781.4" stroke="#333" stroke-width="0.8"/><path d="M1061.2,791.3 L1064.2,793.9" stroke="#333" stroke-width="0.8"/><path d="M1008.3,769.9 L1004.3,769.6" stroke="#333" stroke-width="0.8"/><path d="M1010.0,782.3 L1006.3,783.6" stroke="#333" stroke-width="0.8"/><path d="M1016.6,792.8 L1013.7,795.6" stroke="#333" stroke-width="0.8"/><circle cx="1038.2" cy="772" r="29.5" fill="url(#knob)" stroke="#3a3a3a" stroke-width="1"/><circle cx="1038.2" cy="772" r="16.5" fill="url(#knobi)" stroke="#2a2a2a" stroke-width="1.4"/><path d="M1012.2,769.0 L1020.2,767.0 L1017.2,777.0 Z" fill="#d02080"/><path d="M1049.2,777.0 l3,6 l-6,-1 z" fill="#d02080"/><text x="1003.2" y="811.5" font-size="12.5" fill="#222">V</text><text x="1063.2" y="811.5" font-size="11" fill="#222">mV</text><rect x="1020.7" y="802.6" width="35.5" height="13.5" fill="#fff" stroke="#101010" stroke-width="1.2"/><text x="1022.7" y="813.5" font-size="10.5" fill="#101060">5</text>
<text x="849" y="859" font-size="9.6" fill="#3a3a3a" font-weight="normal" text-anchor="middle" >Source</text>
<path d="M817,870 L826,864 L829,863" stroke="#e08a3a" stroke-width="1.5" fill="none"/>
<text x="835.6" y="868" font-size="9" fill="#f0f020" font-weight="bold" text-anchor="middle" >A</text>
<text x="850.5" y="868" font-size="9" fill="#40a0e0" font-weight="bold" text-anchor="middle" >B</text>
<text x="864.7" y="868" font-size="9" fill="#e040a0" font-weight="bold" text-anchor="middle" >C</text>
<text x="879" y="868" font-size="9" fill="#20a050" font-weight="bold" text-anchor="middle" >D</text>
<rect x="811.3" y="871.2" width="77.80000000000007" height="14.0" fill="#b0b0b0" stroke="#101010" stroke-width="1.5"/><rect x="812.3" y="872.2" width="75.80000000000007" height="12.0" fill="none" stroke="#e8e8e8" stroke-width="0.8"/><path d="M825.3,878.2 H883.1" stroke="#000" stroke-width="2"/><rect x="813.3" y="873.2" width="13" height="10.0" fill="#c8c8c8" stroke="#333" stroke-width="0.8"/><path d="M816.3,875.2 V881.2" stroke="#444" stroke-width="0.8"/><path d="M818.8,875.2 V881.2" stroke="#444" stroke-width="0.8"/><path d="M821.3,875.2 V881.2" stroke="#444" stroke-width="0.8"/><path d="M823.8,875.2 V881.2" stroke="#444" stroke-width="0.8"/>
<text x="849" y="896.6" font-size="9.4" fill="#3a3a3a" font-weight="normal" text-anchor="middle" >Position</text>
<rect x="810.6" y="900.3" width="80" height="37.8" fill="#b8b8b8" stroke="#101010" stroke-width="1.8"/>
<rect x="813.5" y="906.4" width="74.5" height="25" fill="url(#htrack)"/>
<path d="M813.5,906.4 H888 M813.5,931.4 H888" stroke="#222" stroke-width="1.2"/>
<path d="M815.0,907 v2.5 M815.0,931 v-2.5 M819.0,907 v2.5 M819.0,931 v-2.5 M823.0,907 v2.5 M823.0,931 v-2.5 M827.0,907 v2.5 M827.0,931 v-2.5 M831.0,907 v2.5 M831.0,931 v-2.5 M835.0,907 v2.5 M835.0,931 v-2.5 M839.0,907 v2.5 M839.0,931 v-2.5 M843.0,907 v2.5 M843.0,931 v-2.5 M847.0,907 v2.5 M847.0,931 v-2.5 M851.0,907 v2.5 M851.0,931 v-2.5 M855.0,907 v2.5 M855.0,931 v-2.5 M859.0,907 v2.5 M859.0,931 v-2.5 M863.0,907 v2.5 M863.0,931 v-2.5 M867.0,907 v2.5 M867.0,931 v-2.5 M871.0,907 v2.5 M871.0,931 v-2.5 M875.0,907 v2.5 M875.0,931 v-2.5 M879.0,907 v2.5 M879.0,931 v-2.5 M883.0,907 v2.5 M883.0,931 v-2.5 M887.0,907 v2.5 M887.0,931 v-2.5" stroke="#555" stroke-width="0.8"/>
<text x="829" y="922" font-size="9.2" text-anchor="middle">210</text><text x="849.5" y="922" font-size="9.2" text-anchor="middle">200</text><text x="869" y="922" font-size="9.2" text-anchor="middle">190</text>
<path d="M844.5,901.5 L849.5,906.3 L854.5,901.5 Z M844.5,937 L849.5,932 L854.5,937 Z" fill="#e81010"/>
<text x="928.6" y="855.7" font-size="9.4" fill="#3a3a3a" font-weight="normal" text-anchor="middle" >Position</text>
<rect x="909.1" y="859.2" width="38.19999999999993" height="79.19999999999993" fill="#b8b8b8" stroke="#101010" stroke-width="2"/><rect x="910.4" y="860.5" width="35.59999999999993" height="76.59999999999994" fill="none" stroke="#e0e0e0" stroke-width="0.8"/><rect x="915.9" y="860.8000000000001" width="24.399999999999977" height="75.99999999999993" fill="url(#vtrack)"/><path d="M916.4,860.8000000000001 V936.8 M939.8,860.8000000000001 V936.8" stroke="#222" stroke-width="1.2"/><path d="M916.9,863.2 h3 M939.3,863.2 h-3 M916.9,867.1 h3 M939.3,867.1 h-3 M916.9,871.0 h3 M939.3,871.0 h-3 M916.9,874.9 h3 M939.3,874.9 h-3 M916.9,878.8 h3 M939.3,878.8 h-3 M916.9,882.7 h3 M939.3,882.7 h-3 M916.9,886.6 h3 M939.3,886.6 h-3 M916.9,890.5 h3 M939.3,890.5 h-3 M916.9,894.4 h3 M939.3,894.4 h-3 M916.9,898.3 h3 M939.3,898.3 h-3 M916.9,902.2 h3 M939.3,902.2 h-3 M916.9,906.1 h3 M939.3,906.1 h-3 M916.9,910.0 h3 M939.3,910.0 h-3 M916.9,913.9 h3 M939.3,913.9 h-3 M916.9,917.8 h3 M939.3,917.8 h-3 M916.9,921.7 h3 M939.3,921.7 h-3 M916.9,925.6 h3 M939.3,925.6 h-3 M916.9,929.5 h3 M939.3,929.5 h-3 M916.9,933.4 h3 M939.3,933.4 h-3" stroke="#555" stroke-width="0.8"/><text x="928.1" y="880" font-size="9.5" text-anchor="middle" fill="#000">30</text><text x="928.1" y="900.5" font-size="9.5" text-anchor="middle" fill="#000">40</text><text x="928.1" y="920" font-size="9.5" text-anchor="middle" fill="#000">50</text><path d="M910.1,894.3 L915.1,898.8 L910.1,903.3 Z M946.3,894.3 L941.3,898.8 L946.3,903.3 Z" fill="#e81010"/><path d="M903.6,887.8 L899.6,893.8 H907.6 Z M903.6,909.8 L899.6,903.8 H907.6 Z M903.6,892.8 V904.8" fill="#40a0e0" stroke="#40a0e0" stroke-width="1.5"/>
<text x="972" y="862" font-size="9.6" fill="#3a3a3a" text-anchor="end">AC</text>
<text x="972" y="876.5" font-size="9.6" fill="#3a3a3a" text-anchor="end">DC</text>
<text x="972" y="890.5" font-size="9.6" fill="#3a3a3a" text-anchor="end">GND</text>
<text x="972" y="904" font-size="9.6" fill="#3a3a3a" text-anchor="end">OFF</text>
<rect x="974.75" y="848.7" width="14.049999999999955" height="62.09999999999991" fill="#b0b0b0" stroke="#101010" stroke-width="1.5"/><rect x="975.75" y="849.7" width="12.049999999999955" height="60.09999999999991" fill="none" stroke="#e8e8e8" stroke-width="0.8"/><path d="M981.775,853.7 V905.8" stroke="#000" stroke-width="2"/><rect x="976.75" y="850.7" width="10.049999999999955" height="14" fill="#c8c8c8" stroke="#333" stroke-width="0.8"/><path d="M978.75,853.7 H984.8" stroke="#444" stroke-width="0.8"/><path d="M978.75,856.3 H984.8" stroke="#444" stroke-width="0.8"/><path d="M978.75,858.9 H984.8" stroke="#444" stroke-width="0.8"/><path d="M978.75,861.5 H984.8" stroke="#444" stroke-width="0.8"/>
<rect x="974.75" y="913.1" width="14.049999999999955" height="14.100000000000023" fill="url(#btn)" stroke="#141414" stroke-width="1"/>
<text x="972" y="922" font-size="9.2" fill="#3a3a3a" text-anchor="end">Invert</text>
<text x="1022.6" y="855.7" font-size="9.4" fill="#3a3a3a" font-weight="normal" text-anchor="middle" >Position</text>
<rect x="1003.1" y="859.2" width="38.19999999999993" height="79.19999999999993" fill="#b8b8b8" stroke="#101010" stroke-width="2"/><rect x="1004.4" y="860.5" width="35.59999999999993" height="76.59999999999994" fill="none" stroke="#e0e0e0" stroke-width="0.8"/><rect x="1009.9" y="860.8000000000001" width="24.399999999999977" height="75.99999999999993" fill="url(#vtrack)"/><path d="M1010.4,860.8000000000001 V936.8 M1033.8,860.8000000000001 V936.8" stroke="#222" stroke-width="1.2"/><path d="M1010.9,863.2 h3 M1033.3,863.2 h-3 M1010.9,867.1 h3 M1033.3,867.1 h-3 M1010.9,871.0 h3 M1033.3,871.0 h-3 M1010.9,874.9 h3 M1033.3,874.9 h-3 M1010.9,878.8 h3 M1033.3,878.8 h-3 M1010.9,882.7 h3 M1033.3,882.7 h-3 M1010.9,886.6 h3 M1033.3,886.6 h-3 M1010.9,890.5 h3 M1033.3,890.5 h-3 M1010.9,894.4 h3 M1033.3,894.4 h-3 M1010.9,898.3 h3 M1033.3,898.3 h-3 M1010.9,902.2 h3 M1033.3,902.2 h-3 M1010.9,906.1 h3 M1033.3,906.1 h-3 M1010.9,910.0 h3 M1033.3,910.0 h-3 M1010.9,913.9 h3 M1033.3,913.9 h-3 M1010.9,917.8 h3 M1033.3,917.8 h-3 M1010.9,921.7 h3 M1033.3,921.7 h-3 M1010.9,925.6 h3 M1033.3,925.6 h-3 M1010.9,929.5 h3 M1033.3,929.5 h-3 M1010.9,933.4 h3 M1033.3,933.4 h-3" stroke="#555" stroke-width="0.8"/><text x="1022.1" y="868" font-size="9.5" text-anchor="middle" fill="#000">-150</text><text x="1022.1" y="888.5" font-size="9.5" text-anchor="middle" fill="#000">-140</text><text x="1022.1" y="908" font-size="9.5" text-anchor="middle" fill="#000">-130</text><text x="1022.1" y="928" font-size="9.5" text-anchor="middle" fill="#000">-120</text><path d="M1004.1,894.3 L1009.1,898.8 L1004.1,903.3 Z M1040.3,894.3 L1035.3,898.8 L1040.3,903.3 Z" fill="#e81010"/><path d="M997.6,887.8 L993.6,893.8 H1001.6 Z M997.6,909.8 L993.6,903.8 H1001.6 Z M997.6,892.8 V904.8" fill="#20a050" stroke="#20a050" stroke-width="1.5"/>
<text x="1066" y="862" font-size="9.6" fill="#3a3a3a" text-anchor="end">AC</text>
<text x="1066" y="876.5" font-size="9.6" fill="#3a3a3a" text-anchor="end">DC</text>
<text x="1066" y="890.5" font-size="9.6" fill="#3a3a3a" text-anchor="end">GND</text>
<text x="1066" y="904" font-size="9.6" fill="#3a3a3a" text-anchor="end">OFF</text>
<rect x="1068.75" y="848.7" width="14.049999999999955" height="62.09999999999991" fill="#b0b0b0" stroke="#101010" stroke-width="1.5"/><rect x="1069.75" y="849.7" width="12.049999999999955" height="60.09999999999991" fill="none" stroke="#e8e8e8" stroke-width="0.8"/><path d="M1075.775,853.7 V905.8" stroke="#000" stroke-width="2"/><rect x="1070.75" y="850.7" width="10.049999999999955" height="14" fill="#c8c8c8" stroke="#333" stroke-width="0.8"/><path d="M1072.75,853.7 H1078.8" stroke="#444" stroke-width="0.8"/><path d="M1072.75,856.3 H1078.8" stroke="#444" stroke-width="0.8"/><path d="M1072.75,858.9 H1078.8" stroke="#444" stroke-width="0.8"/><path d="M1072.75,861.5 H1078.8" stroke="#444" stroke-width="0.8"/>
<rect x="1068.75" y="913.1" width="14.049999999999955" height="14.100000000000023" fill="url(#btn)" stroke="#141414" stroke-width="1"/>
<text x="1066" y="922" font-size="9.2" fill="#3a3a3a" text-anchor="end">Invert</text>
<path d="M805.7,984 A43.8,43.8 0 0 1 893.3,984 V1027.6 H805.7 Z" fill="#fff" stroke="#333" stroke-width="1"/><rect x="831.5" y="1006" width="36" height="22" fill="#a9a9a9"/><path d="M831.5,1027.6 V1006 H867.5 V1027.6" stroke="#333" stroke-width="0.8" fill="none"/><path d="M875.7,949.4 L866.8,960.0 M879.7,951.9 L870.8,962.5" stroke="#333" stroke-width="0.9"/><text x="832.5" y="950.5" font-size="8.2" text-anchor="middle" fill="#333">0.5</text><text x="849.5" y="948.0" font-size="8.2" text-anchor="middle" fill="#333">0.2</text><text x="864.0" y="951.0" font-size="8.2" text-anchor="middle" fill="#333">0.1</text><text x="822.0" y="961.0" font-size="8.2" text-anchor="middle" fill="#333">1</text><text x="813.5" y="974.0" font-size="8.2" text-anchor="middle" fill="#333">2</text><text x="810.0" y="987.5" font-size="8.2" text-anchor="middle" fill="#333">5</text><text x="812.0" y="1002.0" font-size="8.2" text-anchor="middle" fill="#333">10</text><text x="820.0" y="1014.0" font-size="8.2" text-anchor="middle" fill="#333">20</text><text x="878.0" y="959.0" font-size="8.2" text-anchor="middle" fill="#333">50</text><text x="886.0" y="974.0" font-size="8.2" text-anchor="middle" fill="#333">20</text><text x="889.5" y="987.5" font-size="8.2" text-anchor="middle" fill="#333">10</text><text x="885.5" y="1002.0" font-size="8.2" text-anchor="middle" fill="#333">5</text><text x="877.0" y="1014.0" font-size="8.2" text-anchor="middle" fill="#333">2</text><path d="M823.0,969.9 L819.5,968.0" stroke="#333" stroke-width="0.8"/><path d="M831.0,960.4 L828.6,957.2" stroke="#333" stroke-width="0.8"/><path d="M842.2,954.9 L841.3,951.0" stroke="#333" stroke-width="0.8"/><path d="M854.7,954.5 L855.4,950.5" stroke="#333" stroke-width="0.8"/><path d="M866.3,959.1 L868.5,955.8" stroke="#333" stroke-width="0.8"/><path d="M874.9,968.1 L878.3,966.0" stroke="#333" stroke-width="0.8"/><path d="M879.2,979.8 L883.2,979.3" stroke="#333" stroke-width="0.8"/><path d="M878.3,992.3 L882.2,993.4" stroke="#333" stroke-width="0.8"/><path d="M872.5,1003.3 L875.5,1005.9" stroke="#333" stroke-width="0.8"/><path d="M819.6,981.9 L815.6,981.6" stroke="#333" stroke-width="0.8"/><path d="M821.3,994.3 L817.6,995.6" stroke="#333" stroke-width="0.8"/><path d="M827.9,1004.8 L825.0,1007.6" stroke="#333" stroke-width="0.8"/><circle cx="849.5" cy="984" r="29.5" fill="url(#knob)" stroke="#3a3a3a" stroke-width="1"/><circle cx="849.5" cy="984" r="16.5" fill="url(#knobi)" stroke="#2a2a2a" stroke-width="1.4"/><path d="M838.0,960.3 L846.0,958.3 L843.0,968.3 Z" fill="#e08a3a"/><path d="M860.5,989.0 l3,6 l-6,-1 z" fill="#e08a3a"/><text x="814.5" y="1023.5" font-size="12.5" fill="#222">V</text><text x="874.5" y="1023.5" font-size="11" fill="#222">mV</text><rect x="832.0" y="1014.6" width="35.5" height="13.5" fill="#fff" stroke="#101010" stroke-width="1.2"/><text x="834.0" y="1025.5" font-size="10.5" fill="#101060"></text>
<path d="M900.4000000000001,984 A43.8,43.8 0 0 1 988.0,984 V1027.6 H900.4000000000001 Z" fill="#fff" stroke="#333" stroke-width="1"/><rect x="926.2" y="1006" width="36" height="22" fill="#a9a9a9"/><path d="M926.2,1027.6 V1006 H962.2 V1027.6" stroke="#333" stroke-width="0.8" fill="none"/><path d="M970.4,949.4 L961.5,960.0 M974.4,951.9 L965.5,962.5" stroke="#333" stroke-width="0.9"/><text x="927.2" y="950.5" font-size="8.2" text-anchor="middle" fill="#333">0.5</text><text x="944.2" y="948.0" font-size="8.2" text-anchor="middle" fill="#333">0.2</text><text x="958.7" y="951.0" font-size="8.2" text-anchor="middle" fill="#333">0.1</text><text x="916.7" y="961.0" font-size="8.2" text-anchor="middle" fill="#333">1</text><text x="908.2" y="974.0" font-size="8.2" text-anchor="middle" fill="#333">2</text><text x="904.7" y="987.5" font-size="8.2" text-anchor="middle" fill="#333">5</text><text x="906.7" y="1002.0" font-size="8.2" text-anchor="middle" fill="#333">10</text><text x="914.7" y="1014.0" font-size="8.2" text-anchor="middle" fill="#333">20</text><text x="972.7" y="959.0" font-size="8.2" text-anchor="middle" fill="#333">50</text><text x="980.7" y="974.0" font-size="8.2" text-anchor="middle" fill="#333">20</text><text x="984.2" y="987.5" font-size="8.2" text-anchor="middle" fill="#333">10</text><text x="980.2" y="1002.0" font-size="8.2" text-anchor="middle" fill="#333">5</text><text x="971.7" y="1014.0" font-size="8.2" text-anchor="middle" fill="#333">2</text><path d="M917.7,969.9 L914.2,968.0" stroke="#333" stroke-width="0.8"/><path d="M925.7,960.4 L923.3,957.2" stroke="#333" stroke-width="0.8"/><path d="M936.9,954.9 L936.0,951.0" stroke="#333" stroke-width="0.8"/><path d="M949.4,954.5 L950.1,950.5" stroke="#333" stroke-width="0.8"/><path d="M961.0,959.1 L963.2,955.8" stroke="#333" stroke-width="0.8"/><path d="M969.6,968.1 L973.0,966.0" stroke="#333" stroke-width="0.8"/><path d="M973.9,979.8 L977.9,979.3" stroke="#333" stroke-width="0.8"/><path d="M973.0,992.3 L976.9,993.4" stroke="#333" stroke-width="0.8"/><path d="M967.2,1003.3 L970.2,1005.9" stroke="#333" stroke-width="0.8"/><path d="M914.3,981.9 L910.3,981.6" stroke="#333" stroke-width="0.8"/><path d="M916.0,994.3 L912.3,995.6" stroke="#333" stroke-width="0.8"/><path d="M922.6,1004.8 L919.7,1007.6" stroke="#333" stroke-width="0.8"/><circle cx="944.2" cy="984" r="29.5" fill="url(#knob)" stroke="#3a3a3a" stroke-width="1"/><circle cx="944.2" cy="984" r="16.5" fill="url(#knobi)" stroke="#2a2a2a" stroke-width="1.4"/><path d="M932.7,960.3 L940.7,958.3 L937.7,968.3 Z" fill="#40a0e0"/><path d="M955.2,989.0 l3,6 l-6,-1 z" fill="#40a0e0"/><text x="909.2" y="1023.5" font-size="12.5" fill="#222">V</text><text x="969.2" y="1023.5" font-size="11" fill="#222">mV</text><rect x="926.7" y="1014.6" width="35.5" height="13.5" fill="#fff" stroke="#101010" stroke-width="1.2"/><text x="928.7" y="1025.5" font-size="10.5" fill="#101060"></text>
<path d="M994.4000000000001,984 A43.8,43.8 0 0 1 1082.0,984 V1027.6 H994.4000000000001 Z" fill="#fff" stroke="#333" stroke-width="1"/><rect x="1020.2" y="1006" width="36" height="22" fill="#a9a9a9"/><path d="M1020.2,1027.6 V1006 H1056.2 V1027.6" stroke="#333" stroke-width="0.8" fill="none"/><path d="M1064.4,949.4 L1055.5,960.0 M1068.4,951.9 L1059.5,962.5" stroke="#333" stroke-width="0.9"/><text x="1021.2" y="950.5" font-size="8.2" text-anchor="middle" fill="#333">0.5</text><text x="1038.2" y="948.0" font-size="8.2" text-anchor="middle" fill="#333">0.2</text><text x="1052.7" y="951.0" font-size="8.2" text-anchor="middle" fill="#333">0.1</text><text x="1010.7" y="961.0" font-size="8.2" text-anchor="middle" fill="#333">1</text><text x="1002.2" y="974.0" font-size="8.2" text-anchor="middle" fill="#333">2</text><text x="998.7" y="987.5" font-size="8.2" text-anchor="middle" fill="#333">5</text><text x="1000.7" y="1002.0" font-size="8.2" text-anchor="middle" fill="#333">10</text><text x="1008.7" y="1014.0" font-size="8.2" text-anchor="middle" fill="#333">20</text><text x="1066.7" y="959.0" font-size="8.2" text-anchor="middle" fill="#333">50</text><text x="1074.7" y="974.0" font-size="8.2" text-anchor="middle" fill="#333">20</text><text x="1078.2" y="987.5" font-size="8.2" text-anchor="middle" fill="#333">10</text><text x="1074.2" y="1002.0" font-size="8.2" text-anchor="middle" fill="#333">5</text><text x="1065.7" y="1014.0" font-size="8.2" text-anchor="middle" fill="#333">2</text><path d="M1011.7,969.9 L1008.2,968.0" stroke="#333" stroke-width="0.8"/><path d="M1019.7,960.4 L1017.3,957.2" stroke="#333" stroke-width="0.8"/><path d="M1030.9,954.9 L1030.0,951.0" stroke="#333" stroke-width="0.8"/><path d="M1043.4,954.5 L1044.1,950.5" stroke="#333" stroke-width="0.8"/><path d="M1055.0,959.1 L1057.2,955.8" stroke="#333" stroke-width="0.8"/><path d="M1063.6,968.1 L1067.0,966.0" stroke="#333" stroke-width="0.8"/><path d="M1067.9,979.8 L1071.9,979.3" stroke="#333" stroke-width="0.8"/><path d="M1067.0,992.3 L1070.9,993.4" stroke="#333" stroke-width="0.8"/><path d="M1061.2,1003.3 L1064.2,1005.9" stroke="#333" stroke-width="0.8"/><path d="M1008.3,981.9 L1004.3,981.6" stroke="#333" stroke-width="0.8"/><path d="M1010.0,994.3 L1006.3,995.6" stroke="#333" stroke-width="0.8"/><path d="M1016.6,1004.8 L1013.7,1007.6" stroke="#333" stroke-width="0.8"/><circle cx="1038.2" cy="984" r="29.5" fill="url(#knob)" stroke="#3a3a3a" stroke-width="1"/><circle cx="1038.2" cy="984" r="16.5" fill="url(#knobi)" stroke="#2a2a2a" stroke-width="1.4"/><path d="M1026.7,960.3 L1034.7,958.3 L1031.7,968.3 Z" fill="#20a050"/><path d="M1049.2,989.0 l3,6 l-6,-1 z" fill="#20a050"/><text x="1003.2" y="1023.5" font-size="12.5" fill="#222">V</text><text x="1063.2" y="1023.5" font-size="11" fill="#222">mV</text><rect x="1020.7" y="1014.6" width="35.5" height="13.5" fill="#fff" stroke="#101010" stroke-width="1.2"/><text x="1022.7" y="1025.5" font-size="10.5" fill="#101060"></text>
<rect x="393" y="958" width="694" height="2" fill="#3a3a3a"/>
</svg>
</body></html>
